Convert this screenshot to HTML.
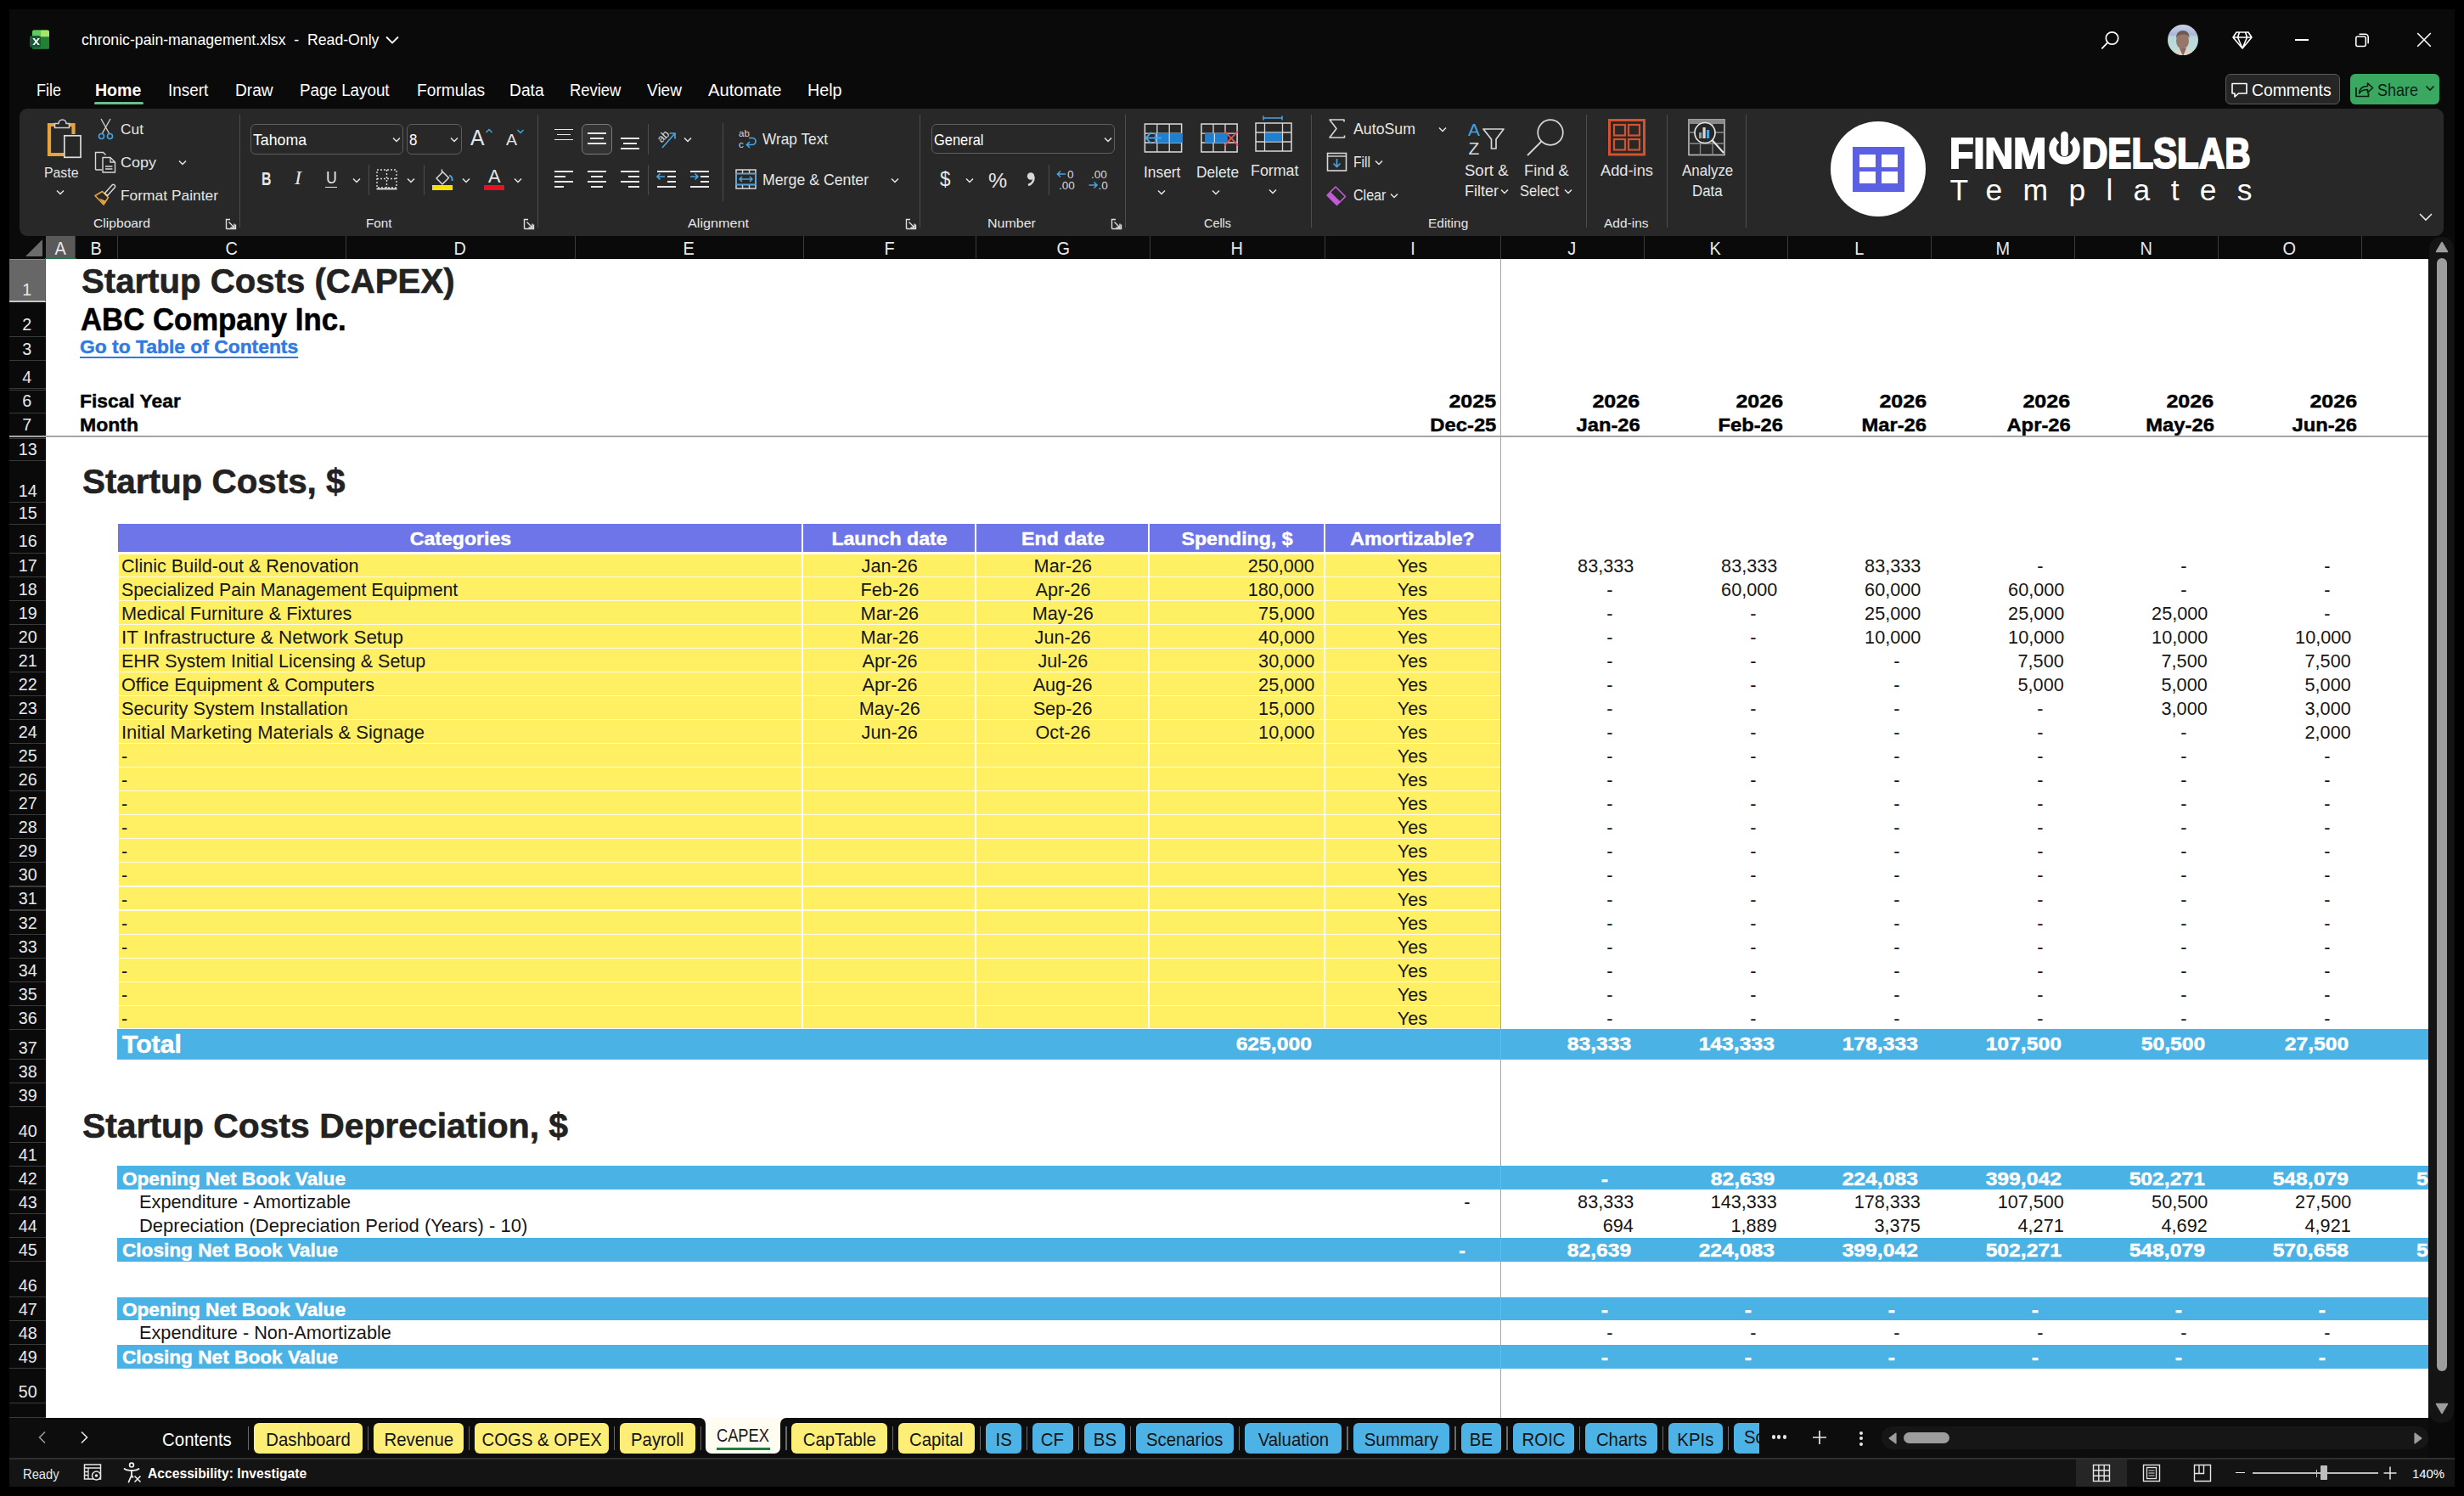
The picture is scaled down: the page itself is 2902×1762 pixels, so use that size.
<!DOCTYPE html><html><head><meta charset="utf-8"><style>html,body{margin:0;padding:0;width:2902px;height:1762px;overflow:hidden;background:#000;font-family:"Liberation Sans",sans-serif}div,svg{box-sizing:border-box}</style></head><body><div style="position:absolute;left:0.00px;top:0.00px;width:2902.00px;height:1762.00px;background:#000000;"></div><div style="position:absolute;left:11.00px;top:11.00px;width:2879.50px;height:1740.00px;background:#0a0a0a;"></div><svg style="position:absolute;left:33.00px;top:33.00px;" width="28" height="28" viewBox="0 0 28 28"><rect x="5" y="2.5" width="20" height="22" rx="2" fill="#2a8a3a"/><path d="M5 4.5 a2 2 0 0 1 2 -2 h8 v8 h-10 z" fill="#5fcb5e"/><path d="M15 2.5 h8 a2 2 0 0 1 2 2 v6 h-10 z" fill="#a6e46a"/><rect x="5" y="10.5" width="20" height="14" rx="0" fill="#208034"/><rect x="2" y="9" width="13" height="14" rx="2.5" fill="#185c37"/><path d="M5.3 12 L8.5 16 L5.3 20 h2.3 L9.6 17.3 L11.6 20 h2.3 L10.7 16 L13.9 12 h-2.3 L9.6 14.7 L7.6 12 z" fill="#fff"/></svg><div style="position:absolute;left:96.00px;top:37.75px;width:0;height:0;display:flex;justify-content:flex-start"><span style="white-space:pre;line-height:1;font-family:'Liberation Sans',sans-serif;font-size:18.60px;font-weight:400;color:#ffffff;transform:scaleX(0.9498);transform-origin:0 0;">chronic-pain-management.xlsx  -  Read-Only</span></div><svg style="position:absolute;left:452.00px;top:40.00px;" width="20" height="14" viewBox="0 0 20 14"><path d="M3 3.5 L10 10.5 L17 3.5" stroke="#fff" stroke-width="1.8" fill="none"/></svg><svg style="position:absolute;left:2472.00px;top:34.00px;" width="28" height="28" viewBox="0 0 28 28"><circle cx="15.5" cy="11" r="7.2" stroke="#fff" stroke-width="1.7" fill="none"/><path d="M10.3 16.2 L3.8 22.8" stroke="#fff" stroke-width="1.8" stroke-linecap="round"/></svg><svg style="position:absolute;left:2553.00px;top:28.90px;" width="36" height="36" viewBox="0 0 36 36"><defs><clipPath id="avc"><circle cx="18" cy="18" r="18"/></clipPath><linearGradient id="avg" x1="0" y1="0" x2="0" y2="1"><stop offset="0" stop-color="#c9d2ea"/><stop offset="0.33" stop-color="#a9b8d8"/><stop offset="0.4" stop-color="#b9d6d8"/><stop offset="1" stop-color="#bfe0dc"/></linearGradient></defs><g clip-path="url(#avc)"><rect width="36" height="36" fill="url(#avg)"/><path d="M4 40 C6 30 12 28 18 28 C25 28 31 31 33 40 Z" fill="#ddd3c8"/><ellipse cx="17.5" cy="19" rx="7.5" ry="10" fill="#96786b"/><path d="M10 16 C10 9 14 7 18 7 C23 7 25.5 10 25.5 16 C24 12 20 11.5 18 11.5 C14 11.5 11 13 10 16 Z" fill="#6f5a52"/><path d="M14 28 L18 37 L22 28 Z" fill="#8b6a60"/></g></svg><svg style="position:absolute;left:2627.00px;top:33.00px;" width="28" height="28" viewBox="0 0 28 28"><path d="M7 5 H21 L25 11 L14 24 L3 11 Z M3 11 H25 M10.5 5 L8.5 11 L14 24 L19.5 11 L17.5 5" stroke="#fff" stroke-width="1.6" fill="none" stroke-linejoin="round"/></svg><div style="position:absolute;left:2702.50px;top:46.00px;width:16.00px;height:1.60px;background:#ffffff;"></div><svg style="position:absolute;left:2771.00px;top:36.00px;" width="24" height="22" viewBox="0 0 24 22"><rect x="3.8" y="7" width="11.5" height="11.5" rx="2" stroke="#fff" stroke-width="1.6" fill="none"/><path d="M7.5 4.2 h7.2 a3.5 3.5 0 0 1 3.5 3.5 v7.5" stroke="#fff" stroke-width="1.6" fill="none"/></svg><svg style="position:absolute;left:2843.00px;top:36.00px;" width="24" height="22" viewBox="0 0 24 22"><path d="M4.2 3 L19.8 18.8 M19.8 3 L4.2 18.8" stroke="#fff" stroke-width="1.6"/></svg><div style="position:absolute;left:42.70px;top:97.04px;width:0;height:0;display:flex;justify-content:flex-start"><span style="white-space:pre;line-height:1;font-family:'Liberation Sans',sans-serif;font-size:19.91px;font-weight:400;color:#ffffff;transform:scaleX(0.9009);transform-origin:0 0;">File</span></div><div style="position:absolute;left:111.70px;top:97.04px;width:0;height:0;display:flex;justify-content:flex-start"><span style="white-space:pre;line-height:1;font-family:'Liberation Sans',sans-serif;font-size:19.91px;font-weight:700;color:#ffffff;transform:scaleX(0.9817);transform-origin:0 0;">Home</span></div><div style="position:absolute;left:198.40px;top:97.04px;width:0;height:0;display:flex;justify-content:flex-start"><span style="white-space:pre;line-height:1;font-family:'Liberation Sans',sans-serif;font-size:19.91px;font-weight:400;color:#ffffff;transform:scaleX(0.9479);transform-origin:0 0;">Insert</span></div><div style="position:absolute;left:277.20px;top:97.04px;width:0;height:0;display:flex;justify-content:flex-start"><span style="white-space:pre;line-height:1;font-family:'Liberation Sans',sans-serif;font-size:19.91px;font-weight:400;color:#ffffff;transform:scaleX(0.9601);transform-origin:0 0;">Draw</span></div><div style="position:absolute;left:353.00px;top:97.04px;width:0;height:0;display:flex;justify-content:flex-start"><span style="white-space:pre;line-height:1;font-family:'Liberation Sans',sans-serif;font-size:19.91px;font-weight:400;color:#ffffff;transform:scaleX(0.9446);transform-origin:0 0;">Page Layout</span></div><div style="position:absolute;left:491.00px;top:97.04px;width:0;height:0;display:flex;justify-content:flex-start"><span style="white-space:pre;line-height:1;font-family:'Liberation Sans',sans-serif;font-size:19.91px;font-weight:400;color:#ffffff;transform:scaleX(0.9642);transform-origin:0 0;">Formulas</span></div><div style="position:absolute;left:599.80px;top:97.04px;width:0;height:0;display:flex;justify-content:flex-start"><span style="white-space:pre;line-height:1;font-family:'Liberation Sans',sans-serif;font-size:19.91px;font-weight:400;color:#ffffff;transform:scaleX(0.9652);transform-origin:0 0;">Data</span></div><div style="position:absolute;left:670.90px;top:97.04px;width:0;height:0;display:flex;justify-content:flex-start"><span style="white-space:pre;line-height:1;font-family:'Liberation Sans',sans-serif;font-size:19.91px;font-weight:400;color:#ffffff;transform:scaleX(0.9252);transform-origin:0 0;">Review</span></div><div style="position:absolute;left:761.80px;top:97.04px;width:0;height:0;display:flex;justify-content:flex-start"><span style="white-space:pre;line-height:1;font-family:'Liberation Sans',sans-serif;font-size:19.91px;font-weight:400;color:#ffffff;transform:scaleX(0.9580);transform-origin:0 0;">View</span></div><div style="position:absolute;left:834.00px;top:97.04px;width:0;height:0;display:flex;justify-content:flex-start"><span style="white-space:pre;line-height:1;font-family:'Liberation Sans',sans-serif;font-size:19.91px;font-weight:400;color:#ffffff;transform:scaleX(1.0150);transform-origin:0 0;">Automate</span></div><div style="position:absolute;left:951.00px;top:97.04px;width:0;height:0;display:flex;justify-content:flex-start"><span style="white-space:pre;line-height:1;font-family:'Liberation Sans',sans-serif;font-size:19.91px;font-weight:400;color:#ffffff;transform:scaleX(0.9889);transform-origin:0 0;">Help</span></div><div style="position:absolute;left:111.20px;top:120.00px;width:57.80px;height:3.20px;background:#6cbf8b;border-radius:2px;"></div><div style="position:absolute;left:2621px;top:87.4px;width:135px;height:35.4px;border:1.3px solid #5a5a5a;border-radius:6px;background:#262626"></div><svg style="position:absolute;left:2626.00px;top:95.00px;" width="24" height="22" viewBox="0 0 24 22"><path d="M3 3.5 h17 v11.5 h-9.5 L6 19 v-4 H3 Z" stroke="#fff" stroke-width="1.6" fill="none" stroke-linejoin="round"/></svg><div style="position:absolute;left:2652.30px;top:97.29px;width:0;height:0;display:flex;justify-content:flex-start"><span style="white-space:pre;line-height:1;font-family:'Liberation Sans',sans-serif;font-size:19.62px;font-weight:400;color:#ffffff;transform:scaleX(0.9872);transform-origin:0 0;">Comments</span></div><div style="position:absolute;left:2768.20px;top:87.40px;width:104.50px;height:35.40px;background:#3aa860;border-radius:6px;"></div><svg style="position:absolute;left:2771.00px;top:93.00px;" width="26" height="24" viewBox="0 0 26 24"><path d="M4 10 v10.5 h14.5 v-4" stroke="#0b1f10" stroke-width="1.7" fill="none"/><path d="M7.5 17 C8 11 12 8.5 17.5 8.5 V5 L23.5 10.5 L17.5 16 V12.5 C13 12.5 10 13.5 7.5 17 Z" stroke="#0b1f10" stroke-width="1.6" fill="none" stroke-linejoin="round"/></svg><div style="position:absolute;left:2799.50px;top:97.29px;width:0;height:0;display:flex;justify-content:flex-start"><span style="white-space:pre;line-height:1;font-family:'Liberation Sans',sans-serif;font-size:19.62px;font-weight:400;color:#0b1f10;transform:scaleX(0.9173);transform-origin:0 0;">Share</span></div><svg style="position:absolute;left:2855.00px;top:99.00px;" width="14" height="10" viewBox="0 0 14 10"><path d="M2.5 2.5 L7 7 L11.5 2.5" stroke="#0b1f10" stroke-width="1.6" fill="none"/></svg><div style="position:absolute;left:23.00px;top:127.80px;width:2855.00px;height:149.90px;background:#282828;border-radius:9px;"></div><div style="position:absolute;left:281.80px;top:135.00px;width:1.30px;height:133.00px;background:#4d4d4d;"></div><div style="position:absolute;left:633.00px;top:135.00px;width:1.30px;height:133.00px;background:#4d4d4d;"></div><div style="position:absolute;left:1082.60px;top:135.00px;width:1.30px;height:133.00px;background:#4d4d4d;"></div><div style="position:absolute;left:1324.90px;top:135.00px;width:1.30px;height:133.00px;background:#4d4d4d;"></div><div style="position:absolute;left:1544.00px;top:135.00px;width:1.30px;height:133.00px;background:#4d4d4d;"></div><div style="position:absolute;left:1868.10px;top:135.00px;width:1.30px;height:133.00px;background:#4d4d4d;"></div><div style="position:absolute;left:1962.80px;top:135.00px;width:1.30px;height:133.00px;background:#4d4d4d;"></div><div style="position:absolute;left:2056.00px;top:135.00px;width:1.30px;height:133.00px;background:#4d4d4d;"></div><div style="position:absolute;left:109.60px;top:254.95px;width:0;height:0;display:flex;justify-content:flex-start"><span style="white-space:pre;line-height:1;font-family:'Liberation Sans',sans-serif;font-size:15.41px;font-weight:400;color:#e6e6e6;transform:scaleX(1.0153);transform-origin:0 0;">Clipboard</span></div><div style="position:absolute;left:430.50px;top:254.95px;width:0;height:0;display:flex;justify-content:flex-start"><span style="white-space:pre;line-height:1;font-family:'Liberation Sans',sans-serif;font-size:15.41px;font-weight:400;color:#e6e6e6;transform:scaleX(0.9904);transform-origin:0 0;">Font</span></div><div style="position:absolute;left:810.00px;top:254.95px;width:0;height:0;display:flex;justify-content:flex-start"><span style="white-space:pre;line-height:1;font-family:'Liberation Sans',sans-serif;font-size:15.41px;font-weight:400;color:#e6e6e6;transform:scaleX(1.0518);transform-origin:0 0;">Alignment</span></div><div style="position:absolute;left:1163.40px;top:254.95px;width:0;height:0;display:flex;justify-content:flex-start"><span style="white-space:pre;line-height:1;font-family:'Liberation Sans',sans-serif;font-size:15.41px;font-weight:400;color:#e6e6e6;transform:scaleX(1.0393);transform-origin:0 0;">Number</span></div><div style="position:absolute;left:1418.00px;top:254.95px;width:0;height:0;display:flex;justify-content:flex-start"><span style="white-space:pre;line-height:1;font-family:'Liberation Sans',sans-serif;font-size:15.41px;font-weight:400;color:#e6e6e6;transform:scaleX(0.9352);transform-origin:0 0;">Cells</span></div><div style="position:absolute;left:1682.40px;top:254.95px;width:0;height:0;display:flex;justify-content:flex-start"><span style="white-space:pre;line-height:1;font-family:'Liberation Sans',sans-serif;font-size:15.41px;font-weight:400;color:#e6e6e6;transform:scaleX(1.0029);transform-origin:0 0;">Editing</span></div><div style="position:absolute;left:1888.50px;top:254.95px;width:0;height:0;display:flex;justify-content:flex-start"><span style="white-space:pre;line-height:1;font-family:'Liberation Sans',sans-serif;font-size:15.41px;font-weight:400;color:#e6e6e6;transform:scaleX(1.0060);transform-origin:0 0;">Add-ins</span></div><svg style="position:absolute;left:264.70px;top:256.50px;" width="14" height="14" viewBox="0 0 14 14"><path d="M1.5 12.5 V1.5 H6 M12.5 7.5 V12.5 H1.5" stroke="#e0e0e0" stroke-width="1.4" fill="none"/><path d="M4.5 4.5 L11 11 M11 6.5 V11 H6.5" stroke="#e0e0e0" stroke-width="1.4" fill="none"/></svg><svg style="position:absolute;left:616.00px;top:256.50px;" width="14" height="14" viewBox="0 0 14 14"><path d="M1.5 12.5 V1.5 H6 M12.5 7.5 V12.5 H1.5" stroke="#e0e0e0" stroke-width="1.4" fill="none"/><path d="M4.5 4.5 L11 11 M11 6.5 V11 H6.5" stroke="#e0e0e0" stroke-width="1.4" fill="none"/></svg><svg style="position:absolute;left:1066.00px;top:256.50px;" width="14" height="14" viewBox="0 0 14 14"><path d="M1.5 12.5 V1.5 H6 M12.5 7.5 V12.5 H1.5" stroke="#e0e0e0" stroke-width="1.4" fill="none"/><path d="M4.5 4.5 L11 11 M11 6.5 V11 H6.5" stroke="#e0e0e0" stroke-width="1.4" fill="none"/></svg><svg style="position:absolute;left:1308.00px;top:256.50px;" width="14" height="14" viewBox="0 0 14 14"><path d="M1.5 12.5 V1.5 H6 M12.5 7.5 V12.5 H1.5" stroke="#e0e0e0" stroke-width="1.4" fill="none"/><path d="M4.5 4.5 L11 11 M11 6.5 V11 H6.5" stroke="#e0e0e0" stroke-width="1.4" fill="none"/></svg><svg style="position:absolute;left:2848.00px;top:249.00px;" width="18" height="14" viewBox="0 0 18 14"><path d="M2 3 L9 10 L16 3" stroke="#e6e6e6" stroke-width="1.6" fill="none"/></svg><svg style="position:absolute;left:50.00px;top:138.00px;" width="50" height="52" viewBox="0 0 50 52"><path d="M15 9 H8 V44 H25" stroke="#e8a33a" stroke-width="4.2" fill="none"/><path d="M30 9 H36.5 V20" stroke="#e8a33a" stroke-width="4.2" fill="none"/><path d="M14.5 12.5 V7.5 H19 a4.5 4.5 0 0 1 9 0 H31.5 V12.5 Z" stroke="#cfcfcf" stroke-width="1.6" fill="#262626"/><rect x="25.8" y="21.8" width="19.2" height="25.5" stroke="#dcdcdc" stroke-width="1.7" fill="#262626"/></svg><div style="position:absolute;left:51.50px;top:194.88px;width:0;height:0;display:flex;justify-content:flex-start"><span style="white-space:pre;line-height:1;font-family:'Liberation Sans',sans-serif;font-size:17.15px;font-weight:400;color:#e6e6e6;transform:scaleX(0.9237);transform-origin:0 0;">Paste</span></div><svg style="position:absolute;left:65.30px;top:221.50px;" width="12" height="9" viewBox="0 0 12 9"><path d="M2 2.5 L6 6.5 L10 2.5" stroke="#e6e6e6" stroke-width="1.5" fill="none"/></svg><svg style="position:absolute;left:113.00px;top:138.00px;" width="24" height="28" viewBox="0 0 24 28"><path d="M6 2 L15.5 19 M17 2 L7.5 19" stroke="#d8d8d8" stroke-width="1.3" fill="none"/><circle cx="6.5" cy="22.5" r="3" stroke="#4aa3df" stroke-width="1.6" fill="none"/><circle cx="16.5" cy="22.5" r="3" stroke="#4aa3df" stroke-width="1.6" fill="none"/></svg><div style="position:absolute;left:142.00px;top:144.18px;width:0;height:0;display:flex;justify-content:flex-start"><span style="white-space:pre;line-height:1;font-family:'Liberation Sans',sans-serif;font-size:17.15px;font-weight:400;color:#e6e6e6;transform:scaleX(1.0117);transform-origin:0 0;">Cut</span></div><svg style="position:absolute;left:110.00px;top:177.00px;" width="28" height="28" viewBox="0 0 28 28"><path d="M2.5 23 V2.5 H11.5 L14.5 5.5 M2.5 23 H10" stroke="#d8d8d8" stroke-width="1.4" fill="none"/><path d="M11 8.5 H20 L25.5 14 V26 H11 Z" stroke="#d8d8d8" stroke-width="1.4" fill="#262626" stroke-linejoin="round"/><path d="M20 8.5 V14 H25.5 M14 19 H22.5 M14 22 H22.5" stroke="#d8d8d8" stroke-width="1.3" fill="none"/></svg><div style="position:absolute;left:142.00px;top:183.08px;width:0;height:0;display:flex;justify-content:flex-start"><span style="white-space:pre;line-height:1;font-family:'Liberation Sans',sans-serif;font-size:17.15px;font-weight:400;color:#e6e6e6;transform:scaleX(1.0496);transform-origin:0 0;">Copy</span></div><svg style="position:absolute;left:209.40px;top:187.30px;" width="12" height="9" viewBox="0 0 12 9"><path d="M2 2.5 L6 6.5 L10 2.5" stroke="#e6e6e6" stroke-width="1.5" fill="none"/></svg><svg style="position:absolute;left:110.00px;top:216.00px;" width="28" height="27" viewBox="0 0 28 27"><path d="M2 14.5 L10.5 9.5 L17.5 16.5 L12 25 Z" stroke="#e8a33a" stroke-width="1.6" fill="none" stroke-linejoin="round"/><path d="M7 17.5 L14.8 20.8 L12 25 Z" fill="#e8a33a"/><path d="M13.5 11.5 L16.5 14.5 L25 5 a2.1 2.1 0 0 0 -3 -3 Z" stroke="#d8d8d8" stroke-width="1.5" fill="none" stroke-linejoin="round"/></svg><div style="position:absolute;left:142.00px;top:222.48px;width:0;height:0;display:flex;justify-content:flex-start"><span style="white-space:pre;line-height:1;font-family:'Liberation Sans',sans-serif;font-size:17.15px;font-weight:400;color:#e6e6e6;transform:scaleX(1.0145);transform-origin:0 0;">Format Painter</span></div><div style="position:absolute;left:295.3px;top:146.3px;width:180.2px;height:35.4px;border:1.3px solid #5e5e5e;border-radius:6px"></div><div style="position:absolute;left:479.4px;top:146.3px;width:64.3px;height:35.4px;border:1.3px solid #5e5e5e;border-radius:6px"></div><div style="position:absolute;left:298.30px;top:155.84px;width:0;height:0;display:flex;justify-content:flex-start"><span style="white-space:pre;line-height:1;font-family:'Liberation Sans',sans-serif;font-size:18.02px;font-weight:400;color:#ffffff;transform:scaleX(0.9829);transform-origin:0 0;">Tahoma</span></div><svg style="position:absolute;left:461.00px;top:160.00px;" width="12" height="9" viewBox="0 0 12 9"><path d="M2 2.5 L6 6.5 L10 2.5" stroke="#e6e6e6" stroke-width="1.5" fill="none"/></svg><div style="position:absolute;left:482.40px;top:155.84px;width:0;height:0;display:flex;justify-content:flex-start"><span style="white-space:pre;line-height:1;font-family:'Liberation Sans',sans-serif;font-size:18.02px;font-weight:400;color:#ffffff;transform:scaleX(0.9400);transform-origin:0 0;">8</span></div><svg style="position:absolute;left:529.00px;top:160.00px;" width="12" height="9" viewBox="0 0 12 9"><path d="M2 2.5 L6 6.5 L10 2.5" stroke="#e6e6e6" stroke-width="1.5" fill="none"/></svg><div style="position:absolute;left:554.00px;top:148.70px;width:0;height:0;display:flex;justify-content:flex-start"><span style="white-space:pre;line-height:1;font-family:'Liberation Sans',sans-serif;font-size:26.45px;font-weight:400;color:#e6e6e6;transform:scaleX(0.9353);transform-origin:0 0;">A</span></div><svg style="position:absolute;left:571.00px;top:150.00px;" width="10" height="8" viewBox="0 0 10 8"><path d="M1.5 6 L5 2.5 L8.5 6" stroke="#4aa3df" stroke-width="1.5" fill="none"/></svg><div style="position:absolute;left:595.60px;top:154.86px;width:0;height:0;display:flex;justify-content:flex-start"><span style="white-space:pre;line-height:1;font-family:'Liberation Sans',sans-serif;font-size:19.19px;font-weight:400;color:#e6e6e6;transform:scaleX(1.0159);transform-origin:0 0;">A</span></div><svg style="position:absolute;left:608.00px;top:151.00px;" width="10" height="8" viewBox="0 0 10 8"><path d="M1.5 2 L5 5.5 L8.5 2" stroke="#4aa3df" stroke-width="1.5" fill="none"/></svg><div style="position:absolute;left:307.50px;top:199.00px;width:0;height:0;display:flex;justify-content:flex-start"><span style="white-space:pre;line-height:1;font-family:'Liberation Sans',sans-serif;font-size:22.67px;font-weight:700;color:#e6e6e6;transform:scaleX(0.7023);transform-origin:0 0;">B</span></div><div style="position:absolute;left:346.80px;top:199.00px;width:0;height:0;display:flex;justify-content:flex-start"><span style="white-space:pre;line-height:1;font-family:'Liberation Serif',sans-serif;font-size:22.67px;font-weight:400;color:#e6e6e6;transform:scaleX(1.0600);transform-origin:0 0;font-style:italic">I</span></div><div style="position:absolute;left:383.50px;top:199.02px;width:0;height:0;display:flex;justify-content:flex-start"><span style="white-space:pre;line-height:1;font-family:'Liberation Sans',sans-serif;font-size:20.06px;font-weight:400;color:#e6e6e6;transform:scaleX(0.8837);transform-origin:0 0;">U</span></div><div style="position:absolute;left:383.00px;top:219.60px;width:14.00px;height:1.60px;background:#e6e6e6;"></div><svg style="position:absolute;left:413.50px;top:207.80px;" width="12" height="9" viewBox="0 0 12 9"><path d="M2 2.5 L6 6.5 L10 2.5" stroke="#e6e6e6" stroke-width="1.5" fill="none"/></svg><div style="position:absolute;left:434.00px;top:194.00px;width:1.30px;height:36.00px;background:#4d4d4d;"></div><svg style="position:absolute;left:442.00px;top:198.00px;" width="27" height="27" viewBox="0 0 27 27"><rect x="2" y="2" width="23" height="21" stroke="#d8d8d8" stroke-width="1.4" stroke-dasharray="2 2" fill="none"/><path d="M13.5 2 V23 M2 12.5 H25" stroke="#d8d8d8" stroke-width="1.4" stroke-dasharray="2 2"/><path d="M1.5 24.5 H25.5" stroke="#e6e6e6" stroke-width="1.8"/></svg><svg style="position:absolute;left:478.30px;top:207.80px;" width="12" height="9" viewBox="0 0 12 9"><path d="M2 2.5 L6 6.5 L10 2.5" stroke="#e6e6e6" stroke-width="1.5" fill="none"/></svg><div style="position:absolute;left:498.90px;top:194.00px;width:1.30px;height:36.00px;background:#4d4d4d;"></div><svg style="position:absolute;left:510.00px;top:198.00px;" width="26" height="21" viewBox="0 0 26 21"><path d="M4 12 L11.5 4.5 L18.5 11.5 L11 19 Z" stroke="#d8d8d8" stroke-width="1.5" fill="none" stroke-linejoin="round"/><path d="M10.5 5 V1.5" stroke="#d8d8d8" stroke-width="1.5"/><path d="M19 9 C22 9 23 12 22.5 15" stroke="#4aa3df" stroke-width="2" fill="none"/></svg><div style="position:absolute;left:509.00px;top:218.00px;width:24.00px;height:6.00px;background:#f5e000;"></div><svg style="position:absolute;left:543.00px;top:207.80px;" width="12" height="9" viewBox="0 0 12 9"><path d="M2 2.5 L6 6.5 L10 2.5" stroke="#e6e6e6" stroke-width="1.5" fill="none"/></svg><div style="position:absolute;left:575.00px;top:197.42px;width:0;height:0;display:flex;justify-content:flex-start"><span style="white-space:pre;line-height:1;font-family:'Liberation Sans',sans-serif;font-size:22.53px;font-weight:400;color:#e6e6e6;transform:scaleX(0.9647);transform-origin:0 0;">A</span></div><div style="position:absolute;left:570.00px;top:218.00px;width:24.00px;height:6.00px;background:#e81123;"></div><svg style="position:absolute;left:604.00px;top:207.80px;" width="12" height="9" viewBox="0 0 12 9"><path d="M2 2.5 L6 6.5 L10 2.5" stroke="#e6e6e6" stroke-width="1.5" fill="none"/></svg><div style="position:absolute;left:653.30px;top:151.90px;width:21.50px;height:1.60px;background:#e6e6e6;"></div><div style="position:absolute;left:656.30px;top:157.80px;width:15.50px;height:1.60px;background:#e6e6e6;"></div><div style="position:absolute;left:653.30px;top:163.70px;width:21.50px;height:1.60px;background:#e6e6e6;"></div><div style="position:absolute;left:685.4px;top:146px;width:35.5px;height:35.6px;border:1.3px solid #7a7a7a;border-radius:6px;background:#333"></div><div style="position:absolute;left:692.20px;top:156.20px;width:21.50px;height:1.60px;background:#e6e6e6;"></div><div style="position:absolute;left:695.20px;top:162.20px;width:15.50px;height:1.60px;background:#e6e6e6;"></div><div style="position:absolute;left:692.20px;top:168.20px;width:21.50px;height:1.60px;background:#e6e6e6;"></div><div style="position:absolute;left:731.30px;top:162.20px;width:21.50px;height:1.60px;background:#e6e6e6;"></div><div style="position:absolute;left:734.30px;top:168.20px;width:15.50px;height:1.60px;background:#e6e6e6;"></div><div style="position:absolute;left:731.30px;top:174.20px;width:21.50px;height:1.60px;background:#e6e6e6;"></div><div style="position:absolute;left:763.00px;top:146.00px;width:1.20px;height:36.00px;background:#4d4d4d;"></div><svg style="position:absolute;left:772.00px;top:150.00px;" width="28" height="28" viewBox="0 0 28 28"><text x="2" y="15" font-family="Liberation Sans" font-size="13" fill="#d8d8d8" transform="rotate(-45 9 11)">ab</text><path d="M8 24 L23 7 M16.5 7 H23 V13.5" stroke="#4aa3df" stroke-width="1.7" fill="none"/></svg><svg style="position:absolute;left:804.00px;top:159.50px;" width="12" height="9" viewBox="0 0 12 9"><path d="M2 2.5 L6 6.5 L10 2.5" stroke="#e6e6e6" stroke-width="1.5" fill="none"/></svg><div style="position:absolute;left:851.00px;top:145.00px;width:1.20px;height:92.00px;background:#4d4d4d;"></div><svg style="position:absolute;left:868.00px;top:150.00px;" width="26" height="28" viewBox="0 0 26 28"><text x="2" y="11" font-family="Liberation Sans" font-size="11.5" fill="#d8d8d8">ab</text><text x="2" y="24" font-family="Liberation Sans" font-size="11.5" fill="#d8d8d8">c</text><path d="M12 20.5 H18 a4 4 0 0 0 0 -8 H14" stroke="#4aa3df" stroke-width="1.7" fill="none"/><path d="M15 17 L11.5 20.5 L15 24" stroke="#4aa3df" stroke-width="1.7" fill="none"/></svg><div style="position:absolute;left:897.90px;top:155.51px;width:0;height:0;display:flex;justify-content:flex-start"><span style="white-space:pre;line-height:1;font-family:'Liberation Sans',sans-serif;font-size:17.59px;font-weight:400;color:#e6e6e6;transform:scaleX(0.9824);transform-origin:0 0;">Wrap Text</span></div><div style="position:absolute;left:653.30px;top:201.20px;width:21.50px;height:1.60px;background:#e6e6e6;"></div><div style="position:absolute;left:653.30px;top:207.20px;width:13.00px;height:1.60px;background:#e6e6e6;"></div><div style="position:absolute;left:653.30px;top:213.20px;width:21.50px;height:1.60px;background:#e6e6e6;"></div><div style="position:absolute;left:653.30px;top:219.20px;width:11.00px;height:1.60px;background:#e6e6e6;"></div><div style="position:absolute;left:692.20px;top:201.20px;width:21.50px;height:1.60px;background:#e6e6e6;"></div><div style="position:absolute;left:696.20px;top:207.20px;width:13.50px;height:1.60px;background:#e6e6e6;"></div><div style="position:absolute;left:692.20px;top:213.20px;width:21.50px;height:1.60px;background:#e6e6e6;"></div><div style="position:absolute;left:696.20px;top:219.20px;width:13.50px;height:1.60px;background:#e6e6e6;"></div><div style="position:absolute;left:731.30px;top:201.20px;width:21.50px;height:1.60px;background:#e6e6e6;"></div><div style="position:absolute;left:739.80px;top:207.20px;width:13.00px;height:1.60px;background:#e6e6e6;"></div><div style="position:absolute;left:731.30px;top:213.20px;width:21.50px;height:1.60px;background:#e6e6e6;"></div><div style="position:absolute;left:739.80px;top:219.20px;width:13.00px;height:1.60px;background:#e6e6e6;"></div><div style="position:absolute;left:763.00px;top:194.00px;width:1.20px;height:36.00px;background:#4d4d4d;"></div><div style="position:absolute;left:773.70px;top:201.20px;width:22.00px;height:1.60px;background:#e6e6e6;"></div><div style="position:absolute;left:785.70px;top:207.20px;width:10.00px;height:1.60px;background:#e6e6e6;"></div><div style="position:absolute;left:785.70px;top:213.20px;width:10.00px;height:1.60px;background:#e6e6e6;"></div><div style="position:absolute;left:773.70px;top:219.20px;width:22.00px;height:1.60px;background:#e6e6e6;"></div><svg style="position:absolute;left:772.00px;top:203.00px;" width="12" height="12" viewBox="0 0 12 12"><path d="M11 5 H2 M5.5 1.5 L2 5 L5.5 8.5" stroke="#4aa3df" stroke-width="1.7" fill="none"/></svg><div style="position:absolute;left:813.00px;top:201.20px;width:22.00px;height:1.60px;background:#e6e6e6;"></div><div style="position:absolute;left:825.00px;top:207.20px;width:10.00px;height:1.60px;background:#e6e6e6;"></div><div style="position:absolute;left:825.00px;top:213.20px;width:10.00px;height:1.60px;background:#e6e6e6;"></div><div style="position:absolute;left:813.00px;top:219.20px;width:22.00px;height:1.60px;background:#e6e6e6;"></div><svg style="position:absolute;left:812.00px;top:203.00px;" width="12" height="12" viewBox="0 0 12 12"><path d="M1 5 H10 M6.5 1.5 L10 5 L6.5 8.5" stroke="#4aa3df" stroke-width="1.7" fill="none"/></svg><svg style="position:absolute;left:865.00px;top:198.00px;" width="27" height="26" viewBox="0 0 27 26"><rect x="2" y="2" width="23" height="22" stroke="#d8d8d8" stroke-width="1.5" fill="none"/><path d="M2 6.5 H25 M2 19.5 H25 M9.5 2 V6.5 M17.5 2 V6.5 M9.5 19.5 V24 M17.5 19.5 V24" stroke="#d8d8d8" stroke-width="1.4"/><rect x="2" y="6.5" width="23" height="13" stroke="#4aa3df" stroke-width="1.5" fill="none"/><path d="M6 13 H21 M9 10 L6 13 L9 16 M18 10 L21 13 L18 16" stroke="#4aa3df" stroke-width="1.5" fill="none"/></svg><div style="position:absolute;left:897.90px;top:203.71px;width:0;height:0;display:flex;justify-content:flex-start"><span style="white-space:pre;line-height:1;font-family:'Liberation Sans',sans-serif;font-size:17.59px;font-weight:400;color:#e6e6e6;transform:scaleX(1.0082);transform-origin:0 0;">Merge &amp; Center</span></div><svg style="position:absolute;left:1047.70px;top:208.00px;" width="12" height="9" viewBox="0 0 12 9"><path d="M2 2.5 L6 6.5 L10 2.5" stroke="#e6e6e6" stroke-width="1.5" fill="none"/></svg><div style="position:absolute;left:1096.6px;top:146.3px;width:216.8px;height:35.1px;border:1.3px solid #5e5e5e;border-radius:6px"></div><div style="position:absolute;left:1099.50px;top:155.74px;width:0;height:0;display:flex;justify-content:flex-start"><span style="white-space:pre;line-height:1;font-family:'Liberation Sans',sans-serif;font-size:18.02px;font-weight:400;color:#ffffff;transform:scaleX(0.9127);transform-origin:0 0;">General</span></div><svg style="position:absolute;left:1299.00px;top:159.50px;" width="12" height="9" viewBox="0 0 12 9"><path d="M2 2.5 L6 6.5 L10 2.5" stroke="#e6e6e6" stroke-width="1.5" fill="none"/></svg><div style="position:absolute;left:1106.50px;top:199.19px;width:0;height:0;display:flex;justify-content:flex-start"><span style="white-space:pre;line-height:1;font-family:'Liberation Sans',sans-serif;font-size:23.98px;font-weight:400;color:#e6e6e6;transform:scaleX(0.9368);transform-origin:0 0;">$</span></div><svg style="position:absolute;left:1136.00px;top:208.00px;" width="12" height="9" viewBox="0 0 12 9"><path d="M2 2.5 L6 6.5 L10 2.5" stroke="#e6e6e6" stroke-width="1.5" fill="none"/></svg><div style="position:absolute;left:1163.80px;top:201.56px;width:0;height:0;display:flex;justify-content:flex-start"><span style="white-space:pre;line-height:1;font-family:'Liberation Sans',sans-serif;font-size:23.55px;font-weight:400;color:#e6e6e6;transform:scaleX(1.0603);transform-origin:0 0;">%</span></div><svg style="position:absolute;left:1207.00px;top:201.00px;" width="14" height="22" viewBox="0 0 14 22"><circle cx="7" cy="6.5" r="4.2" fill="#d8d8d8"/><path d="M10.6 7 C10.8 12 8.5 15.5 4 17" stroke="#d8d8d8" stroke-width="2.4" fill="none"/></svg><div style="position:absolute;left:1235.00px;top:194.00px;width:1.20px;height:36.00px;background:#4d4d4d;"></div><svg style="position:absolute;left:1243.00px;top:198.00px;" width="28" height="28" viewBox="0 0 28 28"><path d="M12 7 H2.5 M6 3.5 L2.5 7 L6 10.5" stroke="#4aa3df" stroke-width="1.6" fill="none"/><text x="14" y="12" font-family="Liberation Sans" font-size="13.5" fill="#d8d8d8">0</text><text x="4" y="25" font-family="Liberation Sans" font-size="13.5" fill="#d8d8d8">.00</text></svg><svg style="position:absolute;left:1281.00px;top:198.00px;" width="28" height="28" viewBox="0 0 28 28"><text x="4" y="12" font-family="Liberation Sans" font-size="13.5" fill="#d8d8d8">.00</text><path d="M1.5 20 H11 M7.5 16.5 L11 20 L7.5 23.5" stroke="#4aa3df" stroke-width="1.6" fill="none"/><text x="12.5" y="25" font-family="Liberation Sans" font-size="13.5" fill="#d8d8d8">.0</text></svg><svg style="position:absolute;left:1346.00px;top:145.00px;" width="48" height="35" viewBox="0 0 44 34"><rect x="1" y="1" width="42" height="32" stroke="#d8d8d8" stroke-width="1.5" fill="none"/><path d="M15.0 1 V33" stroke="#d8d8d8" stroke-width="1.3"/><path d="M29.0 1 V33" stroke="#d8d8d8" stroke-width="1.3"/><path d="M1 11.7 H43" stroke="#d8d8d8" stroke-width="1.3"/><path d="M1 22.3 H43" stroke="#d8d8d8" stroke-width="1.3"/><rect x="12" y="11.5" width="32" height="11" fill="#1f7fd0"/><path d="M14.5 12 V22 M29 12 V22" stroke="#d8d8d8" stroke-width="1.2"/><path d="M20 17 H2.5 M8.5 10.5 L2 17 L8.5 23.5" stroke="#4aa3df" stroke-width="1.8" fill="none"/></svg><div style="position:absolute;left:1347.30px;top:194.86px;width:0;height:0;display:flex;justify-content:flex-start"><span style="white-space:pre;line-height:1;font-family:'Liberation Sans',sans-serif;font-size:17.88px;font-weight:400;color:#e6e6e6;transform:scaleX(0.9715);transform-origin:0 0;">Insert</span></div><svg style="position:absolute;left:1362.00px;top:221.70px;" width="12" height="9" viewBox="0 0 12 9"><path d="M2 2.5 L6 6.5 L10 2.5" stroke="#e6e6e6" stroke-width="1.5" fill="none"/></svg><svg style="position:absolute;left:1413.00px;top:145.00px;" width="46" height="35" viewBox="0 0 43 34"><rect x="1" y="1" width="41" height="32" stroke="#d8d8d8" stroke-width="1.5" fill="none"/><path d="M14.7 1 V33" stroke="#d8d8d8" stroke-width="1.3"/><path d="M28.3 1 V33" stroke="#d8d8d8" stroke-width="1.3"/><path d="M1 11.7 H42" stroke="#d8d8d8" stroke-width="1.3"/><path d="M1 22.3 H42" stroke="#d8d8d8" stroke-width="1.3"/><rect x="5" y="11.5" width="26" height="11" fill="#1f7fd0"/><path d="M16 12 V22" stroke="#d8d8d8" stroke-width="1.2"/><path d="M27.5 9 L43 25.5 M43 9 L27.5 25.5" stroke="#e05050" stroke-width="1.8"/></svg><div style="position:absolute;left:1409.00px;top:194.86px;width:0;height:0;display:flex;justify-content:flex-start"><span style="white-space:pre;line-height:1;font-family:'Liberation Sans',sans-serif;font-size:17.88px;font-weight:400;color:#e6e6e6;transform:scaleX(0.9685);transform-origin:0 0;">Delete</span></div><svg style="position:absolute;left:1426.00px;top:221.70px;" width="12" height="9" viewBox="0 0 12 9"><path d="M2 2.5 L6 6.5 L10 2.5" stroke="#e6e6e6" stroke-width="1.5" fill="none"/></svg><svg style="position:absolute;left:1478.00px;top:136.00px;" width="44" height="44" viewBox="0 0 44 44"><path d="M10 3 H32 M10 0.5 V5.5 M32 0.5 V5.5" stroke="#4aa3df" stroke-width="1.5"/><rect x="1" y="9" width="42" height="33" stroke="#d8d8d8" stroke-width="1.5" fill="none"/><path d="M11.5 9 V42 M32.5 9 V42 M1 20 H43 M1 31 H43" stroke="#d8d8d8" stroke-width="1.3"/><rect x="12" y="20.5" width="20" height="10" fill="#1f7fd0"/></svg><div style="position:absolute;left:1472.60px;top:192.86px;width:0;height:0;display:flex;justify-content:flex-start"><span style="white-space:pre;line-height:1;font-family:'Liberation Sans',sans-serif;font-size:17.88px;font-weight:400;color:#e6e6e6;transform:scaleX(0.9971);transform-origin:0 0;">Format</span></div><svg style="position:absolute;left:1493.00px;top:220.50px;" width="12" height="9" viewBox="0 0 12 9"><path d="M2 2.5 L6 6.5 L10 2.5" stroke="#e6e6e6" stroke-width="1.5" fill="none"/></svg><svg style="position:absolute;left:1563.00px;top:139.00px;" width="24" height="26" viewBox="0 0 24 26"><path d="M20 4.5 V2 H3 L11 12.5 L3 23 H20.5 V20.5" stroke="#d8d8d8" stroke-width="1.6" fill="none" stroke-linejoin="round"/></svg><div style="position:absolute;left:1593.70px;top:144.26px;width:0;height:0;display:flex;justify-content:flex-start"><span style="white-space:pre;line-height:1;font-family:'Liberation Sans',sans-serif;font-size:17.88px;font-weight:400;color:#e6e6e6;transform:scaleX(0.9936);transform-origin:0 0;">AutoSum</span></div><svg style="position:absolute;left:1693.00px;top:148.00px;" width="12" height="9" viewBox="0 0 12 9"><path d="M2 2.5 L6 6.5 L10 2.5" stroke="#e6e6e6" stroke-width="1.5" fill="none"/></svg><svg style="position:absolute;left:1562.00px;top:179.00px;" width="26" height="24" viewBox="0 0 26 24"><rect x="1.5" y="1.5" width="22" height="20.5" stroke="#d8d8d8" stroke-width="1.6" fill="none"/><path d="M1.5 5 H23.5" stroke="#d8d8d8" stroke-width="1.4"/><path d="M12.5 8 V17.5 M8.5 13.5 L12.5 17.5 L16.5 13.5" stroke="#4aa3df" stroke-width="1.7" fill="none"/></svg><div style="position:absolute;left:1593.70px;top:182.66px;width:0;height:0;display:flex;justify-content:flex-start"><span style="white-space:pre;line-height:1;font-family:'Liberation Sans',sans-serif;font-size:17.88px;font-weight:400;color:#e6e6e6;transform:scaleX(0.8761);transform-origin:0 0;">Fill</span></div><svg style="position:absolute;left:1618.40px;top:187.00px;" width="12" height="9" viewBox="0 0 12 9"><path d="M2 2.5 L6 6.5 L10 2.5" stroke="#e6e6e6" stroke-width="1.5" fill="none"/></svg><svg style="position:absolute;left:1561.00px;top:217.00px;" width="26" height="26" viewBox="0 0 26 26"><path d="M2 13 L12 3 L23.5 14.5 L13.5 24.5 Z" stroke="#c25bd4" stroke-width="1.6" fill="none" stroke-linejoin="round"/><path d="M2 13 L6 9 L17.5 20.5 L13.5 24.5 Z" fill="#c25bd4"/></svg><div style="position:absolute;left:1593.70px;top:222.06px;width:0;height:0;display:flex;justify-content:flex-start"><span style="white-space:pre;line-height:1;font-family:'Liberation Sans',sans-serif;font-size:17.88px;font-weight:400;color:#e6e6e6;transform:scaleX(0.8996);transform-origin:0 0;">Clear</span></div><svg style="position:absolute;left:1636.00px;top:226.00px;" width="12" height="9" viewBox="0 0 12 9"><path d="M2 2.5 L6 6.5 L10 2.5" stroke="#e6e6e6" stroke-width="1.5" fill="none"/></svg><svg style="position:absolute;left:1728.00px;top:140.00px;" width="46" height="44" viewBox="0 0 46 44"><text x="1" y="20" font-family="Liberation Sans" font-size="21" fill="#4aa3df">A</text><text x="1.5" y="42" font-family="Liberation Sans" font-size="21" fill="#d8d8d8">Z</text><path d="M19 12 H43 L34 24 V35 H28.5 V24 Z" stroke="#d8d8d8" stroke-width="1.7" fill="none" stroke-linejoin="round"/></svg><div style="position:absolute;left:1725.20px;top:192.56px;width:0;height:0;display:flex;justify-content:flex-start"><span style="white-space:pre;line-height:1;font-family:'Liberation Sans',sans-serif;font-size:17.88px;font-weight:400;color:#e6e6e6;transform:scaleX(1.0375);transform-origin:0 0;">Sort &amp;</span></div><div style="position:absolute;left:1724.50px;top:216.66px;width:0;height:0;display:flex;justify-content:flex-start"><span style="white-space:pre;line-height:1;font-family:'Liberation Sans',sans-serif;font-size:17.88px;font-weight:400;color:#e6e6e6;transform:scaleX(1.0079);transform-origin:0 0;">Filter</span></div><svg style="position:absolute;left:1766.00px;top:221.00px;" width="12" height="9" viewBox="0 0 12 9"><path d="M2 2.5 L6 6.5 L10 2.5" stroke="#e6e6e6" stroke-width="1.5" fill="none"/></svg><svg style="position:absolute;left:1796.00px;top:138.00px;" width="48" height="48" viewBox="0 0 48 48"><circle cx="30" cy="18" r="14.8" stroke="#d8d8d8" stroke-width="1.7" fill="none"/><path d="M19.5 28.5 L3 45" stroke="#d8d8d8" stroke-width="1.8"/></svg><div style="position:absolute;left:1795.30px;top:192.56px;width:0;height:0;display:flex;justify-content:flex-start"><span style="white-space:pre;line-height:1;font-family:'Liberation Sans',sans-serif;font-size:17.88px;font-weight:400;color:#e6e6e6;transform:scaleX(1.0208);transform-origin:0 0;">Find &amp;</span></div><div style="position:absolute;left:1790.30px;top:216.66px;width:0;height:0;display:flex;justify-content:flex-start"><span style="white-space:pre;line-height:1;font-family:'Liberation Sans',sans-serif;font-size:17.88px;font-weight:400;color:#e6e6e6;transform:scaleX(0.9267);transform-origin:0 0;">Select</span></div><svg style="position:absolute;left:1840.80px;top:221.00px;" width="12" height="9" viewBox="0 0 12 9"><path d="M2 2.5 L6 6.5 L10 2.5" stroke="#e6e6e6" stroke-width="1.5" fill="none"/></svg><svg style="position:absolute;left:1893.00px;top:139.00px;" width="46" height="46" viewBox="0 0 46 46"><rect x="2.5" y="2.5" width="41" height="40.5" stroke="#d35230" stroke-width="3" fill="none"/><rect x="8" y="8" width="13" height="12.5" stroke="#d35230" stroke-width="2.2" fill="none"/><rect x="25" y="8" width="13" height="12.5" stroke="#d35230" stroke-width="2.2" fill="none"/><rect x="8" y="25" width="13" height="12.5" stroke="#d35230" stroke-width="2.2" fill="none"/><rect x="25" y="25" width="13" height="12.5" stroke="#d35230" stroke-width="2.2" fill="none"/></svg><div style="position:absolute;left:1885.20px;top:192.56px;width:0;height:0;display:flex;justify-content:flex-start"><span style="white-space:pre;line-height:1;font-family:'Liberation Sans',sans-serif;font-size:17.88px;font-weight:400;color:#e6e6e6;transform:scaleX(1.0237);transform-origin:0 0;">Add-ins</span></div><svg style="position:absolute;left:1987.00px;top:139.00px;" width="46" height="46" viewBox="0 0 46 46"><rect x="2" y="2" width="42" height="41.5" stroke="#bdbdbd" stroke-width="1.6" fill="none"/><rect x="2" y="2" width="42" height="5" fill="#8a8a8a"/><path d="M2 17 H44 M2 30 H44 M15.5 7 V43.5 M30 7 V43.5" stroke="#8a8a8a" stroke-width="1.3"/><circle cx="21" cy="17.5" r="12" stroke="#e6e6e6" stroke-width="1.7" fill="#262626"/><rect x="14" y="17" width="3.2" height="7" fill="#9a9a9a"/><rect x="18.5" y="11" width="3.2" height="13" fill="#d8d8d8"/><rect x="23" y="14" width="3.2" height="10" fill="#4aa3df"/><path d="M29.5 26 L43 41" stroke="#e6e6e6" stroke-width="2"/></svg><div style="position:absolute;left:1980.50px;top:192.56px;width:0;height:0;display:flex;justify-content:flex-start"><span style="white-space:pre;line-height:1;font-family:'Liberation Sans',sans-serif;font-size:17.88px;font-weight:400;color:#e6e6e6;transform:scaleX(0.9489);transform-origin:0 0;">Analyze</span></div><div style="position:absolute;left:1992.60px;top:216.66px;width:0;height:0;display:flex;justify-content:flex-start"><span style="white-space:pre;line-height:1;font-family:'Liberation Sans',sans-serif;font-size:17.88px;font-weight:400;color:#e6e6e6;transform:scaleX(0.9461);transform-origin:0 0;">Data</span></div><div style="position:absolute;left:2156.3px;top:142.5px;width:112px;height:112px;border-radius:50%;background:#ffffff"></div><div style="position:absolute;left:2181.80px;top:172.80px;width:61.00px;height:52.90px;background:#5b5fe3;"></div><div style="position:absolute;left:2189.50px;top:182.00px;width:19.50px;height:14.50px;background:#ffffff;"></div><div style="position:absolute;left:2215.50px;top:182.00px;width:19.50px;height:14.50px;background:#ffffff;"></div><div style="position:absolute;left:2189.50px;top:201.50px;width:19.50px;height:14.50px;background:#ffffff;"></div><div style="position:absolute;left:2215.50px;top:201.50px;width:19.50px;height:14.50px;background:#ffffff;"></div><div style="position:absolute;left:2295.50px;top:156.16px;width:0;height:0;display:flex;justify-content:flex-start"><span style="white-space:pre;line-height:1;font-family:'Liberation Sans',sans-serif;font-size:49.42px;font-weight:700;color:#ffffff;transform:scaleX(0.9441);transform-origin:0 0;-webkit-text-stroke:2.2px #fff">FINM</span></div><div style="position:absolute;left:2452.20px;top:156.16px;width:0;height:0;display:flex;justify-content:flex-start"><span style="white-space:pre;line-height:1;font-family:'Liberation Sans',sans-serif;font-size:49.42px;font-weight:700;color:#ffffff;transform:scaleX(0.8508);transform-origin:0 0;-webkit-text-stroke:2.2px #fff">DELSLAB</span></div><svg style="position:absolute;left:2410.00px;top:152.00px;" width="44" height="50" viewBox="0 0 44 50"><path d="M12.5 12.5 A14 14 0 1 0 30.5 12.5" stroke="#fff" stroke-width="8.6" fill="none"/><path d="M21.5 7 V28" stroke="#fff" stroke-width="8.6" stroke-linecap="round"/></svg><div style="position:absolute;left:2296.50px;top:206.67px;width:0;height:0;display:flex;justify-content:flex-start"><span style="white-space:pre;line-height:1;font-family:'Liberation Sans',sans-serif;font-size:35.47px;font-weight:400;color:#ffffff;letter-spacing:24.3px">Templates</span></div><div style="position:absolute;left:11.00px;top:277.70px;width:2849.30px;height:27.30px;background:#0a0a0a;"></div><div style="position:absolute;left:53.50px;top:277.70px;width:35.00px;height:27.30px;background:#5a5a5a;"></div><svg style="position:absolute;left:28.00px;top:280.00px;" width="24" height="24" viewBox="0 0 24 24"><path d="M2 22 L22 2 L22 22 Z" fill="#6b6b6b"/></svg><div style="position:absolute;left:71.00px;top:281.63px;width:0;height:0;display:flex;justify-content:center"><span style="white-space:pre;line-height:1;font-family:'Liberation Sans',sans-serif;font-size:21.22px;font-weight:400;color:#e8e8e8;transform:scaleX(0.9400);transform-origin:50% 0;">A</span></div><div style="position:absolute;left:88.00px;top:277.70px;width:1.10px;height:27.30px;background:#3c3c3c;"></div><div style="position:absolute;left:113.25px;top:281.63px;width:0;height:0;display:flex;justify-content:center"><span style="white-space:pre;line-height:1;font-family:'Liberation Sans',sans-serif;font-size:21.22px;font-weight:400;color:#e8e8e8;transform:scaleX(0.9400);transform-origin:50% 0;">B</span></div><div style="position:absolute;left:137.50px;top:277.70px;width:1.10px;height:27.30px;background:#3c3c3c;"></div><div style="position:absolute;left:272.50px;top:281.63px;width:0;height:0;display:flex;justify-content:center"><span style="white-space:pre;line-height:1;font-family:'Liberation Sans',sans-serif;font-size:21.22px;font-weight:400;color:#e8e8e8;transform:scaleX(0.9400);transform-origin:50% 0;">C</span></div><div style="position:absolute;left:406.50px;top:277.70px;width:1.10px;height:27.30px;background:#3c3c3c;"></div><div style="position:absolute;left:542.00px;top:281.63px;width:0;height:0;display:flex;justify-content:center"><span style="white-space:pre;line-height:1;font-family:'Liberation Sans',sans-serif;font-size:21.22px;font-weight:400;color:#e8e8e8;transform:scaleX(0.9400);transform-origin:50% 0;">D</span></div><div style="position:absolute;left:676.50px;top:277.70px;width:1.10px;height:27.30px;background:#3c3c3c;"></div><div style="position:absolute;left:811.50px;top:281.63px;width:0;height:0;display:flex;justify-content:center"><span style="white-space:pre;line-height:1;font-family:'Liberation Sans',sans-serif;font-size:21.22px;font-weight:400;color:#e8e8e8;transform:scaleX(0.9400);transform-origin:50% 0;">E</span></div><div style="position:absolute;left:945.50px;top:277.70px;width:1.10px;height:27.30px;background:#3c3c3c;"></div><div style="position:absolute;left:1047.75px;top:281.63px;width:0;height:0;display:flex;justify-content:center"><span style="white-space:pre;line-height:1;font-family:'Liberation Sans',sans-serif;font-size:21.22px;font-weight:400;color:#e8e8e8;transform:scaleX(0.9400);transform-origin:50% 0;">F</span></div><div style="position:absolute;left:1149.00px;top:277.70px;width:1.10px;height:27.30px;background:#3c3c3c;"></div><div style="position:absolute;left:1251.75px;top:281.63px;width:0;height:0;display:flex;justify-content:center"><span style="white-space:pre;line-height:1;font-family:'Liberation Sans',sans-serif;font-size:21.22px;font-weight:400;color:#e8e8e8;transform:scaleX(0.9400);transform-origin:50% 0;">G</span></div><div style="position:absolute;left:1353.50px;top:277.70px;width:1.10px;height:27.30px;background:#3c3c3c;"></div><div style="position:absolute;left:1457.00px;top:281.63px;width:0;height:0;display:flex;justify-content:center"><span style="white-space:pre;line-height:1;font-family:'Liberation Sans',sans-serif;font-size:21.22px;font-weight:400;color:#e8e8e8;transform:scaleX(0.9400);transform-origin:50% 0;">H</span></div><div style="position:absolute;left:1559.50px;top:277.70px;width:1.10px;height:27.30px;background:#3c3c3c;"></div><div style="position:absolute;left:1663.50px;top:281.63px;width:0;height:0;display:flex;justify-content:center"><span style="white-space:pre;line-height:1;font-family:'Liberation Sans',sans-serif;font-size:21.22px;font-weight:400;color:#e8e8e8;transform:scaleX(0.9400);transform-origin:50% 0;">I</span></div><div style="position:absolute;left:1766.50px;top:277.70px;width:1.10px;height:27.30px;background:#3c3c3c;"></div><div style="position:absolute;left:1851.50px;top:281.63px;width:0;height:0;display:flex;justify-content:center"><span style="white-space:pre;line-height:1;font-family:'Liberation Sans',sans-serif;font-size:21.22px;font-weight:400;color:#e8e8e8;transform:scaleX(0.9400);transform-origin:50% 0;">J</span></div><div style="position:absolute;left:1935.50px;top:277.70px;width:1.10px;height:27.30px;background:#3c3c3c;"></div><div style="position:absolute;left:2020.50px;top:281.63px;width:0;height:0;display:flex;justify-content:center"><span style="white-space:pre;line-height:1;font-family:'Liberation Sans',sans-serif;font-size:21.22px;font-weight:400;color:#e8e8e8;transform:scaleX(0.9400);transform-origin:50% 0;">K</span></div><div style="position:absolute;left:2104.50px;top:277.70px;width:1.10px;height:27.30px;background:#3c3c3c;"></div><div style="position:absolute;left:2189.50px;top:281.63px;width:0;height:0;display:flex;justify-content:center"><span style="white-space:pre;line-height:1;font-family:'Liberation Sans',sans-serif;font-size:21.22px;font-weight:400;color:#e8e8e8;transform:scaleX(0.9400);transform-origin:50% 0;">L</span></div><div style="position:absolute;left:2273.50px;top:277.70px;width:1.10px;height:27.30px;background:#3c3c3c;"></div><div style="position:absolute;left:2358.50px;top:281.63px;width:0;height:0;display:flex;justify-content:center"><span style="white-space:pre;line-height:1;font-family:'Liberation Sans',sans-serif;font-size:21.22px;font-weight:400;color:#e8e8e8;transform:scaleX(0.9400);transform-origin:50% 0;">M</span></div><div style="position:absolute;left:2442.50px;top:277.70px;width:1.10px;height:27.30px;background:#3c3c3c;"></div><div style="position:absolute;left:2527.50px;top:281.63px;width:0;height:0;display:flex;justify-content:center"><span style="white-space:pre;line-height:1;font-family:'Liberation Sans',sans-serif;font-size:21.22px;font-weight:400;color:#e8e8e8;transform:scaleX(0.9400);transform-origin:50% 0;">N</span></div><div style="position:absolute;left:2611.50px;top:277.70px;width:1.10px;height:27.30px;background:#3c3c3c;"></div><div style="position:absolute;left:2696.50px;top:281.63px;width:0;height:0;display:flex;justify-content:center"><span style="white-space:pre;line-height:1;font-family:'Liberation Sans',sans-serif;font-size:21.22px;font-weight:400;color:#e8e8e8;transform:scaleX(0.9400);transform-origin:50% 0;">O</span></div><div style="position:absolute;left:2780.50px;top:277.70px;width:1.10px;height:27.30px;background:#3c3c3c;"></div><div style="position:absolute;left:11.00px;top:305.00px;width:42.50px;height:1365.20px;background:#0a0a0a;"></div><div style="position:absolute;left:11.00px;top:305.00px;width:42.50px;height:49.80px;background:#676767;"></div><div style="position:absolute;left:11.00px;top:354.20px;width:42.50px;height:1.50px;background:#c8c8c8;"></div><div style="position:absolute;left:11.00px;top:304.60px;width:42.50px;height:1.00px;background:#8a8a8a;"></div><div style="position:absolute;left:32.30px;top:331.28px;width:0;height:0;display:flex;justify-content:center"><span style="white-space:pre;line-height:1;font-family:'Liberation Sans',sans-serif;font-size:20.93px;font-weight:400;color:#e8e8e8;transform:scaleX(0.9400);transform-origin:50% 0;">1</span></div><div style="position:absolute;left:11.00px;top:395.50px;width:42.50px;height:1.10px;background:#3a3a3a;"></div><div style="position:absolute;left:32.30px;top:372.48px;width:0;height:0;display:flex;justify-content:center"><span style="white-space:pre;line-height:1;font-family:'Liberation Sans',sans-serif;font-size:20.93px;font-weight:400;color:#e8e8e8;transform:scaleX(0.9400);transform-origin:50% 0;">2</span></div><div style="position:absolute;left:11.00px;top:424.00px;width:42.50px;height:1.10px;background:#3a3a3a;"></div><div style="position:absolute;left:32.30px;top:400.98px;width:0;height:0;display:flex;justify-content:center"><span style="white-space:pre;line-height:1;font-family:'Liberation Sans',sans-serif;font-size:20.93px;font-weight:400;color:#e8e8e8;transform:scaleX(0.9400);transform-origin:50% 0;">3</span></div><div style="position:absolute;left:11.00px;top:456.70px;width:42.50px;height:1.10px;background:#3a3a3a;"></div><div style="position:absolute;left:32.30px;top:433.68px;width:0;height:0;display:flex;justify-content:center"><span style="white-space:pre;line-height:1;font-family:'Liberation Sans',sans-serif;font-size:20.93px;font-weight:400;color:#e8e8e8;transform:scaleX(0.9400);transform-origin:50% 0;">4</span></div><div style="position:absolute;left:11.00px;top:485.50px;width:42.50px;height:1.10px;background:#3a3a3a;"></div><div style="position:absolute;left:32.30px;top:462.48px;width:0;height:0;display:flex;justify-content:center"><span style="white-space:pre;line-height:1;font-family:'Liberation Sans',sans-serif;font-size:20.93px;font-weight:400;color:#e8e8e8;transform:scaleX(0.9400);transform-origin:50% 0;">6</span></div><div style="position:absolute;left:11.00px;top:513.50px;width:42.50px;height:1.10px;background:#3a3a3a;"></div><div style="position:absolute;left:32.30px;top:490.48px;width:0;height:0;display:flex;justify-content:center"><span style="white-space:pre;line-height:1;font-family:'Liberation Sans',sans-serif;font-size:20.93px;font-weight:400;color:#e8e8e8;transform:scaleX(0.9400);transform-origin:50% 0;">7</span></div><div style="position:absolute;left:11.00px;top:542.00px;width:42.50px;height:1.10px;background:#3a3a3a;"></div><div style="position:absolute;left:32.30px;top:518.98px;width:0;height:0;display:flex;justify-content:center"><span style="white-space:pre;line-height:1;font-family:'Liberation Sans',sans-serif;font-size:20.93px;font-weight:400;color:#e8e8e8;transform:scaleX(0.9400);transform-origin:50% 0;">13</span></div><div style="position:absolute;left:11.00px;top:591.00px;width:42.50px;height:1.10px;background:#3a3a3a;"></div><div style="position:absolute;left:32.30px;top:567.98px;width:0;height:0;display:flex;justify-content:center"><span style="white-space:pre;line-height:1;font-family:'Liberation Sans',sans-serif;font-size:20.93px;font-weight:400;color:#e8e8e8;transform:scaleX(0.9400);transform-origin:50% 0;">14</span></div><div style="position:absolute;left:11.00px;top:616.70px;width:42.50px;height:1.10px;background:#3a3a3a;"></div><div style="position:absolute;left:32.30px;top:593.68px;width:0;height:0;display:flex;justify-content:center"><span style="white-space:pre;line-height:1;font-family:'Liberation Sans',sans-serif;font-size:20.93px;font-weight:400;color:#e8e8e8;transform:scaleX(0.9400);transform-origin:50% 0;">15</span></div><div style="position:absolute;left:11.00px;top:650.50px;width:42.50px;height:1.10px;background:#3a3a3a;"></div><div style="position:absolute;left:32.30px;top:627.48px;width:0;height:0;display:flex;justify-content:center"><span style="white-space:pre;line-height:1;font-family:'Liberation Sans',sans-serif;font-size:20.93px;font-weight:400;color:#e8e8e8;transform:scaleX(0.9400);transform-origin:50% 0;">16</span></div><div style="position:absolute;left:11.00px;top:678.57px;width:42.50px;height:1.10px;background:#3a3a3a;"></div><div style="position:absolute;left:32.30px;top:655.54px;width:0;height:0;display:flex;justify-content:center"><span style="white-space:pre;line-height:1;font-family:'Liberation Sans',sans-serif;font-size:20.93px;font-weight:400;color:#e8e8e8;transform:scaleX(0.9400);transform-origin:50% 0;">17</span></div><div style="position:absolute;left:11.00px;top:706.63px;width:42.50px;height:1.10px;background:#3a3a3a;"></div><div style="position:absolute;left:32.30px;top:683.61px;width:0;height:0;display:flex;justify-content:center"><span style="white-space:pre;line-height:1;font-family:'Liberation Sans',sans-serif;font-size:20.93px;font-weight:400;color:#e8e8e8;transform:scaleX(0.9400);transform-origin:50% 0;">18</span></div><div style="position:absolute;left:11.00px;top:734.70px;width:42.50px;height:1.10px;background:#3a3a3a;"></div><div style="position:absolute;left:32.30px;top:711.67px;width:0;height:0;display:flex;justify-content:center"><span style="white-space:pre;line-height:1;font-family:'Liberation Sans',sans-serif;font-size:20.93px;font-weight:400;color:#e8e8e8;transform:scaleX(0.9400);transform-origin:50% 0;">19</span></div><div style="position:absolute;left:11.00px;top:762.76px;width:42.50px;height:1.10px;background:#3a3a3a;"></div><div style="position:absolute;left:32.30px;top:739.74px;width:0;height:0;display:flex;justify-content:center"><span style="white-space:pre;line-height:1;font-family:'Liberation Sans',sans-serif;font-size:20.93px;font-weight:400;color:#e8e8e8;transform:scaleX(0.9400);transform-origin:50% 0;">20</span></div><div style="position:absolute;left:11.00px;top:790.83px;width:42.50px;height:1.10px;background:#3a3a3a;"></div><div style="position:absolute;left:32.30px;top:767.80px;width:0;height:0;display:flex;justify-content:center"><span style="white-space:pre;line-height:1;font-family:'Liberation Sans',sans-serif;font-size:20.93px;font-weight:400;color:#e8e8e8;transform:scaleX(0.9400);transform-origin:50% 0;">21</span></div><div style="position:absolute;left:11.00px;top:818.89px;width:42.50px;height:1.10px;background:#3a3a3a;"></div><div style="position:absolute;left:32.30px;top:795.87px;width:0;height:0;display:flex;justify-content:center"><span style="white-space:pre;line-height:1;font-family:'Liberation Sans',sans-serif;font-size:20.93px;font-weight:400;color:#e8e8e8;transform:scaleX(0.9400);transform-origin:50% 0;">22</span></div><div style="position:absolute;left:11.00px;top:846.96px;width:42.50px;height:1.10px;background:#3a3a3a;"></div><div style="position:absolute;left:32.30px;top:823.93px;width:0;height:0;display:flex;justify-content:center"><span style="white-space:pre;line-height:1;font-family:'Liberation Sans',sans-serif;font-size:20.93px;font-weight:400;color:#e8e8e8;transform:scaleX(0.9400);transform-origin:50% 0;">23</span></div><div style="position:absolute;left:11.00px;top:875.02px;width:42.50px;height:1.10px;background:#3a3a3a;"></div><div style="position:absolute;left:32.30px;top:852.00px;width:0;height:0;display:flex;justify-content:center"><span style="white-space:pre;line-height:1;font-family:'Liberation Sans',sans-serif;font-size:20.93px;font-weight:400;color:#e8e8e8;transform:scaleX(0.9400);transform-origin:50% 0;">24</span></div><div style="position:absolute;left:11.00px;top:903.09px;width:42.50px;height:1.10px;background:#3a3a3a;"></div><div style="position:absolute;left:32.30px;top:880.06px;width:0;height:0;display:flex;justify-content:center"><span style="white-space:pre;line-height:1;font-family:'Liberation Sans',sans-serif;font-size:20.93px;font-weight:400;color:#e8e8e8;transform:scaleX(0.9400);transform-origin:50% 0;">25</span></div><div style="position:absolute;left:11.00px;top:931.15px;width:42.50px;height:1.10px;background:#3a3a3a;"></div><div style="position:absolute;left:32.30px;top:908.13px;width:0;height:0;display:flex;justify-content:center"><span style="white-space:pre;line-height:1;font-family:'Liberation Sans',sans-serif;font-size:20.93px;font-weight:400;color:#e8e8e8;transform:scaleX(0.9400);transform-origin:50% 0;">26</span></div><div style="position:absolute;left:11.00px;top:959.22px;width:42.50px;height:1.10px;background:#3a3a3a;"></div><div style="position:absolute;left:32.30px;top:936.19px;width:0;height:0;display:flex;justify-content:center"><span style="white-space:pre;line-height:1;font-family:'Liberation Sans',sans-serif;font-size:20.93px;font-weight:400;color:#e8e8e8;transform:scaleX(0.9400);transform-origin:50% 0;">27</span></div><div style="position:absolute;left:11.00px;top:987.28px;width:42.50px;height:1.10px;background:#3a3a3a;"></div><div style="position:absolute;left:32.30px;top:964.26px;width:0;height:0;display:flex;justify-content:center"><span style="white-space:pre;line-height:1;font-family:'Liberation Sans',sans-serif;font-size:20.93px;font-weight:400;color:#e8e8e8;transform:scaleX(0.9400);transform-origin:50% 0;">28</span></div><div style="position:absolute;left:11.00px;top:1015.35px;width:42.50px;height:1.10px;background:#3a3a3a;"></div><div style="position:absolute;left:32.30px;top:992.32px;width:0;height:0;display:flex;justify-content:center"><span style="white-space:pre;line-height:1;font-family:'Liberation Sans',sans-serif;font-size:20.93px;font-weight:400;color:#e8e8e8;transform:scaleX(0.9400);transform-origin:50% 0;">29</span></div><div style="position:absolute;left:11.00px;top:1043.41px;width:42.50px;height:1.10px;background:#3a3a3a;"></div><div style="position:absolute;left:32.30px;top:1020.39px;width:0;height:0;display:flex;justify-content:center"><span style="white-space:pre;line-height:1;font-family:'Liberation Sans',sans-serif;font-size:20.93px;font-weight:400;color:#e8e8e8;transform:scaleX(0.9400);transform-origin:50% 0;">30</span></div><div style="position:absolute;left:11.00px;top:1071.47px;width:42.50px;height:1.10px;background:#3a3a3a;"></div><div style="position:absolute;left:32.30px;top:1048.45px;width:0;height:0;display:flex;justify-content:center"><span style="white-space:pre;line-height:1;font-family:'Liberation Sans',sans-serif;font-size:20.93px;font-weight:400;color:#e8e8e8;transform:scaleX(0.9400);transform-origin:50% 0;">31</span></div><div style="position:absolute;left:11.00px;top:1099.54px;width:42.50px;height:1.10px;background:#3a3a3a;"></div><div style="position:absolute;left:32.30px;top:1076.52px;width:0;height:0;display:flex;justify-content:center"><span style="white-space:pre;line-height:1;font-family:'Liberation Sans',sans-serif;font-size:20.93px;font-weight:400;color:#e8e8e8;transform:scaleX(0.9400);transform-origin:50% 0;">32</span></div><div style="position:absolute;left:11.00px;top:1127.61px;width:42.50px;height:1.10px;background:#3a3a3a;"></div><div style="position:absolute;left:32.30px;top:1104.58px;width:0;height:0;display:flex;justify-content:center"><span style="white-space:pre;line-height:1;font-family:'Liberation Sans',sans-serif;font-size:20.93px;font-weight:400;color:#e8e8e8;transform:scaleX(0.9400);transform-origin:50% 0;">33</span></div><div style="position:absolute;left:11.00px;top:1155.67px;width:42.50px;height:1.10px;background:#3a3a3a;"></div><div style="position:absolute;left:32.30px;top:1132.65px;width:0;height:0;display:flex;justify-content:center"><span style="white-space:pre;line-height:1;font-family:'Liberation Sans',sans-serif;font-size:20.93px;font-weight:400;color:#e8e8e8;transform:scaleX(0.9400);transform-origin:50% 0;">34</span></div><div style="position:absolute;left:11.00px;top:1183.74px;width:42.50px;height:1.10px;background:#3a3a3a;"></div><div style="position:absolute;left:32.30px;top:1160.71px;width:0;height:0;display:flex;justify-content:center"><span style="white-space:pre;line-height:1;font-family:'Liberation Sans',sans-serif;font-size:20.93px;font-weight:400;color:#e8e8e8;transform:scaleX(0.9400);transform-origin:50% 0;">35</span></div><div style="position:absolute;left:11.00px;top:1211.80px;width:42.50px;height:1.10px;background:#3a3a3a;"></div><div style="position:absolute;left:32.30px;top:1188.78px;width:0;height:0;display:flex;justify-content:center"><span style="white-space:pre;line-height:1;font-family:'Liberation Sans',sans-serif;font-size:20.93px;font-weight:400;color:#e8e8e8;transform:scaleX(0.9400);transform-origin:50% 0;">36</span></div><div style="position:absolute;left:11.00px;top:1247.10px;width:42.50px;height:1.10px;background:#3a3a3a;"></div><div style="position:absolute;left:32.30px;top:1224.08px;width:0;height:0;display:flex;justify-content:center"><span style="white-space:pre;line-height:1;font-family:'Liberation Sans',sans-serif;font-size:20.93px;font-weight:400;color:#e8e8e8;transform:scaleX(0.9400);transform-origin:50% 0;">37</span></div><div style="position:absolute;left:11.00px;top:1275.10px;width:42.50px;height:1.10px;background:#3a3a3a;"></div><div style="position:absolute;left:32.30px;top:1252.08px;width:0;height:0;display:flex;justify-content:center"><span style="white-space:pre;line-height:1;font-family:'Liberation Sans',sans-serif;font-size:20.93px;font-weight:400;color:#e8e8e8;transform:scaleX(0.9400);transform-origin:50% 0;">38</span></div><div style="position:absolute;left:11.00px;top:1303.10px;width:42.50px;height:1.10px;background:#3a3a3a;"></div><div style="position:absolute;left:32.30px;top:1280.08px;width:0;height:0;display:flex;justify-content:center"><span style="white-space:pre;line-height:1;font-family:'Liberation Sans',sans-serif;font-size:20.93px;font-weight:400;color:#e8e8e8;transform:scaleX(0.9400);transform-origin:50% 0;">39</span></div><div style="position:absolute;left:11.00px;top:1344.60px;width:42.50px;height:1.10px;background:#3a3a3a;"></div><div style="position:absolute;left:32.30px;top:1321.58px;width:0;height:0;display:flex;justify-content:center"><span style="white-space:pre;line-height:1;font-family:'Liberation Sans',sans-serif;font-size:20.93px;font-weight:400;color:#e8e8e8;transform:scaleX(0.9400);transform-origin:50% 0;">40</span></div><div style="position:absolute;left:11.00px;top:1372.80px;width:42.50px;height:1.10px;background:#3a3a3a;"></div><div style="position:absolute;left:32.30px;top:1349.78px;width:0;height:0;display:flex;justify-content:center"><span style="white-space:pre;line-height:1;font-family:'Liberation Sans',sans-serif;font-size:20.93px;font-weight:400;color:#e8e8e8;transform:scaleX(0.9400);transform-origin:50% 0;">41</span></div><div style="position:absolute;left:11.00px;top:1400.70px;width:42.50px;height:1.10px;background:#3a3a3a;"></div><div style="position:absolute;left:32.30px;top:1377.68px;width:0;height:0;display:flex;justify-content:center"><span style="white-space:pre;line-height:1;font-family:'Liberation Sans',sans-serif;font-size:20.93px;font-weight:400;color:#e8e8e8;transform:scaleX(0.9400);transform-origin:50% 0;">42</span></div><div style="position:absolute;left:11.00px;top:1428.90px;width:42.50px;height:1.10px;background:#3a3a3a;"></div><div style="position:absolute;left:32.30px;top:1405.88px;width:0;height:0;display:flex;justify-content:center"><span style="white-space:pre;line-height:1;font-family:'Liberation Sans',sans-serif;font-size:20.93px;font-weight:400;color:#e8e8e8;transform:scaleX(0.9400);transform-origin:50% 0;">43</span></div><div style="position:absolute;left:11.00px;top:1457.10px;width:42.50px;height:1.10px;background:#3a3a3a;"></div><div style="position:absolute;left:32.30px;top:1434.08px;width:0;height:0;display:flex;justify-content:center"><span style="white-space:pre;line-height:1;font-family:'Liberation Sans',sans-serif;font-size:20.93px;font-weight:400;color:#e8e8e8;transform:scaleX(0.9400);transform-origin:50% 0;">44</span></div><div style="position:absolute;left:11.00px;top:1485.10px;width:42.50px;height:1.10px;background:#3a3a3a;"></div><div style="position:absolute;left:32.30px;top:1462.08px;width:0;height:0;display:flex;justify-content:center"><span style="white-space:pre;line-height:1;font-family:'Liberation Sans',sans-serif;font-size:20.93px;font-weight:400;color:#e8e8e8;transform:scaleX(0.9400);transform-origin:50% 0;">45</span></div><div style="position:absolute;left:11.00px;top:1527.10px;width:42.50px;height:1.10px;background:#3a3a3a;"></div><div style="position:absolute;left:32.30px;top:1504.08px;width:0;height:0;display:flex;justify-content:center"><span style="white-space:pre;line-height:1;font-family:'Liberation Sans',sans-serif;font-size:20.93px;font-weight:400;color:#e8e8e8;transform:scaleX(0.9400);transform-origin:50% 0;">46</span></div><div style="position:absolute;left:11.00px;top:1554.90px;width:42.50px;height:1.10px;background:#3a3a3a;"></div><div style="position:absolute;left:32.30px;top:1531.88px;width:0;height:0;display:flex;justify-content:center"><span style="white-space:pre;line-height:1;font-family:'Liberation Sans',sans-serif;font-size:20.93px;font-weight:400;color:#e8e8e8;transform:scaleX(0.9400);transform-origin:50% 0;">47</span></div><div style="position:absolute;left:11.00px;top:1583.00px;width:42.50px;height:1.10px;background:#3a3a3a;"></div><div style="position:absolute;left:32.30px;top:1559.98px;width:0;height:0;display:flex;justify-content:center"><span style="white-space:pre;line-height:1;font-family:'Liberation Sans',sans-serif;font-size:20.93px;font-weight:400;color:#e8e8e8;transform:scaleX(0.9400);transform-origin:50% 0;">48</span></div><div style="position:absolute;left:11.00px;top:1611.10px;width:42.50px;height:1.10px;background:#3a3a3a;"></div><div style="position:absolute;left:32.30px;top:1588.08px;width:0;height:0;display:flex;justify-content:center"><span style="white-space:pre;line-height:1;font-family:'Liberation Sans',sans-serif;font-size:20.93px;font-weight:400;color:#e8e8e8;transform:scaleX(0.9400);transform-origin:50% 0;">49</span></div><div style="position:absolute;left:11.00px;top:1652.30px;width:42.50px;height:1.10px;background:#3a3a3a;"></div><div style="position:absolute;left:32.30px;top:1629.28px;width:0;height:0;display:flex;justify-content:center"><span style="white-space:pre;line-height:1;font-family:'Liberation Sans',sans-serif;font-size:20.93px;font-weight:400;color:#e8e8e8;transform:scaleX(0.9400);transform-origin:50% 0;">50</span></div><div style="position:absolute;left:11.00px;top:1669.00px;width:42.50px;height:1.30px;background:#3a3a3a;"></div><div style="position:absolute;left:11.00px;top:459.20px;width:42.50px;height:1.00px;background:#3a3a3a;"></div><div style="position:absolute;left:11.00px;top:516.00px;width:42.50px;height:1.00px;background:#3a3a3a;"></div><div style="position:absolute;left:52.70px;top:304.40px;width:37.30px;height:1.40px;background:#217346;"></div><div style="position:absolute;left:52.70px;top:305.00px;width:1.30px;height:50.30px;background:#217346;"></div><div style="position:absolute;left:53.50px;top:305.00px;width:2806.80px;height:1365.20px;background:#ffffff;"></div><div style="position:absolute;left:96.20px;top:310.50px;width:0;height:0;display:flex;justify-content:flex-start"><span style="white-space:pre;line-height:1;font-family:'Liberation Sans',sans-serif;font-size:40.99px;font-weight:700;color:#222222;transform:scaleX(0.9799);transform-origin:0 0;-webkit-text-stroke:0.60px #222222;">Startup Costs (CAPEX)</span></div><div style="position:absolute;left:95.20px;top:358.78px;width:0;height:0;display:flex;justify-content:flex-start"><span style="white-space:pre;line-height:1;font-family:'Liberation Sans',sans-serif;font-size:36.05px;font-weight:700;color:#000000;transform:scaleX(0.9635);transform-origin:0 0;-webkit-text-stroke:0.57px #000000;">ABC Company Inc.</span></div><div style="position:absolute;left:93.80px;top:399.09px;width:0;height:0;display:flex;justify-content:flex-start"><span style="white-space:pre;line-height:1;font-family:'Liberation Sans',sans-serif;font-size:21.51px;font-weight:700;color:#2f7ae5;transform:scaleX(1.0625);transform-origin:0 0;-webkit-text-stroke:0.44px #2f7ae5;">Go to Table of Contents</span></div><div style="position:absolute;left:93.80px;top:420.20px;width:257.40px;height:1.80px;background:#2f7ae5;"></div><div style="position:absolute;left:94.20px;top:461.16px;width:0;height:0;display:flex;justify-content:flex-start"><span style="white-space:pre;line-height:1;font-family:'Liberation Sans',sans-serif;font-size:22.97px;font-weight:700;color:#000;transform:scaleX(0.9929);transform-origin:0 0;-webkit-text-stroke:0.45px #000;">Fiscal Year</span></div><div style="position:absolute;left:94.20px;top:489.16px;width:0;height:0;display:flex;justify-content:flex-start"><span style="white-space:pre;line-height:1;font-family:'Liberation Sans',sans-serif;font-size:22.97px;font-weight:700;color:#000;transform:scaleX(1.0025);transform-origin:0 0;-webkit-text-stroke:0.45px #000;">Month</span></div><div style="position:absolute;left:1762.50px;top:461.16px;width:0;height:0;display:flex;justify-content:flex-end"><span style="white-space:pre;line-height:1;font-family:'Liberation Sans',sans-serif;font-size:22.97px;font-weight:700;color:#000;transform:scaleX(1.0900);transform-origin:100% 0;-webkit-text-stroke:0.45px #000;">2025</span></div><div style="position:absolute;left:1762.50px;top:489.16px;width:0;height:0;display:flex;justify-content:flex-end"><span style="white-space:pre;line-height:1;font-family:'Liberation Sans',sans-serif;font-size:22.97px;font-weight:700;color:#000;transform:scaleX(1.0350);transform-origin:100% 0;-webkit-text-stroke:0.45px #000;">Dec-25</span></div><div style="position:absolute;left:1931.50px;top:461.16px;width:0;height:0;display:flex;justify-content:flex-end"><span style="white-space:pre;line-height:1;font-family:'Liberation Sans',sans-serif;font-size:22.97px;font-weight:700;color:#000;transform:scaleX(1.0900);transform-origin:100% 0;-webkit-text-stroke:0.45px #000;">2026</span></div><div style="position:absolute;left:1931.50px;top:489.16px;width:0;height:0;display:flex;justify-content:flex-end"><span style="white-space:pre;line-height:1;font-family:'Liberation Sans',sans-serif;font-size:22.97px;font-weight:700;color:#000;transform:scaleX(1.0350);transform-origin:100% 0;-webkit-text-stroke:0.45px #000;">Jan-26</span></div><div style="position:absolute;left:2100.50px;top:461.16px;width:0;height:0;display:flex;justify-content:flex-end"><span style="white-space:pre;line-height:1;font-family:'Liberation Sans',sans-serif;font-size:22.97px;font-weight:700;color:#000;transform:scaleX(1.0900);transform-origin:100% 0;-webkit-text-stroke:0.45px #000;">2026</span></div><div style="position:absolute;left:2100.50px;top:489.16px;width:0;height:0;display:flex;justify-content:flex-end"><span style="white-space:pre;line-height:1;font-family:'Liberation Sans',sans-serif;font-size:22.97px;font-weight:700;color:#000;transform:scaleX(1.0350);transform-origin:100% 0;-webkit-text-stroke:0.45px #000;">Feb-26</span></div><div style="position:absolute;left:2269.50px;top:461.16px;width:0;height:0;display:flex;justify-content:flex-end"><span style="white-space:pre;line-height:1;font-family:'Liberation Sans',sans-serif;font-size:22.97px;font-weight:700;color:#000;transform:scaleX(1.0900);transform-origin:100% 0;-webkit-text-stroke:0.45px #000;">2026</span></div><div style="position:absolute;left:2269.50px;top:489.16px;width:0;height:0;display:flex;justify-content:flex-end"><span style="white-space:pre;line-height:1;font-family:'Liberation Sans',sans-serif;font-size:22.97px;font-weight:700;color:#000;transform:scaleX(1.0350);transform-origin:100% 0;-webkit-text-stroke:0.45px #000;">Mar-26</span></div><div style="position:absolute;left:2438.50px;top:461.16px;width:0;height:0;display:flex;justify-content:flex-end"><span style="white-space:pre;line-height:1;font-family:'Liberation Sans',sans-serif;font-size:22.97px;font-weight:700;color:#000;transform:scaleX(1.0900);transform-origin:100% 0;-webkit-text-stroke:0.45px #000;">2026</span></div><div style="position:absolute;left:2438.50px;top:489.16px;width:0;height:0;display:flex;justify-content:flex-end"><span style="white-space:pre;line-height:1;font-family:'Liberation Sans',sans-serif;font-size:22.97px;font-weight:700;color:#000;transform:scaleX(1.0350);transform-origin:100% 0;-webkit-text-stroke:0.45px #000;">Apr-26</span></div><div style="position:absolute;left:2607.50px;top:461.16px;width:0;height:0;display:flex;justify-content:flex-end"><span style="white-space:pre;line-height:1;font-family:'Liberation Sans',sans-serif;font-size:22.97px;font-weight:700;color:#000;transform:scaleX(1.0900);transform-origin:100% 0;-webkit-text-stroke:0.45px #000;">2026</span></div><div style="position:absolute;left:2607.50px;top:489.16px;width:0;height:0;display:flex;justify-content:flex-end"><span style="white-space:pre;line-height:1;font-family:'Liberation Sans',sans-serif;font-size:22.97px;font-weight:700;color:#000;transform:scaleX(1.0350);transform-origin:100% 0;-webkit-text-stroke:0.45px #000;">May-26</span></div><div style="position:absolute;left:2776.50px;top:461.16px;width:0;height:0;display:flex;justify-content:flex-end"><span style="white-space:pre;line-height:1;font-family:'Liberation Sans',sans-serif;font-size:22.97px;font-weight:700;color:#000;transform:scaleX(1.0900);transform-origin:100% 0;-webkit-text-stroke:0.45px #000;">2026</span></div><div style="position:absolute;left:2776.50px;top:489.16px;width:0;height:0;display:flex;justify-content:flex-end"><span style="white-space:pre;line-height:1;font-family:'Liberation Sans',sans-serif;font-size:22.97px;font-weight:700;color:#000;transform:scaleX(1.0350);transform-origin:100% 0;-webkit-text-stroke:0.45px #000;">Jun-26</span></div><div style="position:absolute;left:97.20px;top:547.24px;width:0;height:0;display:flex;justify-content:flex-start"><span style="white-space:pre;line-height:1;font-family:'Liberation Sans',sans-serif;font-size:40.70px;font-weight:700;color:#222222;transform:scaleX(0.9920);transform-origin:0 0;-webkit-text-stroke:0.60px #222222;">Startup Costs, $</span></div><div style="position:absolute;left:139.00px;top:617.20px;width:1627.80px;height:32.60px;background:#6e75e8;"></div><div style="position:absolute;left:944.20px;top:617.20px;width:2.00px;height:32.60px;background:#ffffff;"></div><div style="position:absolute;left:1148.00px;top:617.20px;width:2.00px;height:32.60px;background:#ffffff;"></div><div style="position:absolute;left:1352.20px;top:617.20px;width:2.00px;height:32.60px;background:#ffffff;"></div><div style="position:absolute;left:1559.00px;top:617.20px;width:2.00px;height:32.60px;background:#ffffff;"></div><div style="position:absolute;left:542.00px;top:623.77px;width:0;height:0;display:flex;justify-content:center"><span style="white-space:pre;line-height:1;font-family:'Liberation Sans',sans-serif;font-size:22.24px;font-weight:700;color:#fff;transform:scaleX(1.0400);transform-origin:50% 0;-webkit-text-stroke:0.45px #fff;">Categories</span></div><div style="position:absolute;left:1047.75px;top:623.77px;width:0;height:0;display:flex;justify-content:center"><span style="white-space:pre;line-height:1;font-family:'Liberation Sans',sans-serif;font-size:22.24px;font-weight:700;color:#fff;transform:scaleX(1.0400);transform-origin:50% 0;-webkit-text-stroke:0.45px #fff;">Launch date</span></div><div style="position:absolute;left:1251.75px;top:623.77px;width:0;height:0;display:flex;justify-content:center"><span style="white-space:pre;line-height:1;font-family:'Liberation Sans',sans-serif;font-size:22.24px;font-weight:700;color:#fff;transform:scaleX(1.0400);transform-origin:50% 0;-webkit-text-stroke:0.45px #fff;">End date</span></div><div style="position:absolute;left:1457.00px;top:623.77px;width:0;height:0;display:flex;justify-content:center"><span style="white-space:pre;line-height:1;font-family:'Liberation Sans',sans-serif;font-size:22.24px;font-weight:700;color:#fff;transform:scaleX(1.0400);transform-origin:50% 0;-webkit-text-stroke:0.45px #fff;">Spending, $</span></div><div style="position:absolute;left:1663.40px;top:623.77px;width:0;height:0;display:flex;justify-content:center"><span style="white-space:pre;line-height:1;font-family:'Liberation Sans',sans-serif;font-size:22.24px;font-weight:700;color:#fff;transform:scaleX(1.0400);transform-origin:50% 0;-webkit-text-stroke:0.45px #fff;">Amortizable?</span></div><div style="position:absolute;left:140.00px;top:652.70px;width:1626.80px;height:558.60px;background:#fff063;"></div><div style="position:absolute;left:140.00px;top:678.57px;width:1626.80px;height:1.10px;background:#fffbea;"></div><div style="position:absolute;left:140.00px;top:706.63px;width:1626.80px;height:1.10px;background:#fffbea;"></div><div style="position:absolute;left:140.00px;top:734.70px;width:1626.80px;height:1.10px;background:#fffbea;"></div><div style="position:absolute;left:140.00px;top:762.76px;width:1626.80px;height:1.10px;background:#fffbea;"></div><div style="position:absolute;left:140.00px;top:790.83px;width:1626.80px;height:1.10px;background:#fffbea;"></div><div style="position:absolute;left:140.00px;top:818.89px;width:1626.80px;height:1.10px;background:#fffbea;"></div><div style="position:absolute;left:140.00px;top:846.96px;width:1626.80px;height:1.10px;background:#fffbea;"></div><div style="position:absolute;left:140.00px;top:875.02px;width:1626.80px;height:1.10px;background:#fffbea;"></div><div style="position:absolute;left:140.00px;top:903.09px;width:1626.80px;height:1.10px;background:#fffbea;"></div><div style="position:absolute;left:140.00px;top:931.15px;width:1626.80px;height:1.10px;background:#fffbea;"></div><div style="position:absolute;left:140.00px;top:959.22px;width:1626.80px;height:1.10px;background:#fffbea;"></div><div style="position:absolute;left:140.00px;top:987.28px;width:1626.80px;height:1.10px;background:#fffbea;"></div><div style="position:absolute;left:140.00px;top:1015.35px;width:1626.80px;height:1.10px;background:#fffbea;"></div><div style="position:absolute;left:140.00px;top:1043.41px;width:1626.80px;height:1.10px;background:#fffbea;"></div><div style="position:absolute;left:140.00px;top:1071.47px;width:1626.80px;height:1.10px;background:#fffbea;"></div><div style="position:absolute;left:140.00px;top:1099.54px;width:1626.80px;height:1.10px;background:#fffbea;"></div><div style="position:absolute;left:140.00px;top:1127.61px;width:1626.80px;height:1.10px;background:#fffbea;"></div><div style="position:absolute;left:140.00px;top:1155.67px;width:1626.80px;height:1.10px;background:#fffbea;"></div><div style="position:absolute;left:140.00px;top:1183.74px;width:1626.80px;height:1.10px;background:#fffbea;"></div><div style="position:absolute;left:944.10px;top:651.00px;width:2.20px;height:561.30px;background:#ffffff;"></div><div style="position:absolute;left:1147.90px;top:651.00px;width:2.20px;height:561.30px;background:#ffffff;"></div><div style="position:absolute;left:1352.10px;top:651.00px;width:2.20px;height:561.30px;background:#ffffff;"></div><div style="position:absolute;left:1558.90px;top:651.00px;width:2.20px;height:561.30px;background:#ffffff;"></div><div style="position:absolute;left:142.50px;top:654.60px;width:0;height:0;display:flex;justify-content:flex-start"><span style="white-space:pre;line-height:1;font-family:'Liberation Sans',sans-serif;font-size:22.67px;font-weight:400;color:#161616;transform:scaleX(0.9528);transform-origin:0 0;">Clinic Build-out &amp; Renovation</span></div><div style="position:absolute;left:1047.75px;top:654.60px;width:0;height:0;display:flex;justify-content:center"><span style="white-space:pre;line-height:1;font-family:'Liberation Sans',sans-serif;font-size:22.67px;font-weight:400;color:#161616;transform:scaleX(0.9550);transform-origin:50% 0;">Jan-26</span></div><div style="position:absolute;left:1251.75px;top:654.60px;width:0;height:0;display:flex;justify-content:center"><span style="white-space:pre;line-height:1;font-family:'Liberation Sans',sans-serif;font-size:22.67px;font-weight:400;color:#161616;transform:scaleX(0.9550);transform-origin:50% 0;">Mar-26</span></div><div style="position:absolute;left:1548.00px;top:654.60px;width:0;height:0;display:flex;justify-content:flex-end"><span style="white-space:pre;line-height:1;font-family:'Liberation Sans',sans-serif;font-size:22.67px;font-weight:400;color:#161616;transform:scaleX(0.9550);transform-origin:100% 0;">250,000</span></div><div style="position:absolute;left:1663.40px;top:654.60px;width:0;height:0;display:flex;justify-content:center"><span style="white-space:pre;line-height:1;font-family:'Liberation Sans',sans-serif;font-size:22.67px;font-weight:400;color:#161616;transform:scaleX(0.9550);transform-origin:50% 0;">Yes</span></div><div style="position:absolute;left:1924.00px;top:654.60px;width:0;height:0;display:flex;justify-content:flex-end"><span style="white-space:pre;line-height:1;font-family:'Liberation Sans',sans-serif;font-size:22.67px;font-weight:400;color:#161616;transform:scaleX(0.9550);transform-origin:100% 0;">83,333</span></div><div style="position:absolute;left:2093.00px;top:654.60px;width:0;height:0;display:flex;justify-content:flex-end"><span style="white-space:pre;line-height:1;font-family:'Liberation Sans',sans-serif;font-size:22.67px;font-weight:400;color:#161616;transform:scaleX(0.9550);transform-origin:100% 0;">83,333</span></div><div style="position:absolute;left:2262.00px;top:654.60px;width:0;height:0;display:flex;justify-content:flex-end"><span style="white-space:pre;line-height:1;font-family:'Liberation Sans',sans-serif;font-size:22.67px;font-weight:400;color:#161616;transform:scaleX(0.9550);transform-origin:100% 0;">83,333</span></div><div style="position:absolute;left:2403.00px;top:654.60px;width:0;height:0;display:flex;justify-content:center"><span style="white-space:pre;line-height:1;font-family:'Liberation Sans',sans-serif;font-size:22.67px;font-weight:400;color:#161616;transform:scaleX(0.9550);transform-origin:50% 0;">-</span></div><div style="position:absolute;left:2572.00px;top:654.60px;width:0;height:0;display:flex;justify-content:center"><span style="white-space:pre;line-height:1;font-family:'Liberation Sans',sans-serif;font-size:22.67px;font-weight:400;color:#161616;transform:scaleX(0.9550);transform-origin:50% 0;">-</span></div><div style="position:absolute;left:2741.00px;top:654.60px;width:0;height:0;display:flex;justify-content:center"><span style="white-space:pre;line-height:1;font-family:'Liberation Sans',sans-serif;font-size:22.67px;font-weight:400;color:#161616;transform:scaleX(0.9550);transform-origin:50% 0;">-</span></div><div style="position:absolute;left:142.50px;top:682.67px;width:0;height:0;display:flex;justify-content:flex-start"><span style="white-space:pre;line-height:1;font-family:'Liberation Sans',sans-serif;font-size:22.67px;font-weight:400;color:#161616;transform:scaleX(0.9421);transform-origin:0 0;">Specialized Pain Management Equipment</span></div><div style="position:absolute;left:1047.75px;top:682.67px;width:0;height:0;display:flex;justify-content:center"><span style="white-space:pre;line-height:1;font-family:'Liberation Sans',sans-serif;font-size:22.67px;font-weight:400;color:#161616;transform:scaleX(0.9550);transform-origin:50% 0;">Feb-26</span></div><div style="position:absolute;left:1251.75px;top:682.67px;width:0;height:0;display:flex;justify-content:center"><span style="white-space:pre;line-height:1;font-family:'Liberation Sans',sans-serif;font-size:22.67px;font-weight:400;color:#161616;transform:scaleX(0.9550);transform-origin:50% 0;">Apr-26</span></div><div style="position:absolute;left:1548.00px;top:682.67px;width:0;height:0;display:flex;justify-content:flex-end"><span style="white-space:pre;line-height:1;font-family:'Liberation Sans',sans-serif;font-size:22.67px;font-weight:400;color:#161616;transform:scaleX(0.9550);transform-origin:100% 0;">180,000</span></div><div style="position:absolute;left:1663.40px;top:682.67px;width:0;height:0;display:flex;justify-content:center"><span style="white-space:pre;line-height:1;font-family:'Liberation Sans',sans-serif;font-size:22.67px;font-weight:400;color:#161616;transform:scaleX(0.9550);transform-origin:50% 0;">Yes</span></div><div style="position:absolute;left:1896.00px;top:682.67px;width:0;height:0;display:flex;justify-content:center"><span style="white-space:pre;line-height:1;font-family:'Liberation Sans',sans-serif;font-size:22.67px;font-weight:400;color:#161616;transform:scaleX(0.9550);transform-origin:50% 0;">-</span></div><div style="position:absolute;left:2093.00px;top:682.67px;width:0;height:0;display:flex;justify-content:flex-end"><span style="white-space:pre;line-height:1;font-family:'Liberation Sans',sans-serif;font-size:22.67px;font-weight:400;color:#161616;transform:scaleX(0.9550);transform-origin:100% 0;">60,000</span></div><div style="position:absolute;left:2262.00px;top:682.67px;width:0;height:0;display:flex;justify-content:flex-end"><span style="white-space:pre;line-height:1;font-family:'Liberation Sans',sans-serif;font-size:22.67px;font-weight:400;color:#161616;transform:scaleX(0.9550);transform-origin:100% 0;">60,000</span></div><div style="position:absolute;left:2431.00px;top:682.67px;width:0;height:0;display:flex;justify-content:flex-end"><span style="white-space:pre;line-height:1;font-family:'Liberation Sans',sans-serif;font-size:22.67px;font-weight:400;color:#161616;transform:scaleX(0.9550);transform-origin:100% 0;">60,000</span></div><div style="position:absolute;left:2572.00px;top:682.67px;width:0;height:0;display:flex;justify-content:center"><span style="white-space:pre;line-height:1;font-family:'Liberation Sans',sans-serif;font-size:22.67px;font-weight:400;color:#161616;transform:scaleX(0.9550);transform-origin:50% 0;">-</span></div><div style="position:absolute;left:2741.00px;top:682.67px;width:0;height:0;display:flex;justify-content:center"><span style="white-space:pre;line-height:1;font-family:'Liberation Sans',sans-serif;font-size:22.67px;font-weight:400;color:#161616;transform:scaleX(0.9550);transform-origin:50% 0;">-</span></div><div style="position:absolute;left:142.50px;top:710.73px;width:0;height:0;display:flex;justify-content:flex-start"><span style="white-space:pre;line-height:1;font-family:'Liberation Sans',sans-serif;font-size:22.67px;font-weight:400;color:#161616;transform:scaleX(0.9577);transform-origin:0 0;">Medical Furniture &amp; Fixtures</span></div><div style="position:absolute;left:1047.75px;top:710.73px;width:0;height:0;display:flex;justify-content:center"><span style="white-space:pre;line-height:1;font-family:'Liberation Sans',sans-serif;font-size:22.67px;font-weight:400;color:#161616;transform:scaleX(0.9550);transform-origin:50% 0;">Mar-26</span></div><div style="position:absolute;left:1251.75px;top:710.73px;width:0;height:0;display:flex;justify-content:center"><span style="white-space:pre;line-height:1;font-family:'Liberation Sans',sans-serif;font-size:22.67px;font-weight:400;color:#161616;transform:scaleX(0.9550);transform-origin:50% 0;">May-26</span></div><div style="position:absolute;left:1548.00px;top:710.73px;width:0;height:0;display:flex;justify-content:flex-end"><span style="white-space:pre;line-height:1;font-family:'Liberation Sans',sans-serif;font-size:22.67px;font-weight:400;color:#161616;transform:scaleX(0.9550);transform-origin:100% 0;">75,000</span></div><div style="position:absolute;left:1663.40px;top:710.73px;width:0;height:0;display:flex;justify-content:center"><span style="white-space:pre;line-height:1;font-family:'Liberation Sans',sans-serif;font-size:22.67px;font-weight:400;color:#161616;transform:scaleX(0.9550);transform-origin:50% 0;">Yes</span></div><div style="position:absolute;left:1896.00px;top:710.73px;width:0;height:0;display:flex;justify-content:center"><span style="white-space:pre;line-height:1;font-family:'Liberation Sans',sans-serif;font-size:22.67px;font-weight:400;color:#161616;transform:scaleX(0.9550);transform-origin:50% 0;">-</span></div><div style="position:absolute;left:2065.00px;top:710.73px;width:0;height:0;display:flex;justify-content:center"><span style="white-space:pre;line-height:1;font-family:'Liberation Sans',sans-serif;font-size:22.67px;font-weight:400;color:#161616;transform:scaleX(0.9550);transform-origin:50% 0;">-</span></div><div style="position:absolute;left:2262.00px;top:710.73px;width:0;height:0;display:flex;justify-content:flex-end"><span style="white-space:pre;line-height:1;font-family:'Liberation Sans',sans-serif;font-size:22.67px;font-weight:400;color:#161616;transform:scaleX(0.9550);transform-origin:100% 0;">25,000</span></div><div style="position:absolute;left:2431.00px;top:710.73px;width:0;height:0;display:flex;justify-content:flex-end"><span style="white-space:pre;line-height:1;font-family:'Liberation Sans',sans-serif;font-size:22.67px;font-weight:400;color:#161616;transform:scaleX(0.9550);transform-origin:100% 0;">25,000</span></div><div style="position:absolute;left:2600.00px;top:710.73px;width:0;height:0;display:flex;justify-content:flex-end"><span style="white-space:pre;line-height:1;font-family:'Liberation Sans',sans-serif;font-size:22.67px;font-weight:400;color:#161616;transform:scaleX(0.9550);transform-origin:100% 0;">25,000</span></div><div style="position:absolute;left:2741.00px;top:710.73px;width:0;height:0;display:flex;justify-content:center"><span style="white-space:pre;line-height:1;font-family:'Liberation Sans',sans-serif;font-size:22.67px;font-weight:400;color:#161616;transform:scaleX(0.9550);transform-origin:50% 0;">-</span></div><div style="position:absolute;left:142.50px;top:738.80px;width:0;height:0;display:flex;justify-content:flex-start"><span style="white-space:pre;line-height:1;font-family:'Liberation Sans',sans-serif;font-size:22.67px;font-weight:400;color:#161616;transform:scaleX(0.9887);transform-origin:0 0;">IT Infrastructure &amp; Network Setup</span></div><div style="position:absolute;left:1047.75px;top:738.80px;width:0;height:0;display:flex;justify-content:center"><span style="white-space:pre;line-height:1;font-family:'Liberation Sans',sans-serif;font-size:22.67px;font-weight:400;color:#161616;transform:scaleX(0.9550);transform-origin:50% 0;">Mar-26</span></div><div style="position:absolute;left:1251.75px;top:738.80px;width:0;height:0;display:flex;justify-content:center"><span style="white-space:pre;line-height:1;font-family:'Liberation Sans',sans-serif;font-size:22.67px;font-weight:400;color:#161616;transform:scaleX(0.9550);transform-origin:50% 0;">Jun-26</span></div><div style="position:absolute;left:1548.00px;top:738.80px;width:0;height:0;display:flex;justify-content:flex-end"><span style="white-space:pre;line-height:1;font-family:'Liberation Sans',sans-serif;font-size:22.67px;font-weight:400;color:#161616;transform:scaleX(0.9550);transform-origin:100% 0;">40,000</span></div><div style="position:absolute;left:1663.40px;top:738.80px;width:0;height:0;display:flex;justify-content:center"><span style="white-space:pre;line-height:1;font-family:'Liberation Sans',sans-serif;font-size:22.67px;font-weight:400;color:#161616;transform:scaleX(0.9550);transform-origin:50% 0;">Yes</span></div><div style="position:absolute;left:1896.00px;top:738.80px;width:0;height:0;display:flex;justify-content:center"><span style="white-space:pre;line-height:1;font-family:'Liberation Sans',sans-serif;font-size:22.67px;font-weight:400;color:#161616;transform:scaleX(0.9550);transform-origin:50% 0;">-</span></div><div style="position:absolute;left:2065.00px;top:738.80px;width:0;height:0;display:flex;justify-content:center"><span style="white-space:pre;line-height:1;font-family:'Liberation Sans',sans-serif;font-size:22.67px;font-weight:400;color:#161616;transform:scaleX(0.9550);transform-origin:50% 0;">-</span></div><div style="position:absolute;left:2262.00px;top:738.80px;width:0;height:0;display:flex;justify-content:flex-end"><span style="white-space:pre;line-height:1;font-family:'Liberation Sans',sans-serif;font-size:22.67px;font-weight:400;color:#161616;transform:scaleX(0.9550);transform-origin:100% 0;">10,000</span></div><div style="position:absolute;left:2431.00px;top:738.80px;width:0;height:0;display:flex;justify-content:flex-end"><span style="white-space:pre;line-height:1;font-family:'Liberation Sans',sans-serif;font-size:22.67px;font-weight:400;color:#161616;transform:scaleX(0.9550);transform-origin:100% 0;">10,000</span></div><div style="position:absolute;left:2600.00px;top:738.80px;width:0;height:0;display:flex;justify-content:flex-end"><span style="white-space:pre;line-height:1;font-family:'Liberation Sans',sans-serif;font-size:22.67px;font-weight:400;color:#161616;transform:scaleX(0.9550);transform-origin:100% 0;">10,000</span></div><div style="position:absolute;left:2769.00px;top:738.80px;width:0;height:0;display:flex;justify-content:flex-end"><span style="white-space:pre;line-height:1;font-family:'Liberation Sans',sans-serif;font-size:22.67px;font-weight:400;color:#161616;transform:scaleX(0.9550);transform-origin:100% 0;">10,000</span></div><div style="position:absolute;left:142.50px;top:766.86px;width:0;height:0;display:flex;justify-content:flex-start"><span style="white-space:pre;line-height:1;font-family:'Liberation Sans',sans-serif;font-size:22.67px;font-weight:400;color:#161616;transform:scaleX(0.9482);transform-origin:0 0;">EHR System Initial Licensing &amp; Setup</span></div><div style="position:absolute;left:1047.75px;top:766.86px;width:0;height:0;display:flex;justify-content:center"><span style="white-space:pre;line-height:1;font-family:'Liberation Sans',sans-serif;font-size:22.67px;font-weight:400;color:#161616;transform:scaleX(0.9550);transform-origin:50% 0;">Apr-26</span></div><div style="position:absolute;left:1251.75px;top:766.86px;width:0;height:0;display:flex;justify-content:center"><span style="white-space:pre;line-height:1;font-family:'Liberation Sans',sans-serif;font-size:22.67px;font-weight:400;color:#161616;transform:scaleX(0.9550);transform-origin:50% 0;">Jul-26</span></div><div style="position:absolute;left:1548.00px;top:766.86px;width:0;height:0;display:flex;justify-content:flex-end"><span style="white-space:pre;line-height:1;font-family:'Liberation Sans',sans-serif;font-size:22.67px;font-weight:400;color:#161616;transform:scaleX(0.9550);transform-origin:100% 0;">30,000</span></div><div style="position:absolute;left:1663.40px;top:766.86px;width:0;height:0;display:flex;justify-content:center"><span style="white-space:pre;line-height:1;font-family:'Liberation Sans',sans-serif;font-size:22.67px;font-weight:400;color:#161616;transform:scaleX(0.9550);transform-origin:50% 0;">Yes</span></div><div style="position:absolute;left:1896.00px;top:766.86px;width:0;height:0;display:flex;justify-content:center"><span style="white-space:pre;line-height:1;font-family:'Liberation Sans',sans-serif;font-size:22.67px;font-weight:400;color:#161616;transform:scaleX(0.9550);transform-origin:50% 0;">-</span></div><div style="position:absolute;left:2065.00px;top:766.86px;width:0;height:0;display:flex;justify-content:center"><span style="white-space:pre;line-height:1;font-family:'Liberation Sans',sans-serif;font-size:22.67px;font-weight:400;color:#161616;transform:scaleX(0.9550);transform-origin:50% 0;">-</span></div><div style="position:absolute;left:2234.00px;top:766.86px;width:0;height:0;display:flex;justify-content:center"><span style="white-space:pre;line-height:1;font-family:'Liberation Sans',sans-serif;font-size:22.67px;font-weight:400;color:#161616;transform:scaleX(0.9550);transform-origin:50% 0;">-</span></div><div style="position:absolute;left:2431.00px;top:766.86px;width:0;height:0;display:flex;justify-content:flex-end"><span style="white-space:pre;line-height:1;font-family:'Liberation Sans',sans-serif;font-size:22.67px;font-weight:400;color:#161616;transform:scaleX(0.9550);transform-origin:100% 0;">7,500</span></div><div style="position:absolute;left:2600.00px;top:766.86px;width:0;height:0;display:flex;justify-content:flex-end"><span style="white-space:pre;line-height:1;font-family:'Liberation Sans',sans-serif;font-size:22.67px;font-weight:400;color:#161616;transform:scaleX(0.9550);transform-origin:100% 0;">7,500</span></div><div style="position:absolute;left:2769.00px;top:766.86px;width:0;height:0;display:flex;justify-content:flex-end"><span style="white-space:pre;line-height:1;font-family:'Liberation Sans',sans-serif;font-size:22.67px;font-weight:400;color:#161616;transform:scaleX(0.9550);transform-origin:100% 0;">7,500</span></div><div style="position:absolute;left:142.50px;top:794.93px;width:0;height:0;display:flex;justify-content:flex-start"><span style="white-space:pre;line-height:1;font-family:'Liberation Sans',sans-serif;font-size:22.67px;font-weight:400;color:#161616;transform:scaleX(0.9555);transform-origin:0 0;">Office Equipment &amp; Computers</span></div><div style="position:absolute;left:1047.75px;top:794.93px;width:0;height:0;display:flex;justify-content:center"><span style="white-space:pre;line-height:1;font-family:'Liberation Sans',sans-serif;font-size:22.67px;font-weight:400;color:#161616;transform:scaleX(0.9550);transform-origin:50% 0;">Apr-26</span></div><div style="position:absolute;left:1251.75px;top:794.93px;width:0;height:0;display:flex;justify-content:center"><span style="white-space:pre;line-height:1;font-family:'Liberation Sans',sans-serif;font-size:22.67px;font-weight:400;color:#161616;transform:scaleX(0.9550);transform-origin:50% 0;">Aug-26</span></div><div style="position:absolute;left:1548.00px;top:794.93px;width:0;height:0;display:flex;justify-content:flex-end"><span style="white-space:pre;line-height:1;font-family:'Liberation Sans',sans-serif;font-size:22.67px;font-weight:400;color:#161616;transform:scaleX(0.9550);transform-origin:100% 0;">25,000</span></div><div style="position:absolute;left:1663.40px;top:794.93px;width:0;height:0;display:flex;justify-content:center"><span style="white-space:pre;line-height:1;font-family:'Liberation Sans',sans-serif;font-size:22.67px;font-weight:400;color:#161616;transform:scaleX(0.9550);transform-origin:50% 0;">Yes</span></div><div style="position:absolute;left:1896.00px;top:794.93px;width:0;height:0;display:flex;justify-content:center"><span style="white-space:pre;line-height:1;font-family:'Liberation Sans',sans-serif;font-size:22.67px;font-weight:400;color:#161616;transform:scaleX(0.9550);transform-origin:50% 0;">-</span></div><div style="position:absolute;left:2065.00px;top:794.93px;width:0;height:0;display:flex;justify-content:center"><span style="white-space:pre;line-height:1;font-family:'Liberation Sans',sans-serif;font-size:22.67px;font-weight:400;color:#161616;transform:scaleX(0.9550);transform-origin:50% 0;">-</span></div><div style="position:absolute;left:2234.00px;top:794.93px;width:0;height:0;display:flex;justify-content:center"><span style="white-space:pre;line-height:1;font-family:'Liberation Sans',sans-serif;font-size:22.67px;font-weight:400;color:#161616;transform:scaleX(0.9550);transform-origin:50% 0;">-</span></div><div style="position:absolute;left:2431.00px;top:794.93px;width:0;height:0;display:flex;justify-content:flex-end"><span style="white-space:pre;line-height:1;font-family:'Liberation Sans',sans-serif;font-size:22.67px;font-weight:400;color:#161616;transform:scaleX(0.9550);transform-origin:100% 0;">5,000</span></div><div style="position:absolute;left:2600.00px;top:794.93px;width:0;height:0;display:flex;justify-content:flex-end"><span style="white-space:pre;line-height:1;font-family:'Liberation Sans',sans-serif;font-size:22.67px;font-weight:400;color:#161616;transform:scaleX(0.9550);transform-origin:100% 0;">5,000</span></div><div style="position:absolute;left:2769.00px;top:794.93px;width:0;height:0;display:flex;justify-content:flex-end"><span style="white-space:pre;line-height:1;font-family:'Liberation Sans',sans-serif;font-size:22.67px;font-weight:400;color:#161616;transform:scaleX(0.9550);transform-origin:100% 0;">5,000</span></div><div style="position:absolute;left:142.50px;top:822.99px;width:0;height:0;display:flex;justify-content:flex-start"><span style="white-space:pre;line-height:1;font-family:'Liberation Sans',sans-serif;font-size:22.67px;font-weight:400;color:#161616;transform:scaleX(0.9587);transform-origin:0 0;">Security System Installation</span></div><div style="position:absolute;left:1047.75px;top:822.99px;width:0;height:0;display:flex;justify-content:center"><span style="white-space:pre;line-height:1;font-family:'Liberation Sans',sans-serif;font-size:22.67px;font-weight:400;color:#161616;transform:scaleX(0.9550);transform-origin:50% 0;">May-26</span></div><div style="position:absolute;left:1251.75px;top:822.99px;width:0;height:0;display:flex;justify-content:center"><span style="white-space:pre;line-height:1;font-family:'Liberation Sans',sans-serif;font-size:22.67px;font-weight:400;color:#161616;transform:scaleX(0.9550);transform-origin:50% 0;">Sep-26</span></div><div style="position:absolute;left:1548.00px;top:822.99px;width:0;height:0;display:flex;justify-content:flex-end"><span style="white-space:pre;line-height:1;font-family:'Liberation Sans',sans-serif;font-size:22.67px;font-weight:400;color:#161616;transform:scaleX(0.9550);transform-origin:100% 0;">15,000</span></div><div style="position:absolute;left:1663.40px;top:822.99px;width:0;height:0;display:flex;justify-content:center"><span style="white-space:pre;line-height:1;font-family:'Liberation Sans',sans-serif;font-size:22.67px;font-weight:400;color:#161616;transform:scaleX(0.9550);transform-origin:50% 0;">Yes</span></div><div style="position:absolute;left:1896.00px;top:822.99px;width:0;height:0;display:flex;justify-content:center"><span style="white-space:pre;line-height:1;font-family:'Liberation Sans',sans-serif;font-size:22.67px;font-weight:400;color:#161616;transform:scaleX(0.9550);transform-origin:50% 0;">-</span></div><div style="position:absolute;left:2065.00px;top:822.99px;width:0;height:0;display:flex;justify-content:center"><span style="white-space:pre;line-height:1;font-family:'Liberation Sans',sans-serif;font-size:22.67px;font-weight:400;color:#161616;transform:scaleX(0.9550);transform-origin:50% 0;">-</span></div><div style="position:absolute;left:2234.00px;top:822.99px;width:0;height:0;display:flex;justify-content:center"><span style="white-space:pre;line-height:1;font-family:'Liberation Sans',sans-serif;font-size:22.67px;font-weight:400;color:#161616;transform:scaleX(0.9550);transform-origin:50% 0;">-</span></div><div style="position:absolute;left:2403.00px;top:822.99px;width:0;height:0;display:flex;justify-content:center"><span style="white-space:pre;line-height:1;font-family:'Liberation Sans',sans-serif;font-size:22.67px;font-weight:400;color:#161616;transform:scaleX(0.9550);transform-origin:50% 0;">-</span></div><div style="position:absolute;left:2600.00px;top:822.99px;width:0;height:0;display:flex;justify-content:flex-end"><span style="white-space:pre;line-height:1;font-family:'Liberation Sans',sans-serif;font-size:22.67px;font-weight:400;color:#161616;transform:scaleX(0.9550);transform-origin:100% 0;">3,000</span></div><div style="position:absolute;left:2769.00px;top:822.99px;width:0;height:0;display:flex;justify-content:flex-end"><span style="white-space:pre;line-height:1;font-family:'Liberation Sans',sans-serif;font-size:22.67px;font-weight:400;color:#161616;transform:scaleX(0.9550);transform-origin:100% 0;">3,000</span></div><div style="position:absolute;left:142.50px;top:851.06px;width:0;height:0;display:flex;justify-content:flex-start"><span style="white-space:pre;line-height:1;font-family:'Liberation Sans',sans-serif;font-size:22.67px;font-weight:400;color:#161616;transform:scaleX(0.9709);transform-origin:0 0;">Initial Marketing Materials &amp; Signage</span></div><div style="position:absolute;left:1047.75px;top:851.06px;width:0;height:0;display:flex;justify-content:center"><span style="white-space:pre;line-height:1;font-family:'Liberation Sans',sans-serif;font-size:22.67px;font-weight:400;color:#161616;transform:scaleX(0.9550);transform-origin:50% 0;">Jun-26</span></div><div style="position:absolute;left:1251.75px;top:851.06px;width:0;height:0;display:flex;justify-content:center"><span style="white-space:pre;line-height:1;font-family:'Liberation Sans',sans-serif;font-size:22.67px;font-weight:400;color:#161616;transform:scaleX(0.9550);transform-origin:50% 0;">Oct-26</span></div><div style="position:absolute;left:1548.00px;top:851.06px;width:0;height:0;display:flex;justify-content:flex-end"><span style="white-space:pre;line-height:1;font-family:'Liberation Sans',sans-serif;font-size:22.67px;font-weight:400;color:#161616;transform:scaleX(0.9550);transform-origin:100% 0;">10,000</span></div><div style="position:absolute;left:1663.40px;top:851.06px;width:0;height:0;display:flex;justify-content:center"><span style="white-space:pre;line-height:1;font-family:'Liberation Sans',sans-serif;font-size:22.67px;font-weight:400;color:#161616;transform:scaleX(0.9550);transform-origin:50% 0;">Yes</span></div><div style="position:absolute;left:1896.00px;top:851.06px;width:0;height:0;display:flex;justify-content:center"><span style="white-space:pre;line-height:1;font-family:'Liberation Sans',sans-serif;font-size:22.67px;font-weight:400;color:#161616;transform:scaleX(0.9550);transform-origin:50% 0;">-</span></div><div style="position:absolute;left:2065.00px;top:851.06px;width:0;height:0;display:flex;justify-content:center"><span style="white-space:pre;line-height:1;font-family:'Liberation Sans',sans-serif;font-size:22.67px;font-weight:400;color:#161616;transform:scaleX(0.9550);transform-origin:50% 0;">-</span></div><div style="position:absolute;left:2234.00px;top:851.06px;width:0;height:0;display:flex;justify-content:center"><span style="white-space:pre;line-height:1;font-family:'Liberation Sans',sans-serif;font-size:22.67px;font-weight:400;color:#161616;transform:scaleX(0.9550);transform-origin:50% 0;">-</span></div><div style="position:absolute;left:2403.00px;top:851.06px;width:0;height:0;display:flex;justify-content:center"><span style="white-space:pre;line-height:1;font-family:'Liberation Sans',sans-serif;font-size:22.67px;font-weight:400;color:#161616;transform:scaleX(0.9550);transform-origin:50% 0;">-</span></div><div style="position:absolute;left:2572.00px;top:851.06px;width:0;height:0;display:flex;justify-content:center"><span style="white-space:pre;line-height:1;font-family:'Liberation Sans',sans-serif;font-size:22.67px;font-weight:400;color:#161616;transform:scaleX(0.9550);transform-origin:50% 0;">-</span></div><div style="position:absolute;left:2769.00px;top:851.06px;width:0;height:0;display:flex;justify-content:flex-end"><span style="white-space:pre;line-height:1;font-family:'Liberation Sans',sans-serif;font-size:22.67px;font-weight:400;color:#161616;transform:scaleX(0.9550);transform-origin:100% 0;">2,000</span></div><div style="position:absolute;left:143.00px;top:879.12px;width:0;height:0;display:flex;justify-content:flex-start"><span style="white-space:pre;line-height:1;font-family:'Liberation Sans',sans-serif;font-size:22.67px;font-weight:400;color:#161616;transform:scaleX(0.9550);transform-origin:0 0;">-</span></div><div style="position:absolute;left:1663.40px;top:879.12px;width:0;height:0;display:flex;justify-content:center"><span style="white-space:pre;line-height:1;font-family:'Liberation Sans',sans-serif;font-size:22.67px;font-weight:400;color:#161616;transform:scaleX(0.9550);transform-origin:50% 0;">Yes</span></div><div style="position:absolute;left:1896.00px;top:879.12px;width:0;height:0;display:flex;justify-content:center"><span style="white-space:pre;line-height:1;font-family:'Liberation Sans',sans-serif;font-size:22.67px;font-weight:400;color:#161616;transform:scaleX(0.9550);transform-origin:50% 0;">-</span></div><div style="position:absolute;left:2065.00px;top:879.12px;width:0;height:0;display:flex;justify-content:center"><span style="white-space:pre;line-height:1;font-family:'Liberation Sans',sans-serif;font-size:22.67px;font-weight:400;color:#161616;transform:scaleX(0.9550);transform-origin:50% 0;">-</span></div><div style="position:absolute;left:2234.00px;top:879.12px;width:0;height:0;display:flex;justify-content:center"><span style="white-space:pre;line-height:1;font-family:'Liberation Sans',sans-serif;font-size:22.67px;font-weight:400;color:#161616;transform:scaleX(0.9550);transform-origin:50% 0;">-</span></div><div style="position:absolute;left:2403.00px;top:879.12px;width:0;height:0;display:flex;justify-content:center"><span style="white-space:pre;line-height:1;font-family:'Liberation Sans',sans-serif;font-size:22.67px;font-weight:400;color:#161616;transform:scaleX(0.9550);transform-origin:50% 0;">-</span></div><div style="position:absolute;left:2572.00px;top:879.12px;width:0;height:0;display:flex;justify-content:center"><span style="white-space:pre;line-height:1;font-family:'Liberation Sans',sans-serif;font-size:22.67px;font-weight:400;color:#161616;transform:scaleX(0.9550);transform-origin:50% 0;">-</span></div><div style="position:absolute;left:2741.00px;top:879.12px;width:0;height:0;display:flex;justify-content:center"><span style="white-space:pre;line-height:1;font-family:'Liberation Sans',sans-serif;font-size:22.67px;font-weight:400;color:#161616;transform:scaleX(0.9550);transform-origin:50% 0;">-</span></div><div style="position:absolute;left:143.00px;top:907.19px;width:0;height:0;display:flex;justify-content:flex-start"><span style="white-space:pre;line-height:1;font-family:'Liberation Sans',sans-serif;font-size:22.67px;font-weight:400;color:#161616;transform:scaleX(0.9550);transform-origin:0 0;">-</span></div><div style="position:absolute;left:1663.40px;top:907.19px;width:0;height:0;display:flex;justify-content:center"><span style="white-space:pre;line-height:1;font-family:'Liberation Sans',sans-serif;font-size:22.67px;font-weight:400;color:#161616;transform:scaleX(0.9550);transform-origin:50% 0;">Yes</span></div><div style="position:absolute;left:1896.00px;top:907.19px;width:0;height:0;display:flex;justify-content:center"><span style="white-space:pre;line-height:1;font-family:'Liberation Sans',sans-serif;font-size:22.67px;font-weight:400;color:#161616;transform:scaleX(0.9550);transform-origin:50% 0;">-</span></div><div style="position:absolute;left:2065.00px;top:907.19px;width:0;height:0;display:flex;justify-content:center"><span style="white-space:pre;line-height:1;font-family:'Liberation Sans',sans-serif;font-size:22.67px;font-weight:400;color:#161616;transform:scaleX(0.9550);transform-origin:50% 0;">-</span></div><div style="position:absolute;left:2234.00px;top:907.19px;width:0;height:0;display:flex;justify-content:center"><span style="white-space:pre;line-height:1;font-family:'Liberation Sans',sans-serif;font-size:22.67px;font-weight:400;color:#161616;transform:scaleX(0.9550);transform-origin:50% 0;">-</span></div><div style="position:absolute;left:2403.00px;top:907.19px;width:0;height:0;display:flex;justify-content:center"><span style="white-space:pre;line-height:1;font-family:'Liberation Sans',sans-serif;font-size:22.67px;font-weight:400;color:#161616;transform:scaleX(0.9550);transform-origin:50% 0;">-</span></div><div style="position:absolute;left:2572.00px;top:907.19px;width:0;height:0;display:flex;justify-content:center"><span style="white-space:pre;line-height:1;font-family:'Liberation Sans',sans-serif;font-size:22.67px;font-weight:400;color:#161616;transform:scaleX(0.9550);transform-origin:50% 0;">-</span></div><div style="position:absolute;left:2741.00px;top:907.19px;width:0;height:0;display:flex;justify-content:center"><span style="white-space:pre;line-height:1;font-family:'Liberation Sans',sans-serif;font-size:22.67px;font-weight:400;color:#161616;transform:scaleX(0.9550);transform-origin:50% 0;">-</span></div><div style="position:absolute;left:143.00px;top:935.25px;width:0;height:0;display:flex;justify-content:flex-start"><span style="white-space:pre;line-height:1;font-family:'Liberation Sans',sans-serif;font-size:22.67px;font-weight:400;color:#161616;transform:scaleX(0.9550);transform-origin:0 0;">-</span></div><div style="position:absolute;left:1663.40px;top:935.25px;width:0;height:0;display:flex;justify-content:center"><span style="white-space:pre;line-height:1;font-family:'Liberation Sans',sans-serif;font-size:22.67px;font-weight:400;color:#161616;transform:scaleX(0.9550);transform-origin:50% 0;">Yes</span></div><div style="position:absolute;left:1896.00px;top:935.25px;width:0;height:0;display:flex;justify-content:center"><span style="white-space:pre;line-height:1;font-family:'Liberation Sans',sans-serif;font-size:22.67px;font-weight:400;color:#161616;transform:scaleX(0.9550);transform-origin:50% 0;">-</span></div><div style="position:absolute;left:2065.00px;top:935.25px;width:0;height:0;display:flex;justify-content:center"><span style="white-space:pre;line-height:1;font-family:'Liberation Sans',sans-serif;font-size:22.67px;font-weight:400;color:#161616;transform:scaleX(0.9550);transform-origin:50% 0;">-</span></div><div style="position:absolute;left:2234.00px;top:935.25px;width:0;height:0;display:flex;justify-content:center"><span style="white-space:pre;line-height:1;font-family:'Liberation Sans',sans-serif;font-size:22.67px;font-weight:400;color:#161616;transform:scaleX(0.9550);transform-origin:50% 0;">-</span></div><div style="position:absolute;left:2403.00px;top:935.25px;width:0;height:0;display:flex;justify-content:center"><span style="white-space:pre;line-height:1;font-family:'Liberation Sans',sans-serif;font-size:22.67px;font-weight:400;color:#161616;transform:scaleX(0.9550);transform-origin:50% 0;">-</span></div><div style="position:absolute;left:2572.00px;top:935.25px;width:0;height:0;display:flex;justify-content:center"><span style="white-space:pre;line-height:1;font-family:'Liberation Sans',sans-serif;font-size:22.67px;font-weight:400;color:#161616;transform:scaleX(0.9550);transform-origin:50% 0;">-</span></div><div style="position:absolute;left:2741.00px;top:935.25px;width:0;height:0;display:flex;justify-content:center"><span style="white-space:pre;line-height:1;font-family:'Liberation Sans',sans-serif;font-size:22.67px;font-weight:400;color:#161616;transform:scaleX(0.9550);transform-origin:50% 0;">-</span></div><div style="position:absolute;left:143.00px;top:963.32px;width:0;height:0;display:flex;justify-content:flex-start"><span style="white-space:pre;line-height:1;font-family:'Liberation Sans',sans-serif;font-size:22.67px;font-weight:400;color:#161616;transform:scaleX(0.9550);transform-origin:0 0;">-</span></div><div style="position:absolute;left:1663.40px;top:963.32px;width:0;height:0;display:flex;justify-content:center"><span style="white-space:pre;line-height:1;font-family:'Liberation Sans',sans-serif;font-size:22.67px;font-weight:400;color:#161616;transform:scaleX(0.9550);transform-origin:50% 0;">Yes</span></div><div style="position:absolute;left:1896.00px;top:963.32px;width:0;height:0;display:flex;justify-content:center"><span style="white-space:pre;line-height:1;font-family:'Liberation Sans',sans-serif;font-size:22.67px;font-weight:400;color:#161616;transform:scaleX(0.9550);transform-origin:50% 0;">-</span></div><div style="position:absolute;left:2065.00px;top:963.32px;width:0;height:0;display:flex;justify-content:center"><span style="white-space:pre;line-height:1;font-family:'Liberation Sans',sans-serif;font-size:22.67px;font-weight:400;color:#161616;transform:scaleX(0.9550);transform-origin:50% 0;">-</span></div><div style="position:absolute;left:2234.00px;top:963.32px;width:0;height:0;display:flex;justify-content:center"><span style="white-space:pre;line-height:1;font-family:'Liberation Sans',sans-serif;font-size:22.67px;font-weight:400;color:#161616;transform:scaleX(0.9550);transform-origin:50% 0;">-</span></div><div style="position:absolute;left:2403.00px;top:963.32px;width:0;height:0;display:flex;justify-content:center"><span style="white-space:pre;line-height:1;font-family:'Liberation Sans',sans-serif;font-size:22.67px;font-weight:400;color:#161616;transform:scaleX(0.9550);transform-origin:50% 0;">-</span></div><div style="position:absolute;left:2572.00px;top:963.32px;width:0;height:0;display:flex;justify-content:center"><span style="white-space:pre;line-height:1;font-family:'Liberation Sans',sans-serif;font-size:22.67px;font-weight:400;color:#161616;transform:scaleX(0.9550);transform-origin:50% 0;">-</span></div><div style="position:absolute;left:2741.00px;top:963.32px;width:0;height:0;display:flex;justify-content:center"><span style="white-space:pre;line-height:1;font-family:'Liberation Sans',sans-serif;font-size:22.67px;font-weight:400;color:#161616;transform:scaleX(0.9550);transform-origin:50% 0;">-</span></div><div style="position:absolute;left:143.00px;top:991.38px;width:0;height:0;display:flex;justify-content:flex-start"><span style="white-space:pre;line-height:1;font-family:'Liberation Sans',sans-serif;font-size:22.67px;font-weight:400;color:#161616;transform:scaleX(0.9550);transform-origin:0 0;">-</span></div><div style="position:absolute;left:1663.40px;top:991.38px;width:0;height:0;display:flex;justify-content:center"><span style="white-space:pre;line-height:1;font-family:'Liberation Sans',sans-serif;font-size:22.67px;font-weight:400;color:#161616;transform:scaleX(0.9550);transform-origin:50% 0;">Yes</span></div><div style="position:absolute;left:1896.00px;top:991.38px;width:0;height:0;display:flex;justify-content:center"><span style="white-space:pre;line-height:1;font-family:'Liberation Sans',sans-serif;font-size:22.67px;font-weight:400;color:#161616;transform:scaleX(0.9550);transform-origin:50% 0;">-</span></div><div style="position:absolute;left:2065.00px;top:991.38px;width:0;height:0;display:flex;justify-content:center"><span style="white-space:pre;line-height:1;font-family:'Liberation Sans',sans-serif;font-size:22.67px;font-weight:400;color:#161616;transform:scaleX(0.9550);transform-origin:50% 0;">-</span></div><div style="position:absolute;left:2234.00px;top:991.38px;width:0;height:0;display:flex;justify-content:center"><span style="white-space:pre;line-height:1;font-family:'Liberation Sans',sans-serif;font-size:22.67px;font-weight:400;color:#161616;transform:scaleX(0.9550);transform-origin:50% 0;">-</span></div><div style="position:absolute;left:2403.00px;top:991.38px;width:0;height:0;display:flex;justify-content:center"><span style="white-space:pre;line-height:1;font-family:'Liberation Sans',sans-serif;font-size:22.67px;font-weight:400;color:#161616;transform:scaleX(0.9550);transform-origin:50% 0;">-</span></div><div style="position:absolute;left:2572.00px;top:991.38px;width:0;height:0;display:flex;justify-content:center"><span style="white-space:pre;line-height:1;font-family:'Liberation Sans',sans-serif;font-size:22.67px;font-weight:400;color:#161616;transform:scaleX(0.9550);transform-origin:50% 0;">-</span></div><div style="position:absolute;left:2741.00px;top:991.38px;width:0;height:0;display:flex;justify-content:center"><span style="white-space:pre;line-height:1;font-family:'Liberation Sans',sans-serif;font-size:22.67px;font-weight:400;color:#161616;transform:scaleX(0.9550);transform-origin:50% 0;">-</span></div><div style="position:absolute;left:143.00px;top:1019.45px;width:0;height:0;display:flex;justify-content:flex-start"><span style="white-space:pre;line-height:1;font-family:'Liberation Sans',sans-serif;font-size:22.67px;font-weight:400;color:#161616;transform:scaleX(0.9550);transform-origin:0 0;">-</span></div><div style="position:absolute;left:1663.40px;top:1019.45px;width:0;height:0;display:flex;justify-content:center"><span style="white-space:pre;line-height:1;font-family:'Liberation Sans',sans-serif;font-size:22.67px;font-weight:400;color:#161616;transform:scaleX(0.9550);transform-origin:50% 0;">Yes</span></div><div style="position:absolute;left:1896.00px;top:1019.45px;width:0;height:0;display:flex;justify-content:center"><span style="white-space:pre;line-height:1;font-family:'Liberation Sans',sans-serif;font-size:22.67px;font-weight:400;color:#161616;transform:scaleX(0.9550);transform-origin:50% 0;">-</span></div><div style="position:absolute;left:2065.00px;top:1019.45px;width:0;height:0;display:flex;justify-content:center"><span style="white-space:pre;line-height:1;font-family:'Liberation Sans',sans-serif;font-size:22.67px;font-weight:400;color:#161616;transform:scaleX(0.9550);transform-origin:50% 0;">-</span></div><div style="position:absolute;left:2234.00px;top:1019.45px;width:0;height:0;display:flex;justify-content:center"><span style="white-space:pre;line-height:1;font-family:'Liberation Sans',sans-serif;font-size:22.67px;font-weight:400;color:#161616;transform:scaleX(0.9550);transform-origin:50% 0;">-</span></div><div style="position:absolute;left:2403.00px;top:1019.45px;width:0;height:0;display:flex;justify-content:center"><span style="white-space:pre;line-height:1;font-family:'Liberation Sans',sans-serif;font-size:22.67px;font-weight:400;color:#161616;transform:scaleX(0.9550);transform-origin:50% 0;">-</span></div><div style="position:absolute;left:2572.00px;top:1019.45px;width:0;height:0;display:flex;justify-content:center"><span style="white-space:pre;line-height:1;font-family:'Liberation Sans',sans-serif;font-size:22.67px;font-weight:400;color:#161616;transform:scaleX(0.9550);transform-origin:50% 0;">-</span></div><div style="position:absolute;left:2741.00px;top:1019.45px;width:0;height:0;display:flex;justify-content:center"><span style="white-space:pre;line-height:1;font-family:'Liberation Sans',sans-serif;font-size:22.67px;font-weight:400;color:#161616;transform:scaleX(0.9550);transform-origin:50% 0;">-</span></div><div style="position:absolute;left:143.00px;top:1047.51px;width:0;height:0;display:flex;justify-content:flex-start"><span style="white-space:pre;line-height:1;font-family:'Liberation Sans',sans-serif;font-size:22.67px;font-weight:400;color:#161616;transform:scaleX(0.9550);transform-origin:0 0;">-</span></div><div style="position:absolute;left:1663.40px;top:1047.51px;width:0;height:0;display:flex;justify-content:center"><span style="white-space:pre;line-height:1;font-family:'Liberation Sans',sans-serif;font-size:22.67px;font-weight:400;color:#161616;transform:scaleX(0.9550);transform-origin:50% 0;">Yes</span></div><div style="position:absolute;left:1896.00px;top:1047.51px;width:0;height:0;display:flex;justify-content:center"><span style="white-space:pre;line-height:1;font-family:'Liberation Sans',sans-serif;font-size:22.67px;font-weight:400;color:#161616;transform:scaleX(0.9550);transform-origin:50% 0;">-</span></div><div style="position:absolute;left:2065.00px;top:1047.51px;width:0;height:0;display:flex;justify-content:center"><span style="white-space:pre;line-height:1;font-family:'Liberation Sans',sans-serif;font-size:22.67px;font-weight:400;color:#161616;transform:scaleX(0.9550);transform-origin:50% 0;">-</span></div><div style="position:absolute;left:2234.00px;top:1047.51px;width:0;height:0;display:flex;justify-content:center"><span style="white-space:pre;line-height:1;font-family:'Liberation Sans',sans-serif;font-size:22.67px;font-weight:400;color:#161616;transform:scaleX(0.9550);transform-origin:50% 0;">-</span></div><div style="position:absolute;left:2403.00px;top:1047.51px;width:0;height:0;display:flex;justify-content:center"><span style="white-space:pre;line-height:1;font-family:'Liberation Sans',sans-serif;font-size:22.67px;font-weight:400;color:#161616;transform:scaleX(0.9550);transform-origin:50% 0;">-</span></div><div style="position:absolute;left:2572.00px;top:1047.51px;width:0;height:0;display:flex;justify-content:center"><span style="white-space:pre;line-height:1;font-family:'Liberation Sans',sans-serif;font-size:22.67px;font-weight:400;color:#161616;transform:scaleX(0.9550);transform-origin:50% 0;">-</span></div><div style="position:absolute;left:2741.00px;top:1047.51px;width:0;height:0;display:flex;justify-content:center"><span style="white-space:pre;line-height:1;font-family:'Liberation Sans',sans-serif;font-size:22.67px;font-weight:400;color:#161616;transform:scaleX(0.9550);transform-origin:50% 0;">-</span></div><div style="position:absolute;left:143.00px;top:1075.58px;width:0;height:0;display:flex;justify-content:flex-start"><span style="white-space:pre;line-height:1;font-family:'Liberation Sans',sans-serif;font-size:22.67px;font-weight:400;color:#161616;transform:scaleX(0.9550);transform-origin:0 0;">-</span></div><div style="position:absolute;left:1663.40px;top:1075.58px;width:0;height:0;display:flex;justify-content:center"><span style="white-space:pre;line-height:1;font-family:'Liberation Sans',sans-serif;font-size:22.67px;font-weight:400;color:#161616;transform:scaleX(0.9550);transform-origin:50% 0;">Yes</span></div><div style="position:absolute;left:1896.00px;top:1075.58px;width:0;height:0;display:flex;justify-content:center"><span style="white-space:pre;line-height:1;font-family:'Liberation Sans',sans-serif;font-size:22.67px;font-weight:400;color:#161616;transform:scaleX(0.9550);transform-origin:50% 0;">-</span></div><div style="position:absolute;left:2065.00px;top:1075.58px;width:0;height:0;display:flex;justify-content:center"><span style="white-space:pre;line-height:1;font-family:'Liberation Sans',sans-serif;font-size:22.67px;font-weight:400;color:#161616;transform:scaleX(0.9550);transform-origin:50% 0;">-</span></div><div style="position:absolute;left:2234.00px;top:1075.58px;width:0;height:0;display:flex;justify-content:center"><span style="white-space:pre;line-height:1;font-family:'Liberation Sans',sans-serif;font-size:22.67px;font-weight:400;color:#161616;transform:scaleX(0.9550);transform-origin:50% 0;">-</span></div><div style="position:absolute;left:2403.00px;top:1075.58px;width:0;height:0;display:flex;justify-content:center"><span style="white-space:pre;line-height:1;font-family:'Liberation Sans',sans-serif;font-size:22.67px;font-weight:400;color:#161616;transform:scaleX(0.9550);transform-origin:50% 0;">-</span></div><div style="position:absolute;left:2572.00px;top:1075.58px;width:0;height:0;display:flex;justify-content:center"><span style="white-space:pre;line-height:1;font-family:'Liberation Sans',sans-serif;font-size:22.67px;font-weight:400;color:#161616;transform:scaleX(0.9550);transform-origin:50% 0;">-</span></div><div style="position:absolute;left:2741.00px;top:1075.58px;width:0;height:0;display:flex;justify-content:center"><span style="white-space:pre;line-height:1;font-family:'Liberation Sans',sans-serif;font-size:22.67px;font-weight:400;color:#161616;transform:scaleX(0.9550);transform-origin:50% 0;">-</span></div><div style="position:absolute;left:143.00px;top:1103.64px;width:0;height:0;display:flex;justify-content:flex-start"><span style="white-space:pre;line-height:1;font-family:'Liberation Sans',sans-serif;font-size:22.67px;font-weight:400;color:#161616;transform:scaleX(0.9550);transform-origin:0 0;">-</span></div><div style="position:absolute;left:1663.40px;top:1103.64px;width:0;height:0;display:flex;justify-content:center"><span style="white-space:pre;line-height:1;font-family:'Liberation Sans',sans-serif;font-size:22.67px;font-weight:400;color:#161616;transform:scaleX(0.9550);transform-origin:50% 0;">Yes</span></div><div style="position:absolute;left:1896.00px;top:1103.64px;width:0;height:0;display:flex;justify-content:center"><span style="white-space:pre;line-height:1;font-family:'Liberation Sans',sans-serif;font-size:22.67px;font-weight:400;color:#161616;transform:scaleX(0.9550);transform-origin:50% 0;">-</span></div><div style="position:absolute;left:2065.00px;top:1103.64px;width:0;height:0;display:flex;justify-content:center"><span style="white-space:pre;line-height:1;font-family:'Liberation Sans',sans-serif;font-size:22.67px;font-weight:400;color:#161616;transform:scaleX(0.9550);transform-origin:50% 0;">-</span></div><div style="position:absolute;left:2234.00px;top:1103.64px;width:0;height:0;display:flex;justify-content:center"><span style="white-space:pre;line-height:1;font-family:'Liberation Sans',sans-serif;font-size:22.67px;font-weight:400;color:#161616;transform:scaleX(0.9550);transform-origin:50% 0;">-</span></div><div style="position:absolute;left:2403.00px;top:1103.64px;width:0;height:0;display:flex;justify-content:center"><span style="white-space:pre;line-height:1;font-family:'Liberation Sans',sans-serif;font-size:22.67px;font-weight:400;color:#161616;transform:scaleX(0.9550);transform-origin:50% 0;">-</span></div><div style="position:absolute;left:2572.00px;top:1103.64px;width:0;height:0;display:flex;justify-content:center"><span style="white-space:pre;line-height:1;font-family:'Liberation Sans',sans-serif;font-size:22.67px;font-weight:400;color:#161616;transform:scaleX(0.9550);transform-origin:50% 0;">-</span></div><div style="position:absolute;left:2741.00px;top:1103.64px;width:0;height:0;display:flex;justify-content:center"><span style="white-space:pre;line-height:1;font-family:'Liberation Sans',sans-serif;font-size:22.67px;font-weight:400;color:#161616;transform:scaleX(0.9550);transform-origin:50% 0;">-</span></div><div style="position:absolute;left:143.00px;top:1131.71px;width:0;height:0;display:flex;justify-content:flex-start"><span style="white-space:pre;line-height:1;font-family:'Liberation Sans',sans-serif;font-size:22.67px;font-weight:400;color:#161616;transform:scaleX(0.9550);transform-origin:0 0;">-</span></div><div style="position:absolute;left:1663.40px;top:1131.71px;width:0;height:0;display:flex;justify-content:center"><span style="white-space:pre;line-height:1;font-family:'Liberation Sans',sans-serif;font-size:22.67px;font-weight:400;color:#161616;transform:scaleX(0.9550);transform-origin:50% 0;">Yes</span></div><div style="position:absolute;left:1896.00px;top:1131.71px;width:0;height:0;display:flex;justify-content:center"><span style="white-space:pre;line-height:1;font-family:'Liberation Sans',sans-serif;font-size:22.67px;font-weight:400;color:#161616;transform:scaleX(0.9550);transform-origin:50% 0;">-</span></div><div style="position:absolute;left:2065.00px;top:1131.71px;width:0;height:0;display:flex;justify-content:center"><span style="white-space:pre;line-height:1;font-family:'Liberation Sans',sans-serif;font-size:22.67px;font-weight:400;color:#161616;transform:scaleX(0.9550);transform-origin:50% 0;">-</span></div><div style="position:absolute;left:2234.00px;top:1131.71px;width:0;height:0;display:flex;justify-content:center"><span style="white-space:pre;line-height:1;font-family:'Liberation Sans',sans-serif;font-size:22.67px;font-weight:400;color:#161616;transform:scaleX(0.9550);transform-origin:50% 0;">-</span></div><div style="position:absolute;left:2403.00px;top:1131.71px;width:0;height:0;display:flex;justify-content:center"><span style="white-space:pre;line-height:1;font-family:'Liberation Sans',sans-serif;font-size:22.67px;font-weight:400;color:#161616;transform:scaleX(0.9550);transform-origin:50% 0;">-</span></div><div style="position:absolute;left:2572.00px;top:1131.71px;width:0;height:0;display:flex;justify-content:center"><span style="white-space:pre;line-height:1;font-family:'Liberation Sans',sans-serif;font-size:22.67px;font-weight:400;color:#161616;transform:scaleX(0.9550);transform-origin:50% 0;">-</span></div><div style="position:absolute;left:2741.00px;top:1131.71px;width:0;height:0;display:flex;justify-content:center"><span style="white-space:pre;line-height:1;font-family:'Liberation Sans',sans-serif;font-size:22.67px;font-weight:400;color:#161616;transform:scaleX(0.9550);transform-origin:50% 0;">-</span></div><div style="position:absolute;left:143.00px;top:1159.77px;width:0;height:0;display:flex;justify-content:flex-start"><span style="white-space:pre;line-height:1;font-family:'Liberation Sans',sans-serif;font-size:22.67px;font-weight:400;color:#161616;transform:scaleX(0.9550);transform-origin:0 0;">-</span></div><div style="position:absolute;left:1663.40px;top:1159.77px;width:0;height:0;display:flex;justify-content:center"><span style="white-space:pre;line-height:1;font-family:'Liberation Sans',sans-serif;font-size:22.67px;font-weight:400;color:#161616;transform:scaleX(0.9550);transform-origin:50% 0;">Yes</span></div><div style="position:absolute;left:1896.00px;top:1159.77px;width:0;height:0;display:flex;justify-content:center"><span style="white-space:pre;line-height:1;font-family:'Liberation Sans',sans-serif;font-size:22.67px;font-weight:400;color:#161616;transform:scaleX(0.9550);transform-origin:50% 0;">-</span></div><div style="position:absolute;left:2065.00px;top:1159.77px;width:0;height:0;display:flex;justify-content:center"><span style="white-space:pre;line-height:1;font-family:'Liberation Sans',sans-serif;font-size:22.67px;font-weight:400;color:#161616;transform:scaleX(0.9550);transform-origin:50% 0;">-</span></div><div style="position:absolute;left:2234.00px;top:1159.77px;width:0;height:0;display:flex;justify-content:center"><span style="white-space:pre;line-height:1;font-family:'Liberation Sans',sans-serif;font-size:22.67px;font-weight:400;color:#161616;transform:scaleX(0.9550);transform-origin:50% 0;">-</span></div><div style="position:absolute;left:2403.00px;top:1159.77px;width:0;height:0;display:flex;justify-content:center"><span style="white-space:pre;line-height:1;font-family:'Liberation Sans',sans-serif;font-size:22.67px;font-weight:400;color:#161616;transform:scaleX(0.9550);transform-origin:50% 0;">-</span></div><div style="position:absolute;left:2572.00px;top:1159.77px;width:0;height:0;display:flex;justify-content:center"><span style="white-space:pre;line-height:1;font-family:'Liberation Sans',sans-serif;font-size:22.67px;font-weight:400;color:#161616;transform:scaleX(0.9550);transform-origin:50% 0;">-</span></div><div style="position:absolute;left:2741.00px;top:1159.77px;width:0;height:0;display:flex;justify-content:center"><span style="white-space:pre;line-height:1;font-family:'Liberation Sans',sans-serif;font-size:22.67px;font-weight:400;color:#161616;transform:scaleX(0.9550);transform-origin:50% 0;">-</span></div><div style="position:absolute;left:143.00px;top:1187.84px;width:0;height:0;display:flex;justify-content:flex-start"><span style="white-space:pre;line-height:1;font-family:'Liberation Sans',sans-serif;font-size:22.67px;font-weight:400;color:#161616;transform:scaleX(0.9550);transform-origin:0 0;">-</span></div><div style="position:absolute;left:1663.40px;top:1187.84px;width:0;height:0;display:flex;justify-content:center"><span style="white-space:pre;line-height:1;font-family:'Liberation Sans',sans-serif;font-size:22.67px;font-weight:400;color:#161616;transform:scaleX(0.9550);transform-origin:50% 0;">Yes</span></div><div style="position:absolute;left:1896.00px;top:1187.84px;width:0;height:0;display:flex;justify-content:center"><span style="white-space:pre;line-height:1;font-family:'Liberation Sans',sans-serif;font-size:22.67px;font-weight:400;color:#161616;transform:scaleX(0.9550);transform-origin:50% 0;">-</span></div><div style="position:absolute;left:2065.00px;top:1187.84px;width:0;height:0;display:flex;justify-content:center"><span style="white-space:pre;line-height:1;font-family:'Liberation Sans',sans-serif;font-size:22.67px;font-weight:400;color:#161616;transform:scaleX(0.9550);transform-origin:50% 0;">-</span></div><div style="position:absolute;left:2234.00px;top:1187.84px;width:0;height:0;display:flex;justify-content:center"><span style="white-space:pre;line-height:1;font-family:'Liberation Sans',sans-serif;font-size:22.67px;font-weight:400;color:#161616;transform:scaleX(0.9550);transform-origin:50% 0;">-</span></div><div style="position:absolute;left:2403.00px;top:1187.84px;width:0;height:0;display:flex;justify-content:center"><span style="white-space:pre;line-height:1;font-family:'Liberation Sans',sans-serif;font-size:22.67px;font-weight:400;color:#161616;transform:scaleX(0.9550);transform-origin:50% 0;">-</span></div><div style="position:absolute;left:2572.00px;top:1187.84px;width:0;height:0;display:flex;justify-content:center"><span style="white-space:pre;line-height:1;font-family:'Liberation Sans',sans-serif;font-size:22.67px;font-weight:400;color:#161616;transform:scaleX(0.9550);transform-origin:50% 0;">-</span></div><div style="position:absolute;left:2741.00px;top:1187.84px;width:0;height:0;display:flex;justify-content:center"><span style="white-space:pre;line-height:1;font-family:'Liberation Sans',sans-serif;font-size:22.67px;font-weight:400;color:#161616;transform:scaleX(0.9550);transform-origin:50% 0;">-</span></div><div style="position:absolute;left:138.20px;top:1212.30px;width:2722.10px;height:35.30px;background:#4bb2e6;"></div><div style="position:absolute;left:144.20px;top:1215.12px;width:0;height:0;display:flex;justify-content:flex-start"><span style="white-space:pre;line-height:1;font-family:'Liberation Sans',sans-serif;font-size:29.51px;font-weight:700;color:#fff;transform:scaleX(1.0222);transform-origin:0 0;-webkit-text-stroke:0.51px #fff;">Total</span></div><div style="position:absolute;left:1545.00px;top:1218.40px;width:0;height:0;display:flex;justify-content:flex-end"><span style="white-space:pre;line-height:1;font-family:'Liberation Sans',sans-serif;font-size:22.67px;font-weight:700;color:#fff;transform:scaleX(1.0900);transform-origin:100% 0;-webkit-text-stroke:0.45px #fff;">625,000</span></div><div style="position:absolute;left:1921.00px;top:1218.40px;width:0;height:0;display:flex;justify-content:flex-end"><span style="white-space:pre;line-height:1;font-family:'Liberation Sans',sans-serif;font-size:22.67px;font-weight:700;color:#fff;transform:scaleX(1.0900);transform-origin:100% 0;-webkit-text-stroke:0.45px #fff;">83,333</span></div><div style="position:absolute;left:2090.00px;top:1218.40px;width:0;height:0;display:flex;justify-content:flex-end"><span style="white-space:pre;line-height:1;font-family:'Liberation Sans',sans-serif;font-size:22.67px;font-weight:700;color:#fff;transform:scaleX(1.0900);transform-origin:100% 0;-webkit-text-stroke:0.45px #fff;">143,333</span></div><div style="position:absolute;left:2259.00px;top:1218.40px;width:0;height:0;display:flex;justify-content:flex-end"><span style="white-space:pre;line-height:1;font-family:'Liberation Sans',sans-serif;font-size:22.67px;font-weight:700;color:#fff;transform:scaleX(1.0900);transform-origin:100% 0;-webkit-text-stroke:0.45px #fff;">178,333</span></div><div style="position:absolute;left:2428.00px;top:1218.40px;width:0;height:0;display:flex;justify-content:flex-end"><span style="white-space:pre;line-height:1;font-family:'Liberation Sans',sans-serif;font-size:22.67px;font-weight:700;color:#fff;transform:scaleX(1.0900);transform-origin:100% 0;-webkit-text-stroke:0.45px #fff;">107,500</span></div><div style="position:absolute;left:2597.00px;top:1218.40px;width:0;height:0;display:flex;justify-content:flex-end"><span style="white-space:pre;line-height:1;font-family:'Liberation Sans',sans-serif;font-size:22.67px;font-weight:700;color:#fff;transform:scaleX(1.0900);transform-origin:100% 0;-webkit-text-stroke:0.45px #fff;">50,500</span></div><div style="position:absolute;left:2766.00px;top:1218.40px;width:0;height:0;display:flex;justify-content:flex-end"><span style="white-space:pre;line-height:1;font-family:'Liberation Sans',sans-serif;font-size:22.67px;font-weight:700;color:#fff;transform:scaleX(1.0900);transform-origin:100% 0;-webkit-text-stroke:0.45px #fff;">27,500</span></div><div style="position:absolute;left:96.50px;top:1305.77px;width:0;height:0;display:flex;justify-content:flex-start"><span style="white-space:pre;line-height:1;font-family:'Liberation Sans',sans-serif;font-size:41.13px;font-weight:700;color:#222222;transform:scaleX(0.9934);transform-origin:0 0;-webkit-text-stroke:0.61px #222222;">Startup Costs Depreciation, $</span></div><div style="position:absolute;left:138.20px;top:1373.30px;width:2722.10px;height:27.90px;background:#4bb2e6;"></div><div style="position:absolute;left:143.90px;top:1376.50px;width:0;height:0;display:flex;justify-content:flex-start"><span style="white-space:pre;line-height:1;font-family:'Liberation Sans',sans-serif;font-size:22.67px;font-weight:700;color:#fff;-webkit-text-stroke:0.45px #fff;">Opening Net Book Value</span></div><div style="position:absolute;left:1890.00px;top:1376.50px;width:0;height:0;display:flex;justify-content:center"><span style="white-space:pre;line-height:1;font-family:'Liberation Sans',sans-serif;font-size:22.67px;font-weight:700;color:#fff;transform:scaleX(1.0900);transform-origin:50% 0;-webkit-text-stroke:0.45px #fff;">-</span></div><div style="position:absolute;left:2090.00px;top:1376.50px;width:0;height:0;display:flex;justify-content:flex-end"><span style="white-space:pre;line-height:1;font-family:'Liberation Sans',sans-serif;font-size:22.67px;font-weight:700;color:#fff;transform:scaleX(1.0900);transform-origin:100% 0;-webkit-text-stroke:0.45px #fff;">82,639</span></div><div style="position:absolute;left:2259.00px;top:1376.50px;width:0;height:0;display:flex;justify-content:flex-end"><span style="white-space:pre;line-height:1;font-family:'Liberation Sans',sans-serif;font-size:22.67px;font-weight:700;color:#fff;transform:scaleX(1.0900);transform-origin:100% 0;-webkit-text-stroke:0.45px #fff;">224,083</span></div><div style="position:absolute;left:2428.00px;top:1376.50px;width:0;height:0;display:flex;justify-content:flex-end"><span style="white-space:pre;line-height:1;font-family:'Liberation Sans',sans-serif;font-size:22.67px;font-weight:700;color:#fff;transform:scaleX(1.0900);transform-origin:100% 0;-webkit-text-stroke:0.45px #fff;">399,042</span></div><div style="position:absolute;left:2597.00px;top:1376.50px;width:0;height:0;display:flex;justify-content:flex-end"><span style="white-space:pre;line-height:1;font-family:'Liberation Sans',sans-serif;font-size:22.67px;font-weight:700;color:#fff;transform:scaleX(1.0900);transform-origin:100% 0;-webkit-text-stroke:0.45px #fff;">502,271</span></div><div style="position:absolute;left:2766.00px;top:1376.50px;width:0;height:0;display:flex;justify-content:flex-end"><span style="white-space:pre;line-height:1;font-family:'Liberation Sans',sans-serif;font-size:22.67px;font-weight:700;color:#fff;transform:scaleX(1.0900);transform-origin:100% 0;-webkit-text-stroke:0.45px #fff;">548,079</span></div><div style="position:absolute;left:2846.00px;top:1376.50px;width:0;height:0;display:flex;justify-content:flex-start"><span style="white-space:pre;line-height:1;font-family:'Liberation Sans',sans-serif;font-size:22.67px;font-weight:700;color:#fff;transform:scaleX(1.0900);transform-origin:0 0;-webkit-text-stroke:0.45px #fff;">5</span></div><div style="position:absolute;left:163.80px;top:1403.50px;width:0;height:0;display:flex;justify-content:flex-start"><span style="white-space:pre;line-height:1;font-family:'Liberation Sans',sans-serif;font-size:22.67px;font-weight:400;color:#161616;transform:scaleX(0.9606);transform-origin:0 0;">Expenditure - Amortizable</span></div><div style="position:absolute;left:1728.00px;top:1403.50px;width:0;height:0;display:flex;justify-content:center"><span style="white-space:pre;line-height:1;font-family:'Liberation Sans',sans-serif;font-size:22.67px;font-weight:400;color:#161616;transform:scaleX(0.9550);transform-origin:50% 0;">-</span></div><div style="position:absolute;left:1924.00px;top:1403.50px;width:0;height:0;display:flex;justify-content:flex-end"><span style="white-space:pre;line-height:1;font-family:'Liberation Sans',sans-serif;font-size:22.67px;font-weight:400;color:#161616;transform:scaleX(0.9550);transform-origin:100% 0;">83,333</span></div><div style="position:absolute;left:2093.00px;top:1403.50px;width:0;height:0;display:flex;justify-content:flex-end"><span style="white-space:pre;line-height:1;font-family:'Liberation Sans',sans-serif;font-size:22.67px;font-weight:400;color:#161616;transform:scaleX(0.9550);transform-origin:100% 0;">143,333</span></div><div style="position:absolute;left:2262.00px;top:1403.50px;width:0;height:0;display:flex;justify-content:flex-end"><span style="white-space:pre;line-height:1;font-family:'Liberation Sans',sans-serif;font-size:22.67px;font-weight:400;color:#161616;transform:scaleX(0.9550);transform-origin:100% 0;">178,333</span></div><div style="position:absolute;left:2431.00px;top:1403.50px;width:0;height:0;display:flex;justify-content:flex-end"><span style="white-space:pre;line-height:1;font-family:'Liberation Sans',sans-serif;font-size:22.67px;font-weight:400;color:#161616;transform:scaleX(0.9550);transform-origin:100% 0;">107,500</span></div><div style="position:absolute;left:2600.00px;top:1403.50px;width:0;height:0;display:flex;justify-content:flex-end"><span style="white-space:pre;line-height:1;font-family:'Liberation Sans',sans-serif;font-size:22.67px;font-weight:400;color:#161616;transform:scaleX(0.9550);transform-origin:100% 0;">50,500</span></div><div style="position:absolute;left:2769.00px;top:1403.50px;width:0;height:0;display:flex;justify-content:flex-end"><span style="white-space:pre;line-height:1;font-family:'Liberation Sans',sans-serif;font-size:22.67px;font-weight:400;color:#161616;transform:scaleX(0.9550);transform-origin:100% 0;">27,500</span></div><div style="position:absolute;left:163.80px;top:1431.70px;width:0;height:0;display:flex;justify-content:flex-start"><span style="white-space:pre;line-height:1;font-family:'Liberation Sans',sans-serif;font-size:22.67px;font-weight:400;color:#161616;transform:scaleX(0.9699);transform-origin:0 0;">Depreciation (Depreciation Period (Years) - 10)</span></div><div style="position:absolute;left:1924.00px;top:1431.70px;width:0;height:0;display:flex;justify-content:flex-end"><span style="white-space:pre;line-height:1;font-family:'Liberation Sans',sans-serif;font-size:22.67px;font-weight:400;color:#161616;transform:scaleX(0.9550);transform-origin:100% 0;">694</span></div><div style="position:absolute;left:2093.00px;top:1431.70px;width:0;height:0;display:flex;justify-content:flex-end"><span style="white-space:pre;line-height:1;font-family:'Liberation Sans',sans-serif;font-size:22.67px;font-weight:400;color:#161616;transform:scaleX(0.9550);transform-origin:100% 0;">1,889</span></div><div style="position:absolute;left:2262.00px;top:1431.70px;width:0;height:0;display:flex;justify-content:flex-end"><span style="white-space:pre;line-height:1;font-family:'Liberation Sans',sans-serif;font-size:22.67px;font-weight:400;color:#161616;transform:scaleX(0.9550);transform-origin:100% 0;">3,375</span></div><div style="position:absolute;left:2431.00px;top:1431.70px;width:0;height:0;display:flex;justify-content:flex-end"><span style="white-space:pre;line-height:1;font-family:'Liberation Sans',sans-serif;font-size:22.67px;font-weight:400;color:#161616;transform:scaleX(0.9550);transform-origin:100% 0;">4,271</span></div><div style="position:absolute;left:2600.00px;top:1431.70px;width:0;height:0;display:flex;justify-content:flex-end"><span style="white-space:pre;line-height:1;font-family:'Liberation Sans',sans-serif;font-size:22.67px;font-weight:400;color:#161616;transform:scaleX(0.9550);transform-origin:100% 0;">4,692</span></div><div style="position:absolute;left:2769.00px;top:1431.70px;width:0;height:0;display:flex;justify-content:flex-end"><span style="white-space:pre;line-height:1;font-family:'Liberation Sans',sans-serif;font-size:22.67px;font-weight:400;color:#161616;transform:scaleX(0.9550);transform-origin:100% 0;">4,921</span></div><div style="position:absolute;left:138.20px;top:1457.60px;width:2722.10px;height:28.00px;background:#4bb2e6;"></div><div style="position:absolute;left:143.90px;top:1460.80px;width:0;height:0;display:flex;justify-content:flex-start"><span style="white-space:pre;line-height:1;font-family:'Liberation Sans',sans-serif;font-size:22.67px;font-weight:700;color:#fff;-webkit-text-stroke:0.45px #fff;">Closing Net Book Value</span></div><div style="position:absolute;left:1722.00px;top:1460.80px;width:0;height:0;display:flex;justify-content:center"><span style="white-space:pre;line-height:1;font-family:'Liberation Sans',sans-serif;font-size:22.67px;font-weight:700;color:#fff;-webkit-text-stroke:0.45px #fff;">-</span></div><div style="position:absolute;left:1921.00px;top:1460.80px;width:0;height:0;display:flex;justify-content:flex-end"><span style="white-space:pre;line-height:1;font-family:'Liberation Sans',sans-serif;font-size:22.67px;font-weight:700;color:#fff;transform:scaleX(1.0900);transform-origin:100% 0;-webkit-text-stroke:0.45px #fff;">82,639</span></div><div style="position:absolute;left:2090.00px;top:1460.80px;width:0;height:0;display:flex;justify-content:flex-end"><span style="white-space:pre;line-height:1;font-family:'Liberation Sans',sans-serif;font-size:22.67px;font-weight:700;color:#fff;transform:scaleX(1.0900);transform-origin:100% 0;-webkit-text-stroke:0.45px #fff;">224,083</span></div><div style="position:absolute;left:2259.00px;top:1460.80px;width:0;height:0;display:flex;justify-content:flex-end"><span style="white-space:pre;line-height:1;font-family:'Liberation Sans',sans-serif;font-size:22.67px;font-weight:700;color:#fff;transform:scaleX(1.0900);transform-origin:100% 0;-webkit-text-stroke:0.45px #fff;">399,042</span></div><div style="position:absolute;left:2428.00px;top:1460.80px;width:0;height:0;display:flex;justify-content:flex-end"><span style="white-space:pre;line-height:1;font-family:'Liberation Sans',sans-serif;font-size:22.67px;font-weight:700;color:#fff;transform:scaleX(1.0900);transform-origin:100% 0;-webkit-text-stroke:0.45px #fff;">502,271</span></div><div style="position:absolute;left:2597.00px;top:1460.80px;width:0;height:0;display:flex;justify-content:flex-end"><span style="white-space:pre;line-height:1;font-family:'Liberation Sans',sans-serif;font-size:22.67px;font-weight:700;color:#fff;transform:scaleX(1.0900);transform-origin:100% 0;-webkit-text-stroke:0.45px #fff;">548,079</span></div><div style="position:absolute;left:2766.00px;top:1460.80px;width:0;height:0;display:flex;justify-content:flex-end"><span style="white-space:pre;line-height:1;font-family:'Liberation Sans',sans-serif;font-size:22.67px;font-weight:700;color:#fff;transform:scaleX(1.0900);transform-origin:100% 0;-webkit-text-stroke:0.45px #fff;">570,658</span></div><div style="position:absolute;left:2846.00px;top:1460.80px;width:0;height:0;display:flex;justify-content:flex-start"><span style="white-space:pre;line-height:1;font-family:'Liberation Sans',sans-serif;font-size:22.67px;font-weight:700;color:#fff;transform:scaleX(1.0900);transform-origin:0 0;-webkit-text-stroke:0.45px #fff;">5</span></div><div style="position:absolute;left:138.20px;top:1527.60px;width:2722.10px;height:27.80px;background:#4bb2e6;"></div><div style="position:absolute;left:143.90px;top:1530.80px;width:0;height:0;display:flex;justify-content:flex-start"><span style="white-space:pre;line-height:1;font-family:'Liberation Sans',sans-serif;font-size:22.67px;font-weight:700;color:#fff;-webkit-text-stroke:0.45px #fff;">Opening Net Book Value</span></div><div style="position:absolute;left:1890.00px;top:1530.80px;width:0;height:0;display:flex;justify-content:center"><span style="white-space:pre;line-height:1;font-family:'Liberation Sans',sans-serif;font-size:22.67px;font-weight:700;color:#fff;transform:scaleX(1.0900);transform-origin:50% 0;-webkit-text-stroke:0.45px #fff;">-</span></div><div style="position:absolute;left:2059.00px;top:1530.80px;width:0;height:0;display:flex;justify-content:center"><span style="white-space:pre;line-height:1;font-family:'Liberation Sans',sans-serif;font-size:22.67px;font-weight:700;color:#fff;transform:scaleX(1.0900);transform-origin:50% 0;-webkit-text-stroke:0.45px #fff;">-</span></div><div style="position:absolute;left:2228.00px;top:1530.80px;width:0;height:0;display:flex;justify-content:center"><span style="white-space:pre;line-height:1;font-family:'Liberation Sans',sans-serif;font-size:22.67px;font-weight:700;color:#fff;transform:scaleX(1.0900);transform-origin:50% 0;-webkit-text-stroke:0.45px #fff;">-</span></div><div style="position:absolute;left:2397.00px;top:1530.80px;width:0;height:0;display:flex;justify-content:center"><span style="white-space:pre;line-height:1;font-family:'Liberation Sans',sans-serif;font-size:22.67px;font-weight:700;color:#fff;transform:scaleX(1.0900);transform-origin:50% 0;-webkit-text-stroke:0.45px #fff;">-</span></div><div style="position:absolute;left:2566.00px;top:1530.80px;width:0;height:0;display:flex;justify-content:center"><span style="white-space:pre;line-height:1;font-family:'Liberation Sans',sans-serif;font-size:22.67px;font-weight:700;color:#fff;transform:scaleX(1.0900);transform-origin:50% 0;-webkit-text-stroke:0.45px #fff;">-</span></div><div style="position:absolute;left:2735.00px;top:1530.80px;width:0;height:0;display:flex;justify-content:center"><span style="white-space:pre;line-height:1;font-family:'Liberation Sans',sans-serif;font-size:22.67px;font-weight:700;color:#fff;transform:scaleX(1.0900);transform-origin:50% 0;-webkit-text-stroke:0.45px #fff;">-</span></div><div style="position:absolute;left:163.80px;top:1557.70px;width:0;height:0;display:flex;justify-content:flex-start"><span style="white-space:pre;line-height:1;font-family:'Liberation Sans',sans-serif;font-size:22.67px;font-weight:400;color:#161616;transform:scaleX(0.9584);transform-origin:0 0;">Expenditure - Non-Amortizable</span></div><div style="position:absolute;left:1896.00px;top:1557.70px;width:0;height:0;display:flex;justify-content:center"><span style="white-space:pre;line-height:1;font-family:'Liberation Sans',sans-serif;font-size:22.67px;font-weight:400;color:#161616;transform:scaleX(0.9550);transform-origin:50% 0;">-</span></div><div style="position:absolute;left:2065.00px;top:1557.70px;width:0;height:0;display:flex;justify-content:center"><span style="white-space:pre;line-height:1;font-family:'Liberation Sans',sans-serif;font-size:22.67px;font-weight:400;color:#161616;transform:scaleX(0.9550);transform-origin:50% 0;">-</span></div><div style="position:absolute;left:2234.00px;top:1557.70px;width:0;height:0;display:flex;justify-content:center"><span style="white-space:pre;line-height:1;font-family:'Liberation Sans',sans-serif;font-size:22.67px;font-weight:400;color:#161616;transform:scaleX(0.9550);transform-origin:50% 0;">-</span></div><div style="position:absolute;left:2403.00px;top:1557.70px;width:0;height:0;display:flex;justify-content:center"><span style="white-space:pre;line-height:1;font-family:'Liberation Sans',sans-serif;font-size:22.67px;font-weight:400;color:#161616;transform:scaleX(0.9550);transform-origin:50% 0;">-</span></div><div style="position:absolute;left:2572.00px;top:1557.70px;width:0;height:0;display:flex;justify-content:center"><span style="white-space:pre;line-height:1;font-family:'Liberation Sans',sans-serif;font-size:22.67px;font-weight:400;color:#161616;transform:scaleX(0.9550);transform-origin:50% 0;">-</span></div><div style="position:absolute;left:2741.00px;top:1557.70px;width:0;height:0;display:flex;justify-content:center"><span style="white-space:pre;line-height:1;font-family:'Liberation Sans',sans-serif;font-size:22.67px;font-weight:400;color:#161616;transform:scaleX(0.9550);transform-origin:50% 0;">-</span></div><div style="position:absolute;left:138.20px;top:1583.50px;width:2722.10px;height:28.10px;background:#4bb2e6;"></div><div style="position:absolute;left:143.90px;top:1586.70px;width:0;height:0;display:flex;justify-content:flex-start"><span style="white-space:pre;line-height:1;font-family:'Liberation Sans',sans-serif;font-size:22.67px;font-weight:700;color:#fff;-webkit-text-stroke:0.45px #fff;">Closing Net Book Value</span></div><div style="position:absolute;left:1890.00px;top:1586.70px;width:0;height:0;display:flex;justify-content:center"><span style="white-space:pre;line-height:1;font-family:'Liberation Sans',sans-serif;font-size:22.67px;font-weight:700;color:#fff;transform:scaleX(1.0900);transform-origin:50% 0;-webkit-text-stroke:0.45px #fff;">-</span></div><div style="position:absolute;left:2059.00px;top:1586.70px;width:0;height:0;display:flex;justify-content:center"><span style="white-space:pre;line-height:1;font-family:'Liberation Sans',sans-serif;font-size:22.67px;font-weight:700;color:#fff;transform:scaleX(1.0900);transform-origin:50% 0;-webkit-text-stroke:0.45px #fff;">-</span></div><div style="position:absolute;left:2228.00px;top:1586.70px;width:0;height:0;display:flex;justify-content:center"><span style="white-space:pre;line-height:1;font-family:'Liberation Sans',sans-serif;font-size:22.67px;font-weight:700;color:#fff;transform:scaleX(1.0900);transform-origin:50% 0;-webkit-text-stroke:0.45px #fff;">-</span></div><div style="position:absolute;left:2397.00px;top:1586.70px;width:0;height:0;display:flex;justify-content:center"><span style="white-space:pre;line-height:1;font-family:'Liberation Sans',sans-serif;font-size:22.67px;font-weight:700;color:#fff;transform:scaleX(1.0900);transform-origin:50% 0;-webkit-text-stroke:0.45px #fff;">-</span></div><div style="position:absolute;left:2566.00px;top:1586.70px;width:0;height:0;display:flex;justify-content:center"><span style="white-space:pre;line-height:1;font-family:'Liberation Sans',sans-serif;font-size:22.67px;font-weight:700;color:#fff;transform:scaleX(1.0900);transform-origin:50% 0;-webkit-text-stroke:0.45px #fff;">-</span></div><div style="position:absolute;left:2735.00px;top:1586.70px;width:0;height:0;display:flex;justify-content:center"><span style="white-space:pre;line-height:1;font-family:'Liberation Sans',sans-serif;font-size:22.67px;font-weight:700;color:#fff;transform:scaleX(1.0900);transform-origin:50% 0;-webkit-text-stroke:0.45px #fff;">-</span></div><div style="position:absolute;left:11.00px;top:513.40px;width:2849.30px;height:1.20px;background:#a6a6a6;"></div><div style="position:absolute;left:1766.50px;top:305.00px;width:1.20px;height:1365.20px;background:#a6a6a6;"></div><div style="position:absolute;left:2860.30px;top:277.70px;width:30.20px;height:1400.50px;background:#0a0a0a;"></div><div style="position:absolute;left:2861.30px;top:279.00px;width:28.70px;height:1397.20px;background:#141414;border-radius:14px;"></div><svg style="position:absolute;left:2868.00px;top:284.00px;" width="16" height="14" viewBox="0 0 16 14"><path d="M8 1.5 L14.5 12.5 L1.5 12.5 Z" fill="#9d9d9d" stroke="#9d9d9d" stroke-width="1.5" stroke-linejoin="round"/></svg><div style="position:absolute;left:2870.00px;top:304.00px;width:12.20px;height:1311.00px;background:#9d9d9d;border-radius:6px;"></div><svg style="position:absolute;left:2868.00px;top:1652.00px;" width="16" height="14" viewBox="0 0 16 14"><path d="M8 12.5 L14.5 1.5 L1.5 1.5 Z" fill="#9d9d9d" stroke="#9d9d9d" stroke-width="1.5" stroke-linejoin="round"/></svg><div style="position:absolute;left:11.00px;top:1670.20px;width:2849.30px;height:47.80px;background:#0d0d0d;"></div><svg style="position:absolute;left:43.00px;top:1684.00px;" width="14" height="18" viewBox="0 0 14 18"><path d="M10 2.5 L3.5 9 L10 15.5" stroke="#9a9a9a" stroke-width="1.6" fill="none"/></svg><svg style="position:absolute;left:92.00px;top:1684.00px;" width="14" height="18" viewBox="0 0 14 18"><path d="M4 2.5 L10.5 9 L4 15.5" stroke="#e6e6e6" stroke-width="1.6" fill="none"/></svg><div style="position:absolute;left:190.50px;top:1684.76px;width:0;height:0;display:flex;justify-content:flex-start"><span style="white-space:pre;line-height:1;font-family:'Liberation Sans',sans-serif;font-size:21.66px;font-weight:400;color:#ffffff;transform:scaleX(0.9443);transform-origin:0 0;">Contents</span></div><div style="position:absolute;left:299.10px;top:1676.00px;width:127.90px;height:36.00px;background:#fdee77;border-radius:6px;"></div><div style="position:absolute;left:363.05px;top:1684.66px;width:0;height:0;display:flex;justify-content:center"><span style="white-space:pre;line-height:1;font-family:'Liberation Sans',sans-serif;font-size:21.66px;font-weight:400;color:#151515;transform:scaleX(0.9400);transform-origin:50% 0;">Dashboard</span></div><div style="position:absolute;left:440.30px;top:1676.00px;width:105.60px;height:36.00px;background:#fdee77;border-radius:6px;"></div><div style="position:absolute;left:493.10px;top:1684.66px;width:0;height:0;display:flex;justify-content:center"><span style="white-space:pre;line-height:1;font-family:'Liberation Sans',sans-serif;font-size:21.66px;font-weight:400;color:#151515;transform:scaleX(0.9400);transform-origin:50% 0;">Revenue</span></div><div style="position:absolute;left:559.30px;top:1676.00px;width:157.80px;height:36.00px;background:#fdee77;border-radius:6px;"></div><div style="position:absolute;left:638.20px;top:1684.66px;width:0;height:0;display:flex;justify-content:center"><span style="white-space:pre;line-height:1;font-family:'Liberation Sans',sans-serif;font-size:21.66px;font-weight:400;color:#151515;transform:scaleX(0.9400);transform-origin:50% 0;">COGS &amp; OPEX</span></div><div style="position:absolute;left:729.70px;top:1676.00px;width:89.30px;height:36.00px;background:#fdee77;border-radius:6px;"></div><div style="position:absolute;left:774.35px;top:1684.66px;width:0;height:0;display:flex;justify-content:center"><span style="white-space:pre;line-height:1;font-family:'Liberation Sans',sans-serif;font-size:21.66px;font-weight:400;color:#151515;transform:scaleX(0.9400);transform-origin:50% 0;">Payroll</span></div><div style="position:absolute;left:824.3px;top:1669.5px;width:102.0px;height:7px;background:#ffffff"></div><div style="position:absolute;left:821.3px;top:1669.5px;width:10px;height:12px;background:#0d0d0d;border-radius:0 7px 0 0"></div><div style="position:absolute;left:919.3px;top:1669.5px;width:10px;height:12px;background:#0d0d0d;border-radius:7px 0 0 0"></div><div style="position:absolute;left:831.3px;top:1669.5px;width:88.0px;height:42.5px;background:#fffdf2;border-radius:0 0 7px 7px"></div><div style="position:absolute;left:875.30px;top:1679.73px;width:0;height:0;display:flex;justify-content:center"><span style="white-space:pre;line-height:1;font-family:'Liberation Sans',sans-serif;font-size:21.22px;font-weight:400;color:#1a1a1a;transform:scaleX(0.8632);transform-origin:50% 0;">CAPEX</span></div><div style="position:absolute;left:844.30px;top:1704.90px;width:62.70px;height:3.10px;background:#1b7d3e;"></div><div style="position:absolute;left:931.90px;top:1676.00px;width:112.70px;height:36.00px;background:#fdee77;border-radius:6px;"></div><div style="position:absolute;left:988.25px;top:1684.66px;width:0;height:0;display:flex;justify-content:center"><span style="white-space:pre;line-height:1;font-family:'Liberation Sans',sans-serif;font-size:21.66px;font-weight:400;color:#151515;transform:scaleX(0.9400);transform-origin:50% 0;">CapTable</span></div><div style="position:absolute;left:1058.00px;top:1676.00px;width:90.10px;height:36.00px;background:#fdee77;border-radius:6px;"></div><div style="position:absolute;left:1103.05px;top:1684.66px;width:0;height:0;display:flex;justify-content:center"><span style="white-space:pre;line-height:1;font-family:'Liberation Sans',sans-serif;font-size:21.66px;font-weight:400;color:#151515;transform:scaleX(0.9400);transform-origin:50% 0;">Capital</span></div><div style="position:absolute;left:1161.10px;top:1676.00px;width:41.90px;height:36.00px;background:#4db3e6;border-radius:6px;"></div><div style="position:absolute;left:1182.05px;top:1684.66px;width:0;height:0;display:flex;justify-content:center"><span style="white-space:pre;line-height:1;font-family:'Liberation Sans',sans-serif;font-size:21.66px;font-weight:400;color:#151515;transform:scaleX(0.9400);transform-origin:50% 0;">IS</span></div><div style="position:absolute;left:1216.00px;top:1676.00px;width:47.80px;height:36.00px;background:#4db3e6;border-radius:6px;"></div><div style="position:absolute;left:1239.90px;top:1684.66px;width:0;height:0;display:flex;justify-content:center"><span style="white-space:pre;line-height:1;font-family:'Liberation Sans',sans-serif;font-size:21.66px;font-weight:400;color:#151515;transform:scaleX(0.9400);transform-origin:50% 0;">CF</span></div><div style="position:absolute;left:1277.20px;top:1676.00px;width:47.50px;height:36.00px;background:#4db3e6;border-radius:6px;"></div><div style="position:absolute;left:1300.95px;top:1684.66px;width:0;height:0;display:flex;justify-content:center"><span style="white-space:pre;line-height:1;font-family:'Liberation Sans',sans-serif;font-size:21.66px;font-weight:400;color:#151515;transform:scaleX(0.9400);transform-origin:50% 0;">BS</span></div><div style="position:absolute;left:1338.00px;top:1676.00px;width:114.50px;height:36.00px;background:#4db3e6;border-radius:6px;"></div><div style="position:absolute;left:1395.25px;top:1684.66px;width:0;height:0;display:flex;justify-content:center"><span style="white-space:pre;line-height:1;font-family:'Liberation Sans',sans-serif;font-size:21.66px;font-weight:400;color:#151515;transform:scaleX(0.9400);transform-origin:50% 0;">Scenarios</span></div><div style="position:absolute;left:1465.90px;top:1676.00px;width:114.50px;height:36.00px;background:#4db3e6;border-radius:6px;"></div><div style="position:absolute;left:1523.15px;top:1684.66px;width:0;height:0;display:flex;justify-content:center"><span style="white-space:pre;line-height:1;font-family:'Liberation Sans',sans-serif;font-size:21.66px;font-weight:400;color:#151515;transform:scaleX(0.9400);transform-origin:50% 0;">Valuation</span></div><div style="position:absolute;left:1593.70px;top:1676.00px;width:113.70px;height:36.00px;background:#4db3e6;border-radius:6px;"></div><div style="position:absolute;left:1650.55px;top:1684.66px;width:0;height:0;display:flex;justify-content:center"><span style="white-space:pre;line-height:1;font-family:'Liberation Sans',sans-serif;font-size:21.66px;font-weight:400;color:#151515;transform:scaleX(0.9400);transform-origin:50% 0;">Summary</span></div><div style="position:absolute;left:1721.20px;top:1676.00px;width:47.10px;height:36.00px;background:#4db3e6;border-radius:6px;"></div><div style="position:absolute;left:1744.75px;top:1684.66px;width:0;height:0;display:flex;justify-content:center"><span style="white-space:pre;line-height:1;font-family:'Liberation Sans',sans-serif;font-size:21.66px;font-weight:400;color:#151515;transform:scaleX(0.9400);transform-origin:50% 0;">BE</span></div><div style="position:absolute;left:1782.00px;top:1676.00px;width:71.50px;height:36.00px;background:#4db3e6;border-radius:6px;"></div><div style="position:absolute;left:1817.75px;top:1684.66px;width:0;height:0;display:flex;justify-content:center"><span style="white-space:pre;line-height:1;font-family:'Liberation Sans',sans-serif;font-size:21.66px;font-weight:400;color:#151515;transform:scaleX(0.9400);transform-origin:50% 0;">ROIC</span></div><div style="position:absolute;left:1867.30px;top:1676.00px;width:84.40px;height:36.00px;background:#4db3e6;border-radius:6px;"></div><div style="position:absolute;left:1909.50px;top:1684.66px;width:0;height:0;display:flex;justify-content:center"><span style="white-space:pre;line-height:1;font-family:'Liberation Sans',sans-serif;font-size:21.66px;font-weight:400;color:#151515;transform:scaleX(0.9400);transform-origin:50% 0;">Charts</span></div><div style="position:absolute;left:1965.00px;top:1676.00px;width:64.00px;height:36.00px;background:#4db3e6;border-radius:6px;"></div><div style="position:absolute;left:1997.00px;top:1684.66px;width:0;height:0;display:flex;justify-content:center"><span style="white-space:pre;line-height:1;font-family:'Liberation Sans',sans-serif;font-size:21.66px;font-weight:400;color:#151515;transform:scaleX(0.9400);transform-origin:50% 0;">KPIs</span></div><div style="position:absolute;left:2042.3px;top:1676px;width:29.7px;height:36px;background:#4db3e6;border-radius:6px 0 0 6px;overflow:hidden"><div style="position:absolute;left:11.5px;top:6px;width:0;height:0;display:flex"><span style="white-space:pre;line-height:1;font-family:'Liberation Sans';font-size:21.7px;color:#151515;transform:scaleX(0.94);transform-origin:0 0">Sc</span></div></div><div style="position:absolute;left:292.20px;top:1680.40px;width:1.30px;height:27.60px;background:#6a6a6a;"></div><div style="position:absolute;left:433.00px;top:1680.40px;width:1.30px;height:27.60px;background:#6a6a6a;"></div><div style="position:absolute;left:551.90px;top:1680.40px;width:1.30px;height:27.60px;background:#6a6a6a;"></div><div style="position:absolute;left:723.10px;top:1680.40px;width:1.30px;height:27.60px;background:#6a6a6a;"></div><div style="position:absolute;left:825.00px;top:1680.40px;width:1.30px;height:27.60px;background:#6a6a6a;"></div><div style="position:absolute;left:925.30px;top:1680.40px;width:1.30px;height:27.60px;background:#6a6a6a;"></div><div style="position:absolute;left:1050.60px;top:1680.40px;width:1.30px;height:27.60px;background:#6a6a6a;"></div><div style="position:absolute;left:1154.10px;top:1680.40px;width:1.30px;height:27.60px;background:#6a6a6a;"></div><div style="position:absolute;left:1209.00px;top:1680.40px;width:1.30px;height:27.60px;background:#6a6a6a;"></div><div style="position:absolute;left:1269.80px;top:1680.40px;width:1.30px;height:27.60px;background:#6a6a6a;"></div><div style="position:absolute;left:1330.70px;top:1680.40px;width:1.30px;height:27.60px;background:#6a6a6a;"></div><div style="position:absolute;left:1458.50px;top:1680.40px;width:1.30px;height:27.60px;background:#6a6a6a;"></div><div style="position:absolute;left:1586.40px;top:1680.40px;width:1.30px;height:27.60px;background:#6a6a6a;"></div><div style="position:absolute;left:1713.40px;top:1680.40px;width:1.30px;height:27.60px;background:#6a6a6a;"></div><div style="position:absolute;left:1774.30px;top:1680.40px;width:1.30px;height:27.60px;background:#6a6a6a;"></div><div style="position:absolute;left:1859.50px;top:1680.40px;width:1.30px;height:27.60px;background:#6a6a6a;"></div><div style="position:absolute;left:1957.70px;top:1680.40px;width:1.30px;height:27.60px;background:#6a6a6a;"></div><div style="position:absolute;left:2035.00px;top:1680.40px;width:1.30px;height:27.60px;background:#6a6a6a;"></div><div style="position:absolute;left:2086.5px;top:1690.2px;width:4.4px;height:4.4px;border-radius:50%;background:#e6e6e6"></div><div style="position:absolute;left:2093.0px;top:1690.2px;width:4.4px;height:4.4px;border-radius:50%;background:#e6e6e6"></div><div style="position:absolute;left:2099.5px;top:1690.2px;width:4.4px;height:4.4px;border-radius:50%;background:#e6e6e6"></div><svg style="position:absolute;left:2133.00px;top:1683.00px;" width="20" height="20" viewBox="0 0 20 20"><path d="M10 2 V18 M2 10 H18" stroke="#e6e6e6" stroke-width="1.7"/></svg><div style="position:absolute;left:2189.5px;top:1685.7px;width:4.2px;height:4.2px;border-radius:50%;background:#e6e6e6"></div><div style="position:absolute;left:2189.5px;top:1692.2px;width:4.2px;height:4.2px;border-radius:50%;background:#e6e6e6"></div><div style="position:absolute;left:2189.5px;top:1698.7px;width:4.2px;height:4.2px;border-radius:50%;background:#e6e6e6"></div><div style="position:absolute;left:2216.40px;top:1680.00px;width:643.30px;height:26.50px;background:#161616;border-radius:13px;"></div><svg style="position:absolute;left:2222.00px;top:1686.00px;" width="14" height="16" viewBox="0 0 14 16"><path d="M11 2 L3 8 L11 14 Z" fill="#9d9d9d" stroke="#9d9d9d" stroke-width="1.2" stroke-linejoin="round"/></svg><div style="position:absolute;left:2241.60px;top:1686.60px;width:54.90px;height:13.00px;background:#9d9d9d;border-radius:6.5px;"></div><svg style="position:absolute;left:2841.00px;top:1686.00px;" width="14" height="16" viewBox="0 0 14 16"><path d="M3 2 L11 8 L3 14 Z" fill="#9d9d9d" stroke="#9d9d9d" stroke-width="1.2" stroke-linejoin="round"/></svg><div style="position:absolute;left:11.00px;top:1718.00px;width:2879.50px;height:33.00px;background:#141414;"></div><div style="position:absolute;left:11.00px;top:1717.40px;width:2879.50px;height:1.20px;background:#2e2e2e;"></div><div style="position:absolute;left:27.20px;top:1728.22px;width:0;height:0;display:flex;justify-content:flex-start"><span style="white-space:pre;line-height:1;font-family:'Liberation Sans',sans-serif;font-size:16.28px;font-weight:400;color:#e6e6e6;transform:scaleX(0.9058);transform-origin:0 0;">Ready</span></div><svg style="position:absolute;left:96.00px;top:1721.00px;" width="28" height="26" viewBox="0 0 28 26"><rect x="3.5" y="4" width="19" height="17" stroke="#e6e6e6" stroke-width="1.5" fill="none"/><path d="M3.5 8 H22.5 M8 8 V21 M3.5 12.5 H8 M3.5 16.5 H8" stroke="#e6e6e6" stroke-width="1.3"/><circle cx="17.5" cy="17" r="5" fill="#141414" stroke="#e6e6e6" stroke-width="1.5"/><circle cx="17.5" cy="17" r="1.8" fill="#e6e6e6"/></svg><svg style="position:absolute;left:143.00px;top:1721.00px;" width="28" height="28" viewBox="0 0 28 28"><circle cx="12" cy="4.6" r="2.4" stroke="#ececec" stroke-width="1.7" fill="none"/><path d="M3.5 9 C6 11 8.5 11.2 12 10.8 C15.5 11.2 18 11 20.5 9" stroke="#ececec" stroke-width="1.8" fill="none" stroke-linecap="round"/><path d="M12 11 V16.5 L8.5 24.5 M12 16.5 L13.5 19" stroke="#ececec" stroke-width="1.8" fill="none" stroke-linecap="round"/><path d="M15.5 17.5 L22.5 24.5 M22.5 17.5 L15.5 24.5" stroke="#ececec" stroke-width="1.6"/></svg><div style="position:absolute;left:173.80px;top:1727.42px;width:0;height:0;display:flex;justify-content:flex-start"><span style="white-space:pre;line-height:1;font-family:'Liberation Sans',sans-serif;font-size:16.28px;font-weight:700;color:#ffffff;transform:scaleX(0.9631);transform-origin:0 0;">Accessibility: Investigate</span></div><div style="position:absolute;left:2445.00px;top:1718.60px;width:59.70px;height:32.40px;background:#262626;"></div><svg style="position:absolute;left:2463.00px;top:1723.00px;" width="24" height="24" viewBox="0 0 24 24"><rect x="2.5" y="2.5" width="19" height="19" stroke="#e6e6e6" stroke-width="1.4" fill="none"/><path d="M2.5 8.8 H21.5 M2.5 15.2 H21.5 M8.8 2.5 V21.5 M15.2 2.5 V21.5" stroke="#e6e6e6" stroke-width="1.4"/></svg><svg style="position:absolute;left:2522.00px;top:1723.00px;" width="24" height="24" viewBox="0 0 24 24"><rect x="2.5" y="2.5" width="19" height="19" stroke="#e6e6e6" stroke-width="1.4" fill="none"/><rect x="6.5" y="5.5" width="11" height="13" stroke="#e6e6e6" stroke-width="1.3" fill="none"/><path d="M8.5 9 H15.5 M8.5 12 H15.5 M8.5 15 H15.5" stroke="#e6e6e6" stroke-width="1.1"/></svg><svg style="position:absolute;left:2582.00px;top:1723.00px;" width="24" height="24" viewBox="0 0 24 24"><path d="M2.5 2.5 H21.5 V21.5 H2.5 Z M2.5 12.5 H13.5 V2.5 M8 2.5 V12.5" stroke="#e6e6e6" stroke-width="1.4" fill="none"/></svg><div style="position:absolute;left:2632.50px;top:1734.40px;width:11.50px;height:1.10px;background:#e6e6e6;"></div><div style="position:absolute;left:2653.00px;top:1734.40px;width:147.80px;height:1.40px;background:#bdbdbd;"></div><div style="position:absolute;left:2727.50px;top:1730.50px;width:1.50px;height:9.00px;background:#bdbdbd;"></div><div style="position:absolute;left:2733.00px;top:1726.00px;width:8.00px;height:17.00px;background:#bdbdbd;border-radius:0.8px;"></div><svg style="position:absolute;left:2805.00px;top:1725.00px;" width="20" height="20" viewBox="0 0 20 20"><path d="M10 2.5 V17.5 M2.5 10 H17.5" stroke="#e6e6e6" stroke-width="1.5"/></svg><div style="position:absolute;left:2840.70px;top:1727.85px;width:0;height:0;display:flex;justify-content:flex-start"><span style="white-space:pre;line-height:1;font-family:'Liberation Sans',sans-serif;font-size:15.41px;font-weight:400;color:#ffffff;transform:scaleX(0.9676);transform-origin:0 0;">140%</span></div></body></html>
